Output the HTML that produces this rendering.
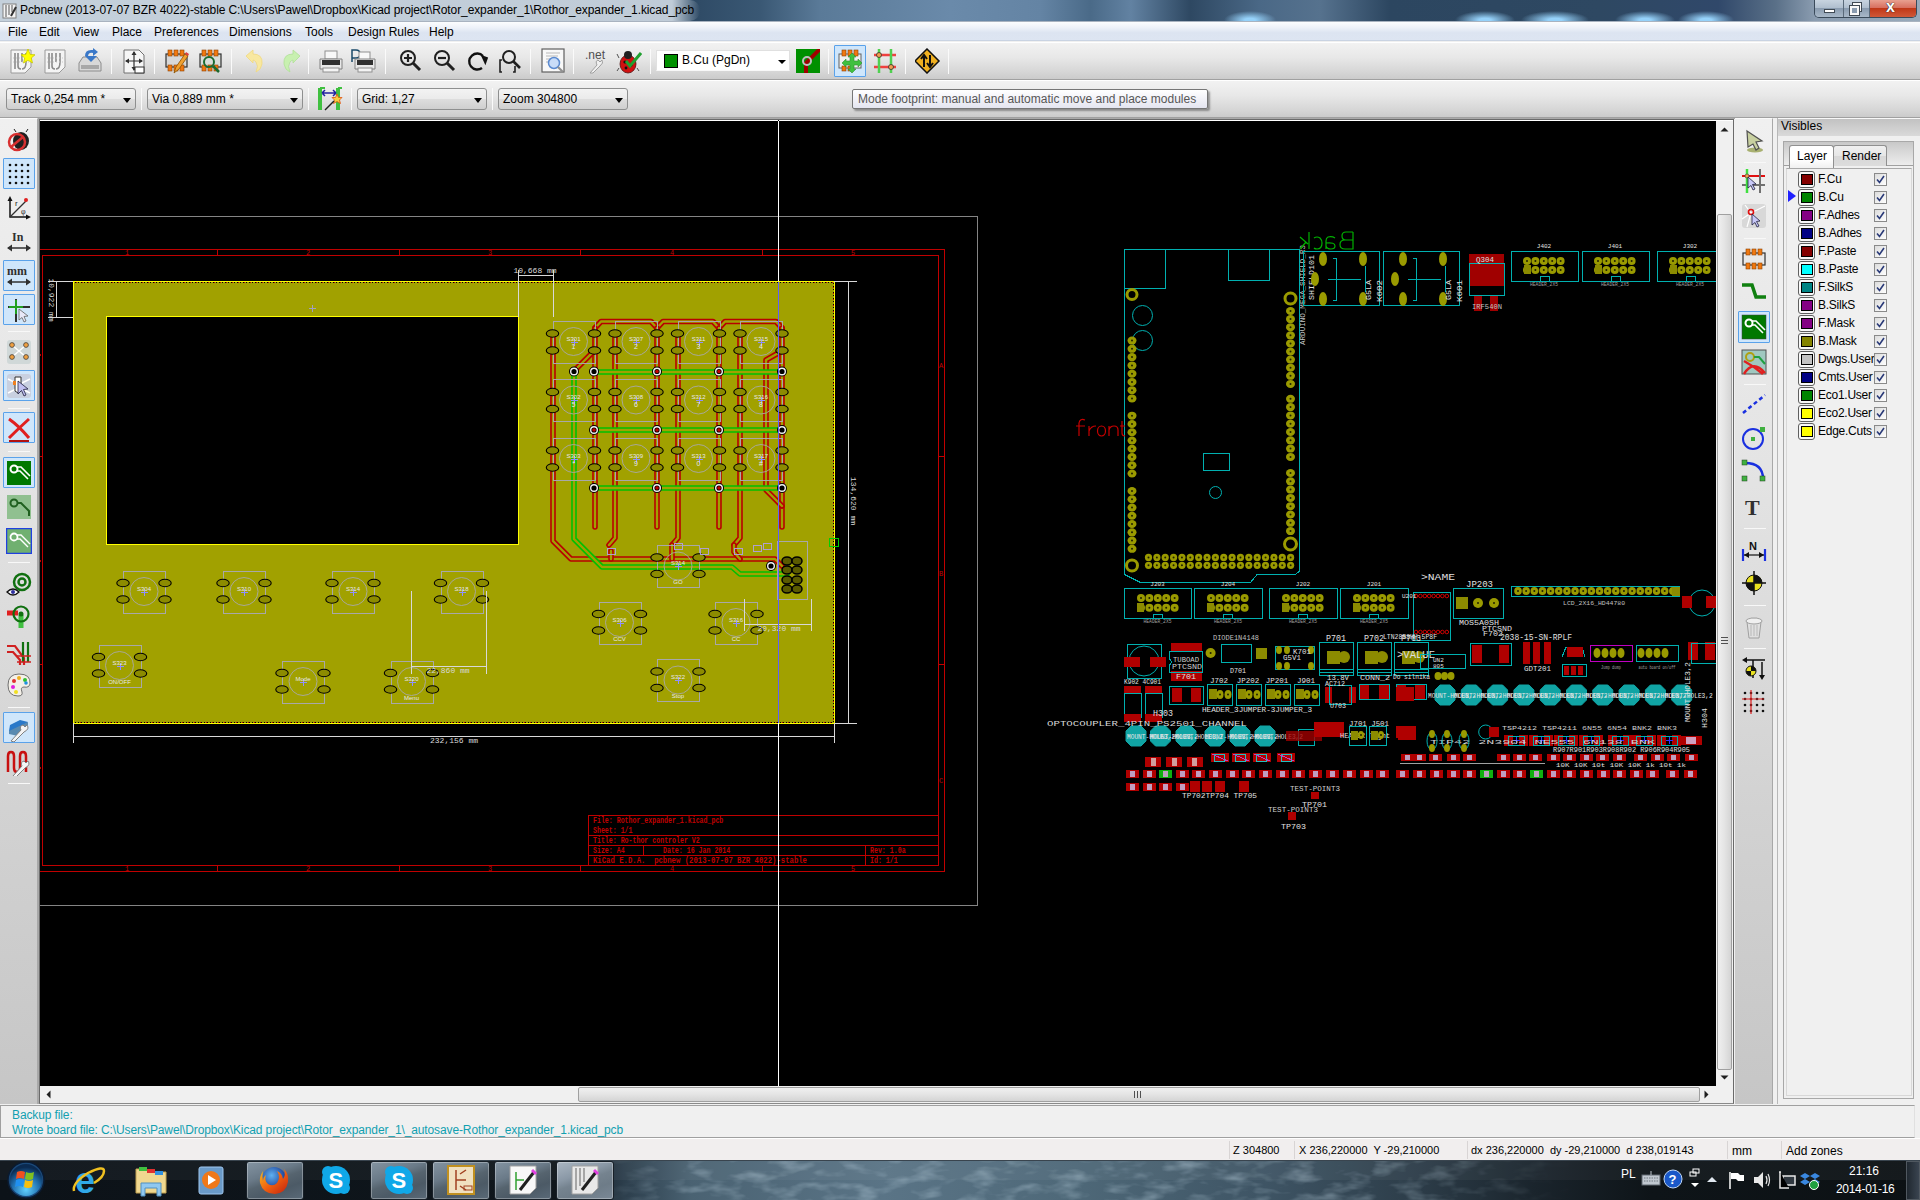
<!DOCTYPE html><html><head><meta charset="utf-8"><style>*{margin:0;padding:0;box-sizing:border-box}
html,body{width:1920px;height:1200px;overflow:hidden;background:#f0f0f0;font-family:"Liberation Sans",sans-serif;font-size:12px;color:#000}
.a{position:absolute}
svg{overflow:hidden}
#title{left:0;top:0;width:1920px;height:22px;overflow:hidden;
background:
 radial-gradient(ellipse 26px 9px at 1250px 20px,rgba(150,210,250,1) 20%,rgba(150,210,250,0)),
 radial-gradient(ellipse 30px 9px at 1485px 20px,rgba(150,210,250,1) 20%,rgba(150,210,250,0)),
 radial-gradient(ellipse 34px 9px at 1555px 20px,rgba(150,210,250,1) 20%,rgba(150,210,250,0)),
 radial-gradient(ellipse 30px 9px at 1645px 20px,rgba(150,210,250,1) 20%,rgba(150,210,250,0)),
 radial-gradient(ellipse 28px 9px at 1706px 20px,rgba(150,210,250,1) 20%,rgba(150,210,250,0)),
 linear-gradient(90deg,#2f4b66 36.3%,#3a5874 39.6%,#5a7a98 42.7%,#6a8aaa 49.5%,#6484a4 54.2%,#4a6a88 56.8%,#6282a2 58.9%,#2e4862 62%,#4a6886 65.6%,#56728e 68.75%,#2c4660 72.4%,#2e4862 83.3%,#30486a 89.5%,#5a7088 92.5%,#8a9cb0 94.5%,#98aabb 100%);
border-bottom:1px solid #3a4654}
#glow{left:0;top:0;width:700px;height:21px;border-radius:0 10px 10px 0;background:linear-gradient(90deg,#c4d0db 0,#c0ccd8 96%,rgba(192,204,216,0) 100%)}
#title .t{left:20px;top:3px;font-size:12px;color:#000;white-space:nowrap;letter-spacing:-0.1px}
#menu{left:0;top:21px;width:1920px;height:20px;background:linear-gradient(#fcfdfe 0,#eef2f9 30%,#dce4f1 60%,#dde5f2 100%);border-top:1px solid #a9b3c0;border-bottom:1px solid #c9d3e2}
#menu span{position:absolute;top:3px;font-size:12px}
#tb1{left:0;top:42px;width:1920px;height:38px;background:linear-gradient(#f2f2f2 0,#e8e8e8 40%,#d6d6d6 80%,#cbcbcb 100%);border-top:1px solid #fff;border-bottom:1px solid #a0a0a0}
#tb2{left:0;top:80px;width:1920px;height:38px;background:linear-gradient(#f2f2f2 0,#e8e8e8 40%,#d6d6d6 80%,#cbcbcb 100%);border-top:1px solid #fff;border-bottom:1px solid #a0a0a0}
.sep{position:absolute;width:1px;background:#c8c8c8;border-right:1px solid #fafafa}
.combo{position:absolute;height:22px;border:1px solid #8e8f8f;border-radius:3px;background:linear-gradient(#f3f3f3,#ebebeb 48%,#dddddd 52%,#cfcfcf);font-size:12px;padding:3px 0 0 4px;white-space:nowrap}
.combo:after{content:"";position:absolute;right:4px;top:9px;border-left:4.5px solid transparent;border-right:4.5px solid transparent;border-top:5px solid #000}
.ic{position:absolute}
#ltb{left:0;top:118px;width:38px;height:986px;background:linear-gradient(#f0f0f0 0,#e4e4e4 35%,#d2d2d2 70%,#c6c6c6 100%);border-right:1px solid #a8a8a8;border-top:1px solid #fafafa}
#vsb{left:1716px;top:121px;width:17px;height:965px;background:#f0f0f0}
#hsb{left:40px;top:1086px;width:1676px;height:17px;background:#f0f0f0}
#rtb{left:1734px;top:118px;width:39px;height:986px;background:linear-gradient(#f0f0f0 0,#e4e4e4 35%,#d2d2d2 70%,#c6c6c6 100%);border-left:1px solid #fafafa;border-right:1px solid #a8a8a8;border-top:1px solid #fafafa}
#vis{left:1777px;top:118px;width:143px;height:986px;background:#f0f0f0;border-left:1px solid #b8b8b8}
#msg{left:0;top:1105px;width:1915px;height:33px;background:#f0f0f0;border:1px solid #a0a0a0;border-right-color:#e0e0e0}
#msg div{position:absolute;left:11px;font-size:12px;color:#12a0b0;white-space:nowrap;letter-spacing:-0.12px}
#status{left:0;top:1138px;width:1920px;height:22px;background:#f1eeee;border-top:1px solid #fff}
#status span{position:absolute;top:5px;font-size:12px;white-space:nowrap}
#task{left:0;top:1160px;width:1920px;height:40px}
</style></head><body>
<div id="title" class="a"><div id="glow" class="a"></div><div class="a t">Pcbnew (2013-07-07 BZR 4022)-stable C:\Users\Pawel\Dropbox\Kicad project\Rotor_expander_1\Rothor_expander_1.kicad_pcb</div>
<svg class="ic" style="left:2px;top:3px" width="16" height="16" viewBox="0 0 16 16" ><rect x="1" y="1" width="13" height="14" fill="#f4f4f4" stroke="#808080"/><path d="M4 2V14M7 2V12M10 2V9" stroke="#707070" stroke-width="1.2"/><path d="M9 13L14 4" stroke="#303030" stroke-width="2"/></svg>
<div class="a" style="left:1814px;top:0;width:103px;height:18px;border:1px solid #3a4a5a;border-top:none;border-radius:0 0 5px 5px;overflow:hidden;display:flex"><div style="width:29px;height:17px;background:linear-gradient(#c8d4e0,#b0bfcf 45%,#8a9cb0 50%,#a8b8c8);border-right:1px solid #5a6a7a;position:relative"><div style="position:absolute;left:9px;top:9px;width:11px;height:4px;background:#fff;border:1px solid #404a54"></div></div><div style="width:26px;height:17px;background:linear-gradient(#c8d4e0,#b0bfcf 45%,#8a9cb0 50%,#a8b8c8);border-right:1px solid #5a6a7a;position:relative"><div style="position:absolute;left:9px;top:3px;width:8px;height:8px;border:2px solid #f8f8f8;outline:1px solid #404a54"></div><div style="position:absolute;left:6px;top:6px;width:9px;height:9px;border:2px solid #f8f8f8;background:#8a9cb0;outline:1px solid #404a54"></div></div><div style="width:46px;height:17px;background:linear-gradient(#e8a090,#d87060 45%,#c03818 50%,#d05838);position:relative"><div style="position:absolute;left:16px;top:-2px;font:bold 16px Liberation Sans;color:#fff;text-shadow:0 0 1px #202020,0 0 1px #202020">x</div></div></div>
</div>
<div id="menu" class="a">
<span style="left:8px">File</span>
<span style="left:39px">Edit</span>
<span style="left:73px">View</span>
<span style="left:112px">Place</span>
<span style="left:154px">Preferences</span>
<span style="left:229px">Dimensions</span>
<span style="left:305px">Tools</span>
<span style="left:348px">Design Rules</span>
<span style="left:429px">Help</span>
</div>
<div id="tb1" class="a"></div>
<div class="sep" style="left:111px;top:49px;height:25px"></div>
<div class="sep" style="left:154px;top:49px;height:25px"></div>
<div class="sep" style="left:231px;top:49px;height:25px"></div>
<div class="sep" style="left:308px;top:49px;height:25px"></div>
<div class="sep" style="left:385px;top:49px;height:25px"></div>
<div class="sep" style="left:530px;top:49px;height:25px"></div>
<div class="sep" style="left:573px;top:49px;height:25px"></div>
<div class="sep" style="left:650px;top:49px;height:25px"></div>
<div class="sep" style="left:828px;top:49px;height:25px"></div>
<div class="sep" style="left:905px;top:49px;height:25px"></div>
<div class="sep" style="left:948px;top:49px;height:25px"></div>
<svg class="ic" style="left:9px;top:48px" width="26" height="26" viewBox="0 0 26 26" ><path d="M2 2H22V19L16 25H2Z" fill="#f4f4f4" stroke="#9a9a9a"/><path d="M6 5V21M9 5V18Q9 21 12 21M13 5V14M17 5V14Q17 21 13 21" fill="none" stroke="#8a8a8a" stroke-width="1.6"/><path d="M4 10H20M4 14H20" stroke="#c8c8c8" stroke-dasharray="1 2"/><path d="M19 1L21.2 6.5L26 6.8L22.3 10L23.5 15L19 12.3L14.5 15L15.7 10L12 6.8L16.8 6.5Z" fill="#ffff00" stroke="#c8c800" stroke-width="0.8"/></svg>
<svg class="ic" style="left:43px;top:48px" width="26" height="26" viewBox="0 0 26 26" ><path d="M2 2H22V19L16 25H2Z" fill="#f4f4f4" stroke="#9a9a9a"/><path d="M6 5V21M9 5V18Q9 21 12 21M13 5V14M17 5V14Q17 21 13 21" fill="none" stroke="#8a8a8a" stroke-width="1.6"/><path d="M4 10H20M4 14H20" stroke="#c8c8c8" stroke-dasharray="1 2"/></svg>
<svg class="ic" style="left:77px;top:48px" width="26" height="26" viewBox="0 0 26 26" ><path d="M2 15L6 9H20L24 15V23H2Z" fill="#d8d8d8" stroke="#8c8c8c"/><rect x="4" y="17" width="18" height="4" fill="#a8a8a8"/><path d="M8 8Q8 1 16 2L16 0L21 4L16 8L16 5Q11 4 11 9Z" fill="#3a78c8"/><path d="M10 9L16 15L22 9Z" transform="translate(-2 -1)" fill="#3a78c8"/></svg>
<svg class="ic" style="left:121px;top:48px" width="26" height="26" viewBox="0 0 26 26" ><path d="M3 2H18L23 7V25H3Z" fill="#f6f6f6" stroke="#707070"/><path d="M13 4V22M5 13H21" stroke="#303030" stroke-width="1.2"/><path d="M13 3L10.5 7H15.5ZM13 23L10.5 19H15.5ZM4 13L8 10.5V15.5ZM22 13L18 10.5V15.5Z" fill="#303030"/><rect x="14" y="19" width="9" height="6" fill="#fff" stroke="#303030"/></svg>
<svg class="ic" style="left:163px;top:48px" width="26" height="26" viewBox="0 0 26 26" ><rect x="3" y="6" width="21" height="13" fill="#d8d8d8" stroke="#303030" stroke-width="1.2"/><g fill="#f07810" stroke="#8a4000" stroke-width="0.6"><rect x="5" y="2" width="4" height="6"/><rect x="11" y="2" width="4" height="6"/><rect x="17" y="2" width="4" height="6"/><rect x="5" y="17" width="4" height="6"/><rect x="11" y="17" width="4" height="6"/><rect x="17" y="17" width="4" height="6"/></g><path d="M11 25L13 19L22 6L25 8L16 21Z" fill="#f0a030" stroke="#8a5000" stroke-width="0.8"/><path d="M22 6L25 8L26 6L23 4Z" fill="#e04040"/></svg>
<svg class="ic" style="left:197px;top:48px" width="26" height="26" viewBox="0 0 26 26" ><rect x="3" y="6" width="21" height="13" fill="#d8dcd8" stroke="#303030" stroke-width="1.2"/><g fill="#f07810" stroke="#8a4000" stroke-width="0.6"><rect x="5" y="2" width="4" height="6"/><rect x="11" y="2" width="4" height="6"/><rect x="17" y="2" width="4" height="6"/><rect x="5" y="17" width="4" height="6"/><rect x="11" y="17" width="4" height="6"/><rect x="17" y="17" width="4" height="6"/></g><circle cx="12" cy="14" r="5" fill="none" stroke="#1a6a30" stroke-width="2"/><path d="M16 18L22 24" stroke="#1a6a30" stroke-width="2.5"/></svg>
<svg class="ic" style="left:242px;top:48px" width="26" height="26" viewBox="0 0 26 26" ><path d="M4 8L11 2V6Q21 6 20 16Q19 22 14 24Q17 18 14 14Q12 12 11 12V15Z" fill="#f8e8a0" stroke="#f0d880" stroke-width="0.8"/></svg>
<svg class="ic" style="left:278px;top:48px" width="26" height="26" viewBox="0 0 26 26" ><path d="M22 8L15 2V6Q5 6 6 16Q7 22 12 24Q9 18 12 14Q14 12 15 12V15Z" fill="#c8f0b0" stroke="#b0e098" stroke-width="0.8"/></svg>
<svg class="ic" style="left:318px;top:48px" width="26" height="26" viewBox="0 0 26 26" ><rect x="7" y="3" width="12" height="8" fill="#f8f8f8" stroke="#909090"/><path d="M2 11H24V21H2Z" fill="#e8e8e8" stroke="#808080"/><rect x="4" y="12" width="18" height="5" fill="#303030"/><rect x="5" y="20" width="16" height="4" fill="#f4f4f4" stroke="#909090"/></svg>
<svg class="ic" style="left:350px;top:48px" width="26" height="26" viewBox="0 0 26 26" ><path d="M2 14V2H6Q10 2 10 6Q10 10 6 10H2" fill="none" stroke="#1a4a6a" stroke-width="1.5"/><rect x="9" y="4" width="11" height="8" fill="#f8f8f8" stroke="#909090"/><path d="M5 11H25V21H5Z" fill="#e8e8e8" stroke="#808080"/><rect x="7" y="12" width="16" height="5" fill="#303030"/><rect x="8" y="20" width="14" height="4" fill="#f4f4f4" stroke="#909090"/></svg>
<svg class="ic" style="left:398px;top:48px" width="26" height="26" viewBox="0 0 26 26" ><circle cx="10" cy="10" r="7" fill="none" stroke="#202020" stroke-width="2"/><path d="M15 15L22 22" stroke="#202020" stroke-width="3"/><path d="M6 10H14M10 6V14" stroke="#202020" stroke-width="2.2"/></svg>
<svg class="ic" style="left:432px;top:48px" width="26" height="26" viewBox="0 0 26 26" ><circle cx="10" cy="10" r="7" fill="none" stroke="#202020" stroke-width="2"/><path d="M15 15L22 22" stroke="#202020" stroke-width="3"/><path d="M6 10H14" stroke="#202020" stroke-width="2.2"/></svg>
<svg class="ic" style="left:465px;top:48px" width="26" height="26" viewBox="0 0 26 26" ><path d="M18 8A8 8 0 1 0 17 20" fill="none" stroke="#101010" stroke-width="2.4"/><path d="M14 8H22V16Z" fill="#101010" transform="rotate(20 18 12)"/></svg>
<svg class="ic" style="left:497px;top:48px" width="26" height="26" viewBox="0 0 26 26" ><circle cx="12" cy="9" r="6" fill="none" stroke="#202020" stroke-width="2"/><path d="M16 13L23 20" stroke="#202020" stroke-width="2.6"/><path d="M5 12H3V24H5M16 24H18V18" fill="none" stroke="#202020" stroke-width="1.6"/></svg>
<svg class="ic" style="left:540px;top:48px" width="26" height="26" viewBox="0 0 26 26" ><rect x="2" y="1" width="22" height="23" fill="#f8f8f8" stroke="#606060" stroke-width="1.2"/><path d="M6 5H20M6 8H18M6 11H16M6 14H12" stroke="#b8b8b8"/><circle cx="14" cy="15" r="5.5" fill="#c8dcf8" stroke="#5a8ad0" stroke-width="1.5"/><path d="M18 19L23 24" stroke="#909090" stroke-width="2.2"/></svg>
<svg class="ic" style="left:583px;top:48px" width="26" height="26" viewBox="0 0 26 26" ><text x="2" y="11" font-family="Liberation Sans" font-size="12" fill="#505050">.net</text><path d="M7 25L14 17Q12 13 15 12L17 14L19 12Q21 15 17 18L10 25Z" fill="#f0f0f0" stroke="#a0a0a0"/></svg>
<svg class="ic" style="left:616px;top:48px" width="26" height="26" viewBox="0 0 26 26" ><ellipse cx="12" cy="16" rx="8" ry="9" fill="#d01010" stroke="#501010" stroke-width="0.8"/><circle cx="12" cy="7" r="4" fill="#202020"/><circle cx="9" cy="14" r="1.6" fill="#101010"/><circle cx="15" cy="17" r="1.6" fill="#101010"/><circle cx="10" cy="20" r="1.4" fill="#101010"/><path d="M3 10L1 6M21 10L23 6M3 20L1 23M21 20L23 23" stroke="#505050"/><path d="M10 13L14 18L25 5" fill="none" stroke="#20a030" stroke-width="3"/></svg>
<div class="a" style="left:656px;top:50px;width:134px;height:21px;background:#fff;border:1px solid #e0e0e0;border-bottom-color:#f8f8f8"><div class="a" style="left:7px;top:3px;width:14px;height:14px;background:#009000;border:1px solid #000"></div><div class="a" style="left:25px;top:2px;font-size:12px;white-space:nowrap">B.Cu (PgDn)</div><div class="a" style="left:121px;top:9px;border-left:4px solid transparent;border-right:4px solid transparent;border-top:4px solid #000"></div></div>
<svg class="ic" style="left:796px;top:49px" width="24" height="24" viewBox="0 0 24 24" ><rect x="0" y="0" width="24" height="24" fill="#009000"/><path d="M10 24V14L24 0" fill="none" stroke="#a00000" stroke-width="4"/><circle cx="11" cy="12" r="4" fill="none" stroke="#c0c0c0" stroke-width="2"/></svg>
<div class="a" style="left:834px;top:45px;width:32px;height:32px;background:#cfe6fb;border:1px solid #5aa2ea;border-radius:1px"></div>
<svg class="ic" style="left:837px;top:48px" width="26" height="26" viewBox="0 0 26 26" ><rect x="2" y="6" width="22" height="14" fill="#f0f0f0" stroke="#606060"/><g fill="#f07810" stroke="#8a4000" stroke-width="0.6"><rect x="5" y="2" width="4" height="6"/><rect x="11" y="2" width="4" height="6"/><rect x="17" y="2" width="4" height="6"/><rect x="5" y="18" width="4" height="5"/><rect x="11" y="18" width="4" height="5"/></g><path d="M15 9L11 13H13V17H9V15L5 19L9 23V21H13V25H11L15 29L19 25H17V21H21V23L25 19L21 15V17H17V13H19Z" transform="translate(0 -4)" fill="#40c040" stroke="#309030" stroke-width="0.6"/></svg>
<svg class="ic" style="left:873px;top:48px" width="26" height="26" viewBox="0 0 26 26" ><path d="M1 7H23M1 19H23" stroke="#f04040" stroke-width="2.5"/><path d="M6 1V25M18 1V25" stroke="#50d050" stroke-width="2.5"/><circle cx="6" cy="7" r="2.5" fill="#f0a050" stroke="#303030" stroke-width="0.8"/><circle cx="18" cy="19" r="2.5" fill="#f0a050" stroke="#303030" stroke-width="0.8"/></svg>
<svg class="ic" style="left:915px;top:48px" width="26" height="26" viewBox="0 0 26 26" ><path d="M12 1L24 13L12 25L0 13Z" fill="#f0b020" stroke="#101010" stroke-width="1.5"/><path d="M9 19V8M6 11L9 7L12 11M15 7V18M12 15L15 19L18 15" fill="none" stroke="#101010" stroke-width="2"/></svg>
<div id="tb2" class="a">
<div class="combo" style="left:6px;top:7px;width:130px">Track 0,254 mm *</div>
<div class="combo" style="left:147px;top:7px;width:156px">Via 0,889 mm *</div>
<div class="combo" style="left:357px;top:7px;width:130px">Grid: 1,27</div>
<div class="combo" style="left:498px;top:7px;width:130px">Zoom 304800</div>
</div>
<div class="sep" style="left:141px;top:88px;height:22px"></div>
<div class="sep" style="left:308px;top:88px;height:22px"></div>
<div class="sep" style="left:351px;top:88px;height:22px"></div>
<div class="sep" style="left:492px;top:88px;height:22px"></div>
<svg class="ic" style="left:317px;top:86px" width="26" height="26" viewBox="0 0 26 26" ><path d="M3 2V24M21 2V24" stroke="#40c040" stroke-width="4"/><path d="M3 2H8M21 2H25" stroke="#40c040" stroke-width="2"/><path d="M5 7H19M5 7L8 4M5 7L8 10M19 7L16 4M19 7L16 10" fill="none" stroke="#2020a0" stroke-width="1.5"/><path d="M20 8L21.5 11.5L25 11.5L22.5 14L23.5 17.5L20 15.5L16.5 17.5L17.5 14L15 11.5L18.5 11.5Z" fill="#f8d040" stroke="#e05010" stroke-width="0.8"/><path d="M8 24L17 15" stroke="#202020" stroke-width="1.5"/></svg>
<div class="a" style="left:852px;top:89px;width:356px;height:20px;border:1px solid #767676;border-radius:2px;background:linear-gradient(#ffffff,#e4e5f0);box-shadow:2px 2px 2px rgba(0,0,0,.35);font-size:12px;color:#575757;padding:2px 0 0 5px;white-space:nowrap">Mode footprint: manual and automatic move and place modules</div>
<div id="ltb" class="a"></div>
<div class="a" style="left:3px;top:158px;width:32px;height:31px;background:#cfe6fb;border:1px solid #5aa2ea;border-radius:1px"></div>
<div class="a" style="left:3px;top:260px;width:32px;height:31px;background:#cfe6fb;border:1px solid #5aa2ea;border-radius:1px"></div>
<div class="a" style="left:3px;top:294px;width:32px;height:31px;background:#cfe6fb;border:1px solid #5aa2ea;border-radius:1px"></div>
<div class="a" style="left:3px;top:370px;width:32px;height:31px;background:#cfe6fb;border:1px solid #5aa2ea;border-radius:1px"></div>
<div class="a" style="left:3px;top:412px;width:32px;height:31px;background:#cfe6fb;border:1px solid #5aa2ea;border-radius:1px"></div>
<div class="a" style="left:3px;top:457px;width:32px;height:31px;background:#cfe6fb;border:1px solid #5aa2ea;border-radius:1px"></div>
<div class="a" style="left:3px;top:712px;width:32px;height:31px;background:#cfe6fb;border:1px solid #5aa2ea;border-radius:1px"></div>
<svg class="ic" style="left:6px;top:127px" width="26" height="26" viewBox="0 0 26 26" ><ellipse cx="15" cy="14" rx="8" ry="9" fill="#202020"/><path d="M10 5L8 2M20 5L22 2" stroke="#202020"/><circle cx="11" cy="15" r="8" fill="none" stroke="#d83030" stroke-width="2.5"/><path d="M5 20L17 10" stroke="#d83030" stroke-width="2.5"/></svg>
<svg class="ic" style="left:6px;top:161px" width="26" height="26" viewBox="0 0 26 26" ><circle cx="4" cy="4" r="1.3" fill="#101010"/><circle cx="4" cy="10" r="1.3" fill="#101010"/><circle cx="4" cy="16" r="1.3" fill="#101010"/><circle cx="4" cy="22" r="1.3" fill="#101010"/><circle cx="10" cy="4" r="1.3" fill="#101010"/><circle cx="10" cy="10" r="1.3" fill="#101010"/><circle cx="10" cy="16" r="1.3" fill="#101010"/><circle cx="10" cy="22" r="1.3" fill="#101010"/><circle cx="16" cy="4" r="1.3" fill="#101010"/><circle cx="16" cy="10" r="1.3" fill="#101010"/><circle cx="16" cy="16" r="1.3" fill="#101010"/><circle cx="16" cy="22" r="1.3" fill="#101010"/><circle cx="22" cy="4" r="1.3" fill="#101010"/><circle cx="22" cy="10" r="1.3" fill="#101010"/><circle cx="22" cy="16" r="1.3" fill="#101010"/><circle cx="22" cy="22" r="1.3" fill="#101010"/></svg>
<svg class="ic" style="left:6px;top:195px" width="26" height="26" viewBox="0 0 26 26" ><path d="M4 3V22H23" fill="none" stroke="#101010" stroke-width="1.5"/><path d="M4 1L1.5 6H6.5ZM25 22L20 19.5V24.5Z" fill="#101010"/><path d="M4 22L20 6" stroke="#303030" stroke-width="1.2"/><circle cx="20" cy="5" r="2" fill="#e02020"/><text x="9" y="11" font-family="Liberation Sans" font-size="8" fill="#202020">r</text><text x="15" y="19" font-family="Liberation Serif" font-size="8" fill="#202020">φ</text></svg>
<svg class="ic" style="left:6px;top:229px" width="26" height="26" viewBox="0 0 26 26" ><text x="6" y="12" font-family="Liberation Serif" font-size="12" font-weight="bold" fill="#303030">In</text><path d="M2 19H24" stroke="#303030" stroke-width="1.5"/><path d="M1 19L6 15.5V22.5ZM25 19L20 15.5V22.5Z" fill="#303030"/></svg>
<svg class="ic" style="left:6px;top:263px" width="26" height="26" viewBox="0 0 26 26" ><text x="1" y="12" font-family="Liberation Serif" font-size="12" font-weight="bold" fill="#303030">mm</text><path d="M2 19H24" stroke="#303030" stroke-width="1.5"/><path d="M1 19L6 15.5V22.5ZM25 19L20 15.5V22.5Z" fill="#303030"/></svg>
<svg class="ic" style="left:6px;top:297px" width="26" height="26" viewBox="0 0 26 26" ><path d="M2 10H24" stroke="#303030" stroke-width="2"/><path d="M10 2V25" stroke="#303030" stroke-width="2"/><path d="M10 3V17M3 10H17" stroke="#20a020" stroke-width="2"/><path d="M13 12L22 19L18 19.5L20 24L18 25L16 20.5L13 23Z" fill="#e8e8f8" stroke="#606060" stroke-width="0.8"/></svg>
<svg class="ic" style="left:6px;top:339px" width="26" height="26" viewBox="0 0 26 26" ><rect x="1" y="1" width="24" height="24" rx="3" fill="#d0d8d8"/><path d="M6 6L20 18M20 6L6 18M6 18L20 6" stroke="#fff" stroke-width="1.5"/><circle cx="6" cy="6" r="2.4" fill="#f0a040" stroke="#404040" stroke-width="0.8"/><circle cx="20" cy="6" r="2.4" fill="#f0a040" stroke="#404040" stroke-width="0.8"/><circle cx="6" cy="18" r="2.4" fill="#f0a040" stroke="#404040" stroke-width="0.8"/><circle cx="20" cy="18" r="2.4" fill="#f0a040" stroke="#404040" stroke-width="0.8"/></svg>
<svg class="ic" style="left:6px;top:373px" width="26" height="26" viewBox="0 0 26 26" ><rect x="1" y="1" width="24" height="24" rx="3" fill="#c8d0e0"/><path d="M2 6L10 10M2 20L10 16M24 6L16 10M24 20L16 16" stroke="#fff" stroke-width="1.5"/><path d="M9 4V18L12 20L15 18V4Z" fill="#ffffff" stroke="#303030"/><path d="M12 8L22 16L17.5 16.5L20 22L18 23L15.5 17.5L12 21Z" fill="#c0c0f0" stroke="#202040" stroke-width="0.8"/><rect x="7" y="8" width="3" height="4" fill="#f08020"/></svg>
<svg class="ic" style="left:6px;top:416px" width="26" height="26" viewBox="0 0 26 26" ><path d="M3 3Q13 10 23 22M23 3Q13 12 3 22" fill="none" stroke="#e02020" stroke-width="3"/><path d="M3 25H23" stroke="#b01010" stroke-width="2"/></svg>
<svg class="ic" style="left:6px;top:460px" width="26" height="26" viewBox="0 0 26 26" ><rect x="1" y="1" width="24" height="24" fill="#007800"/><circle cx="8" cy="9" r="3.5" fill="none" stroke="#fff" stroke-width="2"/><path d="M11 7H15L24 16M11 11H14L22 19" fill="none" stroke="#fff" stroke-width="1.6"/></svg>
<svg class="ic" style="left:6px;top:494px" width="26" height="26" viewBox="0 0 26 26" ><rect x="1" y="1" width="24" height="24" fill="#90c090"/><circle cx="8" cy="9" r="3.5" fill="none" stroke="#206020" stroke-width="2"/><path d="M11 9H15L23 17V22" fill="none" stroke="#206020" stroke-width="2"/></svg>
<svg class="ic" style="left:6px;top:528px" width="26" height="26" viewBox="0 0 26 26" ><rect x="0.5" y="0.5" width="25" height="25" fill="#70b070" stroke="#2040e0" stroke-width="1.5"/><circle cx="8" cy="9" r="3.5" fill="none" stroke="#fff" stroke-width="1.8"/><path d="M11 7H15L24 16M11 11H14L22 19" fill="none" stroke="#fff" stroke-width="1.4"/></svg>
<svg class="ic" style="left:6px;top:572px" width="26" height="26" viewBox="0 0 26 26" ><circle cx="16" cy="10" r="8" fill="none" stroke="#107010" stroke-width="2.5"/><circle cx="16" cy="10" r="3.5" fill="none" stroke="#107010" stroke-width="2.5"/><path d="M1 20Q7 14 13 20Q7 26 1 20Z" fill="#fff" stroke="#101010" stroke-width="1.3"/><circle cx="7" cy="20" r="2" fill="#3030a0"/></svg>
<svg class="ic" style="left:6px;top:603px" width="26" height="26" viewBox="0 0 26 26" ><path d="M1 10H12" stroke="#e02020" stroke-width="5"/><path d="M15 12V25" stroke="#40c040" stroke-width="5"/><circle cx="15" cy="11" r="7.5" fill="none" stroke="#107010" stroke-width="2.2"/><circle cx="15" cy="11" r="2.5" fill="#107010"/></svg>
<svg class="ic" style="left:6px;top:640px" width="26" height="26" viewBox="0 0 26 26" ><path d="M1 6H9L18 18V25M1 12H7L14 20V25" fill="none" stroke="#d02020" stroke-width="2.2"/><path d="M17 2V22M22 2V22" stroke="#107010" stroke-width="2.2"/><path d="M11 16H25M11 22H25" stroke="#d02020" stroke-width="1.5"/></svg>
<svg class="ic" style="left:6px;top:672px" width="26" height="26" viewBox="0 0 26 26" ><path d="M13 2Q25 2 24 12Q23 16 18 15Q14 15 16 20Q17 24 12 24Q2 24 2 13Q2 2 13 2Z" fill="#f4f0e8" stroke="#707070"/><circle cx="8" cy="9" r="2" fill="#e03030"/><circle cx="13" cy="6" r="2" fill="#f0b020"/><circle cx="19" cy="8" r="2" fill="#30c030"/><circle cx="7" cy="15" r="2" fill="#e020e0"/><circle cx="10" cy="20" r="2" fill="#f0e020"/><circle cx="20" cy="11" r="1.8" fill="#2090e0"/></svg>
<svg class="ic" style="left:6px;top:716px" width="26" height="26" viewBox="0 0 26 26" ><path d="M4 9L3 15L12 15L22 6L14 4Z" fill="#2a78c8"/><path d="M3 15V18L12 20L22 9V6" fill="#5a8ab0"/><path d="M5 25L15 14Q13 10 17 9L19 11L21 9Q24 13 18 16L8 26Z" fill="#f4f4f4" stroke="#808080"/></svg>
<svg class="ic" style="left:6px;top:750px" width="26" height="26" viewBox="0 0 26 26" ><path d="M2 22V6Q2 2 5 2Q8 2 8 6V18Q8 22 11 22Q14 22 14 18V6Q14 2 17 2Q20 2 20 6V22" fill="none" stroke="#c81010" stroke-width="2.5"/><path d="M7 26L16 16Q14 12 18 11L20 13L22 11Q25 15 19 18L10 27Z" fill="#f4f4f4" stroke="#808080"/></svg>
<div class="a" style="left:8px;top:331px;width:22px;height:1px;background:#b8b8b8;border-bottom:1px solid #f8f8f8"></div>
<div class="a" style="left:8px;top:408px;width:22px;height:1px;background:#b8b8b8;border-bottom:1px solid #f8f8f8"></div>
<div class="a" style="left:8px;top:451px;width:22px;height:1px;background:#b8b8b8;border-bottom:1px solid #f8f8f8"></div>
<div class="a" style="left:8px;top:562px;width:22px;height:1px;background:#b8b8b8;border-bottom:1px solid #f8f8f8"></div>
<div class="a" style="left:8px;top:707px;width:22px;height:1px;background:#b8b8b8;border-bottom:1px solid #f8f8f8"></div>
<div class="a" style="left:8px;top:783px;width:22px;height:1px;background:#b8b8b8;border-bottom:1px solid #f8f8f8"></div>
<div id="rtb" class="a"></div>
<div class="a" style="left:1738px;top:311px;width:32px;height:32px;background:#cfe6fb;border:1px solid #5aa2ea;border-radius:1px"></div>
<svg class="ic" style="left:1741px;top:128px" width="26" height="26" viewBox="0 0 26 26" ><ellipse cx="14" cy="22" rx="8" ry="2.5" fill="#a8b070"/><path d="M6 3L21 13L15 14L18 20L15 22L12 16L7 19Z" fill="#c8d0a0" stroke="#505050" stroke-width="1.2"/></svg>
<svg class="ic" style="left:1741px;top:168px" width="26" height="26" viewBox="0 0 26 26" ><path d="M1 8H24" stroke="#e01010" stroke-width="2"/><path d="M1 17H24" stroke="#707070" stroke-width="2"/><path d="M6 1V25" stroke="#40e040" stroke-width="2.5"/><path d="M19 1V25" stroke="#707070" stroke-width="2"/><circle cx="6" cy="8" r="2" fill="#f0a050" stroke="#404040" stroke-width="0.6"/><path d="M7 9L15 16L11.5 16.5L14 21L12 22L10 17.5L7 20Z" fill="#c8c8f8" stroke="#202040" stroke-width="0.8"/></svg>
<svg class="ic" style="left:1741px;top:203px" width="26" height="26" viewBox="0 0 26 26" ><rect x="1" y="1" width="24" height="24" rx="3" fill="#d8d8d8"/><path d="M10 10L4 2M10 10L1 16M10 10L24 3M10 10L6 24" stroke="#fff" stroke-width="1.2"/><circle cx="10" cy="9" r="2.5" fill="none" stroke="#e01010" stroke-width="1.6"/><path d="M11 11L19 18L15.5 18.5L18 23L16 24L14 19.5L11 22Z" fill="#c8c8f8" stroke="#202040" stroke-width="0.8"/></svg>
<svg class="ic" style="left:1741px;top:246px" width="26" height="26" viewBox="0 0 26 26" ><rect x="2" y="7" width="22" height="12" fill="#e8e8e8" stroke="#303030" stroke-width="1.2"/><g fill="#f07810" stroke="#8a4000" stroke-width="0.6"><rect x="5" y="3" width="4" height="6"/><rect x="11" y="3" width="4" height="6"/><rect x="17" y="3" width="4" height="6"/><rect x="5" y="17" width="4" height="6"/><rect x="11" y="17" width="4" height="6"/><rect x="17" y="17" width="4" height="6"/></g></svg>
<svg class="ic" style="left:1741px;top:279px" width="26" height="26" viewBox="0 0 26 26" ><path d="M1 6H11L15 18H25" fill="none" stroke="#108010" stroke-width="3.5"/></svg>
<svg class="ic" style="left:1741px;top:314px" width="26" height="26" viewBox="0 0 26 26" ><rect x="1" y="1" width="24" height="24" fill="#007800" stroke="#404040" stroke-width="0.5"/><circle cx="8" cy="9" r="3.5" fill="none" stroke="#fff" stroke-width="2"/><path d="M11 7H15L24 16M11 11H14L22 19" fill="none" stroke="#fff" stroke-width="1.6"/></svg>
<svg class="ic" style="left:1741px;top:349px" width="26" height="26" viewBox="0 0 26 26" ><rect x="1" y="1" width="24" height="24" fill="#a0c8c0" stroke="#505050"/><circle cx="9" cy="8" r="4" fill="none" stroke="#b0a010" stroke-width="2"/><path d="M13 8H18L24 15" fill="none" stroke="#20a040" stroke-width="2"/><path d="M3 25Q12 10 24 24M3 12Q14 18 22 25" fill="none" stroke="#e02020" stroke-width="2.5"/></svg>
<svg class="ic" style="left:1741px;top:391px" width="26" height="26" viewBox="0 0 26 26" ><path d="M2 22L24 4" stroke="#1a30e0" stroke-width="2.5" stroke-dasharray="4 3"/></svg>
<svg class="ic" style="left:1741px;top:425px" width="26" height="26" viewBox="0 0 26 26" ><circle cx="12" cy="14" r="10" fill="none" stroke="#1a30e0" stroke-width="2"/><rect x="10" y="12" width="4" height="4" fill="#40b040"/><rect x="19" y="2" width="5" height="5" fill="#40b040"/></svg>
<svg class="ic" style="left:1741px;top:459px" width="26" height="26" viewBox="0 0 26 26" ><path d="M4 4Q22 4 22 20" fill="none" stroke="#1a30e0" stroke-width="2.5"/><rect x="1" y="1" width="5" height="5" fill="#40b040" stroke="#204020" stroke-width="0.5"/><rect x="1" y="17" width="5" height="5" fill="#40b040" stroke="#204020" stroke-width="0.5"/><rect x="19" y="17" width="5" height="5" fill="#40b040" stroke="#204020" stroke-width="0.5"/></svg>
<svg class="ic" style="left:1741px;top:494px" width="26" height="26" viewBox="0 0 26 26" ><text x="4" y="21" font-family="Liberation Serif" font-size="22" font-weight="bold" fill="#303030">T</text></svg>
<svg class="ic" style="left:1741px;top:538px" width="26" height="26" viewBox="0 0 26 26" ><text x="8" y="12" font-family="Liberation Sans" font-size="11" font-weight="bold" fill="#101010">N</text><path d="M2 11V23M24 11V23" stroke="#1a30e0" stroke-width="2.2"/><path d="M3 17H23" stroke="#101010" stroke-width="1.2"/><path d="M3 17L8 14V20ZM23 17L18 14V20Z" fill="#101010"/></svg>
<svg class="ic" style="left:1741px;top:570px" width="26" height="26" viewBox="0 0 26 26" ><circle cx="13" cy="13" r="8" fill="#e8e020" stroke="#101010" stroke-width="1"/><path d="M13 5A8 8 0 0 1 21 13H13ZM13 21A8 8 0 0 1 5 13H13Z" fill="#101010"/><path d="M13 1V25M1 13H25" stroke="#101010" stroke-width="1.5"/></svg>
<svg class="ic" style="left:1741px;top:614px" width="26" height="26" viewBox="0 0 26 26" ><path d="M6 8L8 24H18L20 8Z" fill="#e0e0e0" stroke="#a0a0a0"/><ellipse cx="13" cy="7" rx="8" ry="3" fill="#f0f0f0" stroke="#a0a0a0"/><path d="M10 11V22M13 11V22M16 11V22" stroke="#b8b8b8"/><rect x="10" y="3" width="6" height="2" fill="#c0c0c0"/></svg>
<svg class="ic" style="left:1741px;top:656px" width="26" height="26" viewBox="0 0 26 26" ><path d="M3 4H24M12 4V22" stroke="#101010" stroke-width="1.5"/><path d="M1 4L6 1V7ZM21 24L18 19H24Z" fill="#101010"/><path d="M21 6V21" stroke="#101010" stroke-width="1.5"/><circle cx="10" cy="15" r="5" fill="#e8e020" stroke="#101010"/><path d="M10 10A5 5 0 0 1 15 15H10ZM10 20A5 5 0 0 1 5 15H10Z" fill="#101010"/></svg>
<svg class="ic" style="left:1741px;top:689px" width="26" height="26" viewBox="0 0 26 26" ><circle cx="4" cy="4" r="1.3" fill="#101010"/><circle cx="4" cy="10" r="1.3" fill="#101010"/><circle cx="4" cy="16" r="1.3" fill="#101010"/><circle cx="4" cy="22" r="1.3" fill="#101010"/><circle cx="10" cy="4" r="1.3" fill="#101010"/><circle cx="10" cy="10" r="1.3" fill="#101010"/><circle cx="10" cy="16" r="1.3" fill="#101010"/><circle cx="10" cy="22" r="1.3" fill="#101010"/><circle cx="16" cy="4" r="1.3" fill="#101010"/><circle cx="16" cy="10" r="1.3" fill="#101010"/><circle cx="16" cy="16" r="1.3" fill="#101010"/><circle cx="16" cy="22" r="1.3" fill="#101010"/><circle cx="22" cy="4" r="1.3" fill="#101010"/><circle cx="22" cy="10" r="1.3" fill="#101010"/><circle cx="22" cy="16" r="1.3" fill="#101010"/><circle cx="22" cy="22" r="1.3" fill="#101010"/><path d="M1 10H23M10 1V25" stroke="#e02020" stroke-width="1.2"/></svg>
<div class="a" style="left:1744px;top:162px;width:22px;height:1px;background:#b8b8b8;border-bottom:1px solid #f8f8f8"></div>
<div class="a" style="left:1744px;top:238px;width:22px;height:1px;background:#b8b8b8;border-bottom:1px solid #f8f8f8"></div>
<div class="a" style="left:1744px;top:384px;width:22px;height:1px;background:#b8b8b8;border-bottom:1px solid #f8f8f8"></div>
<div class="a" style="left:1744px;top:528px;width:22px;height:1px;background:#b8b8b8;border-bottom:1px solid #f8f8f8"></div>
<div class="a" style="left:1744px;top:605px;width:22px;height:1px;background:#b8b8b8;border-bottom:1px solid #f8f8f8"></div>
<div class="a" style="left:1744px;top:648px;width:22px;height:1px;background:#b8b8b8;border-bottom:1px solid #f8f8f8"></div>
<div id="vis" class="a"></div>
<div class="a" style="left:1778px;top:118px;width:142px;height:18px;background:linear-gradient(#c2c2c2,#d0d0d0 60%,#dadada);border-top:1px solid #f8f8f8"></div>
<div class="a" style="left:1781px;top:119px;font-size:12px">Visibles</div>
<div class="a" style="left:1783px;top:141px;width:131px;height:958px;border:1px solid #a8a8a8;background:#f0f0f0"></div>
<div class="a" style="left:1784px;top:142px;width:129px;height:24px;background:linear-gradient(#c8c8c8,#d8d8d8 40%,#eeeeee)"></div>
<div class="a" style="left:1784px;top:165px;width:129px;height:1px;background:#a0a0a0"></div>
<div class="a" style="left:1786px;top:168px;width:126px;height:928px;border:1px solid #d8d8d8;border-top-color:#a8a8a8;background:#f0f0f0"></div>
<div class="a" style="left:1833px;top:145px;width:54px;height:21px;border:1px solid #909090;border-bottom:none;border-radius:3px 3px 0 0;background:linear-gradient(#f0f0f0,#e6e6e6 50%,#d8d8d8 51%,#dcdcdc);font-size:12px;padding:3px 0 0 8px">Render</div>
<div class="a" style="left:1789px;top:145px;width:45px;height:23px;border:1px solid #909090;border-bottom:none;border-radius:3px 3px 0 0;background:linear-gradient(#ffffff,#ffffff 60%,#f0f0f0);font-size:12px;padding:3px 0 0 7px">Layer</div>
<div class="a" style="left:1798px;top:171px;width:17px;height:17px;border:1px solid #606060;border-radius:3px;background:#f8f8f8"></div>
<div class="a" style="left:1801px;top:174px;width:12px;height:11px;background:#840000;border:1px solid #000"></div>
<div class="a" style="left:1818px;top:172px;font-size:12px;letter-spacing:-0.25px;white-space:nowrap">F.Cu</div>
<div class="a" style="left:1874px;top:173px;width:13px;height:13px;border:1px solid #8a8a8a;background:linear-gradient(135deg,#dcdcdc,#ffffff)"></div>
<svg class="ic" style="left:1876px;top:175px" width="9" height="9" viewBox="0 0 9 9" ><path d="M1 4.5L3.5 7.5L8 1" fill="none" stroke="#2a3a78" stroke-width="1.6"/></svg>
<div class="a" style="left:1798px;top:189px;width:17px;height:17px;border:1px solid #606060;border-radius:3px;background:#f8f8f8"></div>
<div class="a" style="left:1801px;top:192px;width:12px;height:11px;background:#008400;border:1px solid #000"></div>
<div class="a" style="left:1818px;top:190px;font-size:12px;letter-spacing:-0.25px;white-space:nowrap">B.Cu</div>
<div class="a" style="left:1874px;top:191px;width:13px;height:13px;border:1px solid #8a8a8a;background:linear-gradient(135deg,#dcdcdc,#ffffff)"></div>
<svg class="ic" style="left:1876px;top:193px" width="9" height="9" viewBox="0 0 9 9" ><path d="M1 4.5L3.5 7.5L8 1" fill="none" stroke="#2a3a78" stroke-width="1.6"/></svg>
<div class="a" style="left:1798px;top:207px;width:17px;height:17px;border:1px solid #606060;border-radius:3px;background:#f8f8f8"></div>
<div class="a" style="left:1801px;top:210px;width:12px;height:11px;background:#840084;border:1px solid #000"></div>
<div class="a" style="left:1818px;top:208px;font-size:12px;letter-spacing:-0.25px;white-space:nowrap">F.Adhes</div>
<div class="a" style="left:1874px;top:209px;width:13px;height:13px;border:1px solid #8a8a8a;background:linear-gradient(135deg,#dcdcdc,#ffffff)"></div>
<svg class="ic" style="left:1876px;top:211px" width="9" height="9" viewBox="0 0 9 9" ><path d="M1 4.5L3.5 7.5L8 1" fill="none" stroke="#2a3a78" stroke-width="1.6"/></svg>
<div class="a" style="left:1798px;top:225px;width:17px;height:17px;border:1px solid #606060;border-radius:3px;background:#f8f8f8"></div>
<div class="a" style="left:1801px;top:228px;width:12px;height:11px;background:#000084;border:1px solid #000"></div>
<div class="a" style="left:1818px;top:226px;font-size:12px;letter-spacing:-0.25px;white-space:nowrap">B.Adhes</div>
<div class="a" style="left:1874px;top:227px;width:13px;height:13px;border:1px solid #8a8a8a;background:linear-gradient(135deg,#dcdcdc,#ffffff)"></div>
<svg class="ic" style="left:1876px;top:229px" width="9" height="9" viewBox="0 0 9 9" ><path d="M1 4.5L3.5 7.5L8 1" fill="none" stroke="#2a3a78" stroke-width="1.6"/></svg>
<div class="a" style="left:1798px;top:243px;width:17px;height:17px;border:1px solid #606060;border-radius:3px;background:#f8f8f8"></div>
<div class="a" style="left:1801px;top:246px;width:12px;height:11px;background:#840000;border:1px solid #000"></div>
<div class="a" style="left:1818px;top:244px;font-size:12px;letter-spacing:-0.25px;white-space:nowrap">F.Paste</div>
<div class="a" style="left:1874px;top:245px;width:13px;height:13px;border:1px solid #8a8a8a;background:linear-gradient(135deg,#dcdcdc,#ffffff)"></div>
<svg class="ic" style="left:1876px;top:247px" width="9" height="9" viewBox="0 0 9 9" ><path d="M1 4.5L3.5 7.5L8 1" fill="none" stroke="#2a3a78" stroke-width="1.6"/></svg>
<div class="a" style="left:1798px;top:261px;width:17px;height:17px;border:1px solid #606060;border-radius:3px;background:#f8f8f8"></div>
<div class="a" style="left:1801px;top:264px;width:12px;height:11px;background:#00ffff;border:1px solid #000"></div>
<div class="a" style="left:1818px;top:262px;font-size:12px;letter-spacing:-0.25px;white-space:nowrap">B.Paste</div>
<div class="a" style="left:1874px;top:263px;width:13px;height:13px;border:1px solid #8a8a8a;background:linear-gradient(135deg,#dcdcdc,#ffffff)"></div>
<svg class="ic" style="left:1876px;top:265px" width="9" height="9" viewBox="0 0 9 9" ><path d="M1 4.5L3.5 7.5L8 1" fill="none" stroke="#2a3a78" stroke-width="1.6"/></svg>
<div class="a" style="left:1798px;top:279px;width:17px;height:17px;border:1px solid #606060;border-radius:3px;background:#f8f8f8"></div>
<div class="a" style="left:1801px;top:282px;width:12px;height:11px;background:#008484;border:1px solid #000"></div>
<div class="a" style="left:1818px;top:280px;font-size:12px;letter-spacing:-0.25px;white-space:nowrap">F.SilkS</div>
<div class="a" style="left:1874px;top:281px;width:13px;height:13px;border:1px solid #8a8a8a;background:linear-gradient(135deg,#dcdcdc,#ffffff)"></div>
<svg class="ic" style="left:1876px;top:283px" width="9" height="9" viewBox="0 0 9 9" ><path d="M1 4.5L3.5 7.5L8 1" fill="none" stroke="#2a3a78" stroke-width="1.6"/></svg>
<div class="a" style="left:1798px;top:297px;width:17px;height:17px;border:1px solid #606060;border-radius:3px;background:#f8f8f8"></div>
<div class="a" style="left:1801px;top:300px;width:12px;height:11px;background:#840084;border:1px solid #000"></div>
<div class="a" style="left:1818px;top:298px;font-size:12px;letter-spacing:-0.25px;white-space:nowrap">B.SilkS</div>
<div class="a" style="left:1874px;top:299px;width:13px;height:13px;border:1px solid #8a8a8a;background:linear-gradient(135deg,#dcdcdc,#ffffff)"></div>
<svg class="ic" style="left:1876px;top:301px" width="9" height="9" viewBox="0 0 9 9" ><path d="M1 4.5L3.5 7.5L8 1" fill="none" stroke="#2a3a78" stroke-width="1.6"/></svg>
<div class="a" style="left:1798px;top:315px;width:17px;height:17px;border:1px solid #606060;border-radius:3px;background:#f8f8f8"></div>
<div class="a" style="left:1801px;top:318px;width:12px;height:11px;background:#840084;border:1px solid #000"></div>
<div class="a" style="left:1818px;top:316px;font-size:12px;letter-spacing:-0.25px;white-space:nowrap">F.Mask</div>
<div class="a" style="left:1874px;top:317px;width:13px;height:13px;border:1px solid #8a8a8a;background:linear-gradient(135deg,#dcdcdc,#ffffff)"></div>
<svg class="ic" style="left:1876px;top:319px" width="9" height="9" viewBox="0 0 9 9" ><path d="M1 4.5L3.5 7.5L8 1" fill="none" stroke="#2a3a78" stroke-width="1.6"/></svg>
<div class="a" style="left:1798px;top:333px;width:17px;height:17px;border:1px solid #606060;border-radius:3px;background:#f8f8f8"></div>
<div class="a" style="left:1801px;top:336px;width:12px;height:11px;background:#848400;border:1px solid #000"></div>
<div class="a" style="left:1818px;top:334px;font-size:12px;letter-spacing:-0.25px;white-space:nowrap">B.Mask</div>
<div class="a" style="left:1874px;top:335px;width:13px;height:13px;border:1px solid #8a8a8a;background:linear-gradient(135deg,#dcdcdc,#ffffff)"></div>
<svg class="ic" style="left:1876px;top:337px" width="9" height="9" viewBox="0 0 9 9" ><path d="M1 4.5L3.5 7.5L8 1" fill="none" stroke="#2a3a78" stroke-width="1.6"/></svg>
<div class="a" style="left:1798px;top:351px;width:17px;height:17px;border:1px solid #606060;border-radius:3px;background:#f8f8f8"></div>
<div class="a" style="left:1801px;top:354px;width:12px;height:11px;background:#c2c2c2;border:1px solid #000"></div>
<div class="a" style="left:1818px;top:352px;font-size:12px;letter-spacing:-0.25px;white-space:nowrap">Dwgs.User</div>
<div class="a" style="left:1874px;top:353px;width:13px;height:13px;border:1px solid #8a8a8a;background:linear-gradient(135deg,#dcdcdc,#ffffff)"></div>
<svg class="ic" style="left:1876px;top:355px" width="9" height="9" viewBox="0 0 9 9" ><path d="M1 4.5L3.5 7.5L8 1" fill="none" stroke="#2a3a78" stroke-width="1.6"/></svg>
<div class="a" style="left:1798px;top:369px;width:17px;height:17px;border:1px solid #606060;border-radius:3px;background:#f8f8f8"></div>
<div class="a" style="left:1801px;top:372px;width:12px;height:11px;background:#000084;border:1px solid #000"></div>
<div class="a" style="left:1818px;top:370px;font-size:12px;letter-spacing:-0.25px;white-space:nowrap">Cmts.User</div>
<div class="a" style="left:1874px;top:371px;width:13px;height:13px;border:1px solid #8a8a8a;background:linear-gradient(135deg,#dcdcdc,#ffffff)"></div>
<svg class="ic" style="left:1876px;top:373px" width="9" height="9" viewBox="0 0 9 9" ><path d="M1 4.5L3.5 7.5L8 1" fill="none" stroke="#2a3a78" stroke-width="1.6"/></svg>
<div class="a" style="left:1798px;top:387px;width:17px;height:17px;border:1px solid #606060;border-radius:3px;background:#f8f8f8"></div>
<div class="a" style="left:1801px;top:390px;width:12px;height:11px;background:#008400;border:1px solid #000"></div>
<div class="a" style="left:1818px;top:388px;font-size:12px;letter-spacing:-0.25px;white-space:nowrap">Eco1.User</div>
<div class="a" style="left:1874px;top:389px;width:13px;height:13px;border:1px solid #8a8a8a;background:linear-gradient(135deg,#dcdcdc,#ffffff)"></div>
<svg class="ic" style="left:1876px;top:391px" width="9" height="9" viewBox="0 0 9 9" ><path d="M1 4.5L3.5 7.5L8 1" fill="none" stroke="#2a3a78" stroke-width="1.6"/></svg>
<div class="a" style="left:1798px;top:405px;width:17px;height:17px;border:1px solid #606060;border-radius:3px;background:#f8f8f8"></div>
<div class="a" style="left:1801px;top:408px;width:12px;height:11px;background:#ffff00;border:1px solid #000"></div>
<div class="a" style="left:1818px;top:406px;font-size:12px;letter-spacing:-0.25px;white-space:nowrap">Eco2.User</div>
<div class="a" style="left:1874px;top:407px;width:13px;height:13px;border:1px solid #8a8a8a;background:linear-gradient(135deg,#dcdcdc,#ffffff)"></div>
<svg class="ic" style="left:1876px;top:409px" width="9" height="9" viewBox="0 0 9 9" ><path d="M1 4.5L3.5 7.5L8 1" fill="none" stroke="#2a3a78" stroke-width="1.6"/></svg>
<div class="a" style="left:1798px;top:423px;width:17px;height:17px;border:1px solid #606060;border-radius:3px;background:#f8f8f8"></div>
<div class="a" style="left:1801px;top:426px;width:12px;height:11px;background:#ffff00;border:1px solid #000"></div>
<div class="a" style="left:1818px;top:424px;font-size:12px;letter-spacing:-0.25px;white-space:nowrap">Edge.Cuts</div>
<div class="a" style="left:1874px;top:425px;width:13px;height:13px;border:1px solid #8a8a8a;background:linear-gradient(135deg,#dcdcdc,#ffffff)"></div>
<svg class="ic" style="left:1876px;top:427px" width="9" height="9" viewBox="0 0 9 9" ><path d="M1 4.5L3.5 7.5L8 1" fill="none" stroke="#2a3a78" stroke-width="1.6"/></svg>
<svg class="ic" style="left:1787px;top:189px" width="10" height="14" viewBox="0 0 10 14" ><path d="M1 1L9 7L1 13Z" fill="#2020ff"/></svg>
<div class="a" style="left:38px;top:118px;width:1697px;height:986px;background:#f0f0f0;border-top:1px solid #a8a8a8;border-left:1px solid #a8a8a8"></div>
<div class="a" style="left:39px;top:119px;width:1695px;height:985px;border:1px solid #6a6a6a;border-bottom-color:#8a8a8a"></div>
<div class="a" style="left:1716px;top:120px;width:17px;height:1px;background:#fff"></div>
<div id="vsb" class="a"></div>
<div class="a" style="left:1717px;top:214px;width:15px;height:856px;border:1px solid #a0a0a0;border-radius:2px;background:linear-gradient(90deg,#f0f0f0,#e4e4e4 50%,#d4d4d4)"></div>
<svg class="ic" style="left:1719px;top:125px" width="11" height="8" viewBox="0 0 11 8" ><path d="M1.5 6.5L5.5 2.5L9.5 6.5Z" fill="#202020"/></svg>
<svg class="ic" style="left:1719px;top:1074px" width="11" height="8" viewBox="0 0 11 8" ><path d="M1.5 1.5L5.5 5.5L9.5 1.5Z" fill="#202020"/></svg>
<svg class="ic" style="left:1720px;top:636px" width="9" height="9" viewBox="0 0 9 9" ><path d="M1 1.5H8M1 4.5H8M1 7.5H8" stroke="#505050"/></svg>
<div id="hsb" class="a"></div>
<div class="a" style="left:578px;top:1087px;width:1122px;height:15px;border:1px solid #a0a0a0;border-radius:2px;background:linear-gradient(#f0f0f0,#e4e4e4 50%,#d4d4d4)"></div>
<svg class="ic" style="left:44px;top:1089px" width="8" height="11" viewBox="0 0 8 11" ><path d="M6.5 1.5L2.5 5.5L6.5 9.5Z" fill="#202020"/></svg>
<svg class="ic" style="left:1703px;top:1089px" width="8" height="11" viewBox="0 0 8 11" ><path d="M1.5 1.5L5.5 5.5L1.5 9.5Z" fill="#202020"/></svg>
<svg class="ic" style="left:1133px;top:1090px" width="9" height="9" viewBox="0 0 9 9" ><path d="M1.5 1V8M4.5 1V8M7.5 1V8" stroke="#505050"/></svg>
<div class="a" style="left:1716px;top:1086px;width:17px;height:17px;background:#f0f0f0"></div>
<div id="msg" class="a"><div style="top:2px">Backup file:</div><div style="top:17px">Wrote board file: C:\Users\Pawel\Dropbox\Kicad project\Rotor_expander_1\_autosave-Rothor_expander_1.kicad_pcb</div></div>
<div id="status" class="a">
<span style="left:1233px;font-size:11px">Z 304800</span>
<span style="left:1299px;font-size:11px">X 236,220000&nbsp; Y -29,210000</span>
<span style="left:1471px;font-size:11px">dx 236,220000&nbsp; dy -29,210000&nbsp; d 238,019143</span>
<span style="left:1732px;font-size:12px">mm</span>
<span style="left:1786px;font-size:12px">Add zones</span>
<div class="a" style="left:1229px;top:2px;width:1px;height:18px;background:#d8d4d4"></div>
<div class="a" style="left:1294px;top:2px;width:1px;height:18px;background:#d8d4d4"></div>
<div class="a" style="left:1467px;top:2px;width:1px;height:18px;background:#d8d4d4"></div>
<div class="a" style="left:1727px;top:2px;width:1px;height:18px;background:#d8d4d4"></div>
<div class="a" style="left:1781px;top:2px;width:1px;height:18px;background:#d8d4d4"></div>
</div>
<svg class="a" style="left:40px;top:120px" width="1676" height="966" viewBox="40 120 1676 966" shape-rendering="crispEdges">
<rect x="40" y="121" width="1676" height="965" fill="#000"/>
<path d="M30 216.5H977.5V905.5H30" fill="none" stroke="#848484" stroke-width="1"/>
<path d="M30 249.5H944.5V871.5H30" fill="none" stroke="#c00000" stroke-width="1"/>
<path d="M42.5 865.5V255.5H938.5V865.5Z" fill="none" stroke="#c00000" stroke-width="1"/>
<path d="M217.5 249V255M217.5 865V871" stroke="#c00000"/>
<path d="M399.5 249V255M399.5 865V871" stroke="#c00000"/>
<path d="M580.5 249V255M580.5 865V871" stroke="#c00000"/>
<path d="M762.5 249V255M762.5 865V871" stroke="#c00000"/>
<path d="M938 456.5H944M40 456.5H42" stroke="#c00000"/>
<path d="M938 664.5H944M40 664.5H42" stroke="#c00000"/>
<rect x="40" y="354" width="1" height="2" fill="#c00000"/>
<rect x="40" y="560" width="1" height="2" fill="#c00000"/>
<rect x="40" y="767" width="1" height="2" fill="#c00000"/>
<text x="125" y="254.5" fill="#c00000" font-family="Liberation Mono" font-size="7">1</text>
<text x="125" y="870.5" fill="#c00000" font-family="Liberation Mono" font-size="7">1</text>
<text x="306" y="254.5" fill="#c00000" font-family="Liberation Mono" font-size="7">2</text>
<text x="306" y="870.5" fill="#c00000" font-family="Liberation Mono" font-size="7">2</text>
<text x="488" y="254.5" fill="#c00000" font-family="Liberation Mono" font-size="7">3</text>
<text x="488" y="870.5" fill="#c00000" font-family="Liberation Mono" font-size="7">3</text>
<text x="670" y="254.5" fill="#c00000" font-family="Liberation Mono" font-size="7">4</text>
<text x="670" y="870.5" fill="#c00000" font-family="Liberation Mono" font-size="7">4</text>
<text x="851" y="254.5" fill="#c00000" font-family="Liberation Mono" font-size="7">5</text>
<text x="851" y="870.5" fill="#c00000" font-family="Liberation Mono" font-size="7">5</text>
<text x="939" y="368" fill="#c00000" font-family="Liberation Mono" font-size="7">A</text>
<text x="939" y="576" fill="#c00000" font-family="Liberation Mono" font-size="7">B</text>
<text x="939" y="783" fill="#c00000" font-family="Liberation Mono" font-size="7">C</text>
<g fill="none" stroke="#c00000"><path d="M588.5 865V815.5H938M588.5 835.5H938M588.5 845.5H938M588.5 855.5H938M643.5 845.5V855M865.5 845.5V865"/></g>
<text x="593" y="823" fill="#c00000" font-family="Liberation Mono" font-size="8.5" font-weight="bold" textLength="130.3" lengthAdjust="spacingAndGlyphs">File: Rothor_expander_1.kicad_pcb</text>
<text x="593" y="833" fill="#c00000" font-family="Liberation Mono" font-size="8.5" font-weight="bold" textLength="39.5" lengthAdjust="spacingAndGlyphs">Sheet: 1/1</text>
<text x="593" y="843" fill="#c00000" font-family="Liberation Mono" font-size="8.5" font-weight="bold" textLength="106.7" lengthAdjust="spacingAndGlyphs">Title: Ro-thor controler V2</text>
<text x="593" y="853" fill="#c00000" font-family="Liberation Mono" font-size="8.5" font-weight="bold" textLength="31.6" lengthAdjust="spacingAndGlyphs">Size: A4</text>
<text x="663" y="853" fill="#c00000" font-family="Liberation Mono" font-size="8.5" font-weight="bold" textLength="67.2" lengthAdjust="spacingAndGlyphs">Date: 16 Jan 2014</text>
<text x="870" y="853" fill="#c00000" font-family="Liberation Mono" font-size="8.5" font-weight="bold" textLength="35.6" lengthAdjust="spacingAndGlyphs">Rev: 1.0a</text>
<text x="593" y="863" fill="#c00000" font-family="Liberation Mono" font-size="8.5" font-weight="bold" textLength="214.0" lengthAdjust="spacingAndGlyphs">KiCad E.D.A.&#160; pcbnew (2013-07-07 BZR 4022)-stable</text>
<text x="870" y="863" fill="#c00000" font-family="Liberation Mono" font-size="8.5" font-weight="bold" textLength="27.7" lengthAdjust="spacingAndGlyphs">Id: 1/1</text>
<rect x="73.5" y="281.5" width="761" height="441.5" fill="#a1a100" stroke="#ffff00" stroke-width="1"/>
<rect x="106.5" y="316.5" width="412" height="228" fill="#000" stroke="#ffff00" stroke-width="1"/>
<path d="M75 282.5H833.5V722.5H75" fill="none" stroke="#000" stroke-width="1" stroke-dasharray="1 2"/>
<path d="M76 282.5H833.5V722.5H76" fill="none" stroke="#c00000" stroke-width="1" stroke-dasharray="1 5"/>
<path d="M309 308.5H316M312.5 305V312" stroke="#a0a0c0"/>
<path d="M553 334V541L571 559H775L782 566" fill="none" stroke="#b80000" stroke-width="5.6" stroke-linejoin="round" stroke-linecap="round" shape-rendering="auto"/>
<path d="M553 334V541L571 559H775L782 566" fill="none" stroke="#a1a100" stroke-width="2.3999999999999995" stroke-linejoin="round" stroke-linecap="round" shape-rendering="auto"/>
<path d="M615 334V538L609 545" fill="none" stroke="#b80000" stroke-width="5.6" stroke-linejoin="round" stroke-linecap="round" shape-rendering="auto"/>
<path d="M615 334V538L609 545" fill="none" stroke="#a1a100" stroke-width="2.3999999999999995" stroke-linejoin="round" stroke-linecap="round" shape-rendering="auto"/>
<path d="M678 334V538L672 545" fill="none" stroke="#b80000" stroke-width="5.6" stroke-linejoin="round" stroke-linecap="round" shape-rendering="auto"/>
<path d="M678 334V538L672 545" fill="none" stroke="#a1a100" stroke-width="2.3999999999999995" stroke-linejoin="round" stroke-linecap="round" shape-rendering="auto"/>
<path d="M740 334V538L734 545" fill="none" stroke="#b80000" stroke-width="5.6" stroke-linejoin="round" stroke-linecap="round" shape-rendering="auto"/>
<path d="M740 334V538L734 545" fill="none" stroke="#a1a100" stroke-width="2.3999999999999995" stroke-linejoin="round" stroke-linecap="round" shape-rendering="auto"/>
<path d="M595 334V328L601 321.5H651L657 328L663 321.5H713L719 328L725 321.5H776L782 328V334" fill="none" stroke="#b80000" stroke-width="5.6" stroke-linejoin="round" stroke-linecap="round" shape-rendering="auto"/>
<path d="M595 334V328L601 321.5H651L657 328L663 321.5H713L719 328L725 321.5H776L782 328V334" fill="none" stroke="#a1a100" stroke-width="2.3999999999999995" stroke-linejoin="round" stroke-linecap="round" shape-rendering="auto"/>
<path d="M595 328V527" fill="none" stroke="#b80000" stroke-width="5.6" stroke-linejoin="round" stroke-linecap="round" shape-rendering="auto"/>
<path d="M595 328V527" fill="none" stroke="#a1a100" stroke-width="2.3999999999999995" stroke-linejoin="round" stroke-linecap="round" shape-rendering="auto"/>
<path d="M657 328V527" fill="none" stroke="#b80000" stroke-width="5.6" stroke-linejoin="round" stroke-linecap="round" shape-rendering="auto"/>
<path d="M657 328V527" fill="none" stroke="#a1a100" stroke-width="2.3999999999999995" stroke-linejoin="round" stroke-linecap="round" shape-rendering="auto"/>
<path d="M719 328V527" fill="none" stroke="#b80000" stroke-width="5.6" stroke-linejoin="round" stroke-linecap="round" shape-rendering="auto"/>
<path d="M719 328V527" fill="none" stroke="#a1a100" stroke-width="2.3999999999999995" stroke-linejoin="round" stroke-linecap="round" shape-rendering="auto"/>
<path d="M782 328V527" fill="none" stroke="#b80000" stroke-width="5.6" stroke-linejoin="round" stroke-linecap="round" shape-rendering="auto"/>
<path d="M782 328V527" fill="none" stroke="#a1a100" stroke-width="2.3999999999999995" stroke-linejoin="round" stroke-linecap="round" shape-rendering="auto"/>
<path d="M594 351L574 371" fill="none" stroke="#b80000" stroke-width="5.6" stroke-linejoin="round" stroke-linecap="round" shape-rendering="auto"/>
<path d="M594 351L574 371" fill="none" stroke="#a1a100" stroke-width="2.3999999999999995" stroke-linejoin="round" stroke-linecap="round" shape-rendering="auto"/>
<path d="M782 351L766 360V490L782 506" fill="none" stroke="#b80000" stroke-width="5.6" stroke-linejoin="round" stroke-linecap="round" shape-rendering="auto"/>
<path d="M782 351L766 360V490L782 506" fill="none" stroke="#a1a100" stroke-width="2.3999999999999995" stroke-linejoin="round" stroke-linecap="round" shape-rendering="auto"/>
<path d="M611 551V559" fill="none" stroke="#b80000" stroke-width="5.6" stroke-linejoin="round" stroke-linecap="round" shape-rendering="auto"/>
<path d="M611 551V559" fill="none" stroke="#a1a100" stroke-width="2.3999999999999995" stroke-linejoin="round" stroke-linecap="round" shape-rendering="auto"/>
<path d="M672 545V559" fill="none" stroke="#b80000" stroke-width="5.6" stroke-linejoin="round" stroke-linecap="round" shape-rendering="auto"/>
<path d="M672 545V559" fill="none" stroke="#a1a100" stroke-width="2.3999999999999995" stroke-linejoin="round" stroke-linecap="round" shape-rendering="auto"/>
<path d="M734 545V552L740 559" fill="none" stroke="#b80000" stroke-width="5.6" stroke-linejoin="round" stroke-linecap="round" shape-rendering="auto"/>
<path d="M734 545V552L740 559" fill="none" stroke="#a1a100" stroke-width="2.3999999999999995" stroke-linejoin="round" stroke-linecap="round" shape-rendering="auto"/>
<path d="M594 372H782" fill="none" stroke="#00c000" stroke-width="5.6" stroke-linejoin="round" stroke-linecap="round" shape-rendering="auto"/>
<path d="M594 372H782" fill="none" stroke="#a1a100" stroke-width="2.3999999999999995" stroke-linejoin="round" stroke-linecap="round" shape-rendering="auto"/>
<path d="M594 430H782" fill="none" stroke="#00c000" stroke-width="5.6" stroke-linejoin="round" stroke-linecap="round" shape-rendering="auto"/>
<path d="M594 430H782" fill="none" stroke="#a1a100" stroke-width="2.3999999999999995" stroke-linejoin="round" stroke-linecap="round" shape-rendering="auto"/>
<path d="M594 488H782" fill="none" stroke="#00c000" stroke-width="5.6" stroke-linejoin="round" stroke-linecap="round" shape-rendering="auto"/>
<path d="M594 488H782" fill="none" stroke="#a1a100" stroke-width="2.3999999999999995" stroke-linejoin="round" stroke-linecap="round" shape-rendering="auto"/>
<path d="M574 372V539L602 567H732L740 574H787" fill="none" stroke="#00c000" stroke-width="5.6" stroke-linejoin="round" stroke-linecap="round" shape-rendering="auto"/>
<path d="M574 372V539L602 567H732L740 574H787" fill="none" stroke="#a1a100" stroke-width="2.3999999999999995" stroke-linejoin="round" stroke-linecap="round" shape-rendering="auto"/>
<rect x="553.0" y="321.0" width="42" height="42" fill="none" stroke="#a8a8a8" stroke-width="1"/>
<circle cx="573.5" cy="341.5" r="14" fill="none" stroke="#a8a8a8" stroke-width="0.9" shape-rendering="auto"/>
<ellipse cx="552.5" cy="333.5" rx="6.2" ry="3.7" fill="#8c8b00" stroke="#000" stroke-width="1.1" shape-rendering="auto"/>
<ellipse cx="552.5" cy="350.5" rx="6.2" ry="3.7" fill="#8c8b00" stroke="#000" stroke-width="1.1" shape-rendering="auto"/>
<ellipse cx="594.5" cy="333.5" rx="6.2" ry="3.7" fill="#8c8b00" stroke="#000" stroke-width="1.1" shape-rendering="auto"/>
<ellipse cx="594.5" cy="350.5" rx="6.2" ry="3.7" fill="#8c8b00" stroke="#000" stroke-width="1.1" shape-rendering="auto"/>
<path d="M570.5 342.0H577.5M574.0 338.5V345.5" stroke="#9090ff" stroke-width="1"/>
<text x="573.5" y="340.5" fill="#e8e8e8" font-family="Liberation Sans" font-size="6" text-anchor="middle">S301</text>
<text x="573.5" y="348.5" fill="#e8e8e8" font-family="Liberation Sans" font-size="7" text-anchor="middle">1</text>
<rect x="553.0" y="379.5" width="42" height="42" fill="none" stroke="#a8a8a8" stroke-width="1"/>
<circle cx="573.5" cy="400" r="14" fill="none" stroke="#a8a8a8" stroke-width="0.9" shape-rendering="auto"/>
<ellipse cx="552.5" cy="392" rx="6.2" ry="3.7" fill="#8c8b00" stroke="#000" stroke-width="1.1" shape-rendering="auto"/>
<ellipse cx="552.5" cy="409" rx="6.2" ry="3.7" fill="#8c8b00" stroke="#000" stroke-width="1.1" shape-rendering="auto"/>
<ellipse cx="594.5" cy="392" rx="6.2" ry="3.7" fill="#8c8b00" stroke="#000" stroke-width="1.1" shape-rendering="auto"/>
<ellipse cx="594.5" cy="409" rx="6.2" ry="3.7" fill="#8c8b00" stroke="#000" stroke-width="1.1" shape-rendering="auto"/>
<path d="M570.5 400.5H577.5M574.0 397V404" stroke="#9090ff" stroke-width="1"/>
<text x="573.5" y="399" fill="#e8e8e8" font-family="Liberation Sans" font-size="6" text-anchor="middle">S302</text>
<text x="573.5" y="407" fill="#e8e8e8" font-family="Liberation Sans" font-size="7" text-anchor="middle">5</text>
<rect x="553.0" y="438.0" width="42" height="42" fill="none" stroke="#a8a8a8" stroke-width="1"/>
<circle cx="573.5" cy="458.5" r="14" fill="none" stroke="#a8a8a8" stroke-width="0.9" shape-rendering="auto"/>
<ellipse cx="552.5" cy="450.5" rx="6.2" ry="3.7" fill="#8c8b00" stroke="#000" stroke-width="1.1" shape-rendering="auto"/>
<ellipse cx="552.5" cy="467.5" rx="6.2" ry="3.7" fill="#8c8b00" stroke="#000" stroke-width="1.1" shape-rendering="auto"/>
<ellipse cx="594.5" cy="450.5" rx="6.2" ry="3.7" fill="#8c8b00" stroke="#000" stroke-width="1.1" shape-rendering="auto"/>
<ellipse cx="594.5" cy="467.5" rx="6.2" ry="3.7" fill="#8c8b00" stroke="#000" stroke-width="1.1" shape-rendering="auto"/>
<path d="M570.5 459.0H577.5M574.0 455.5V462.5" stroke="#9090ff" stroke-width="1"/>
<text x="573.5" y="457.5" fill="#e8e8e8" font-family="Liberation Sans" font-size="6" text-anchor="middle">S303</text>
<text x="573.5" y="465.5" fill="#e8e8e8" font-family="Liberation Sans" font-size="7" text-anchor="middle">*</text>
<rect x="615.5" y="321.0" width="42" height="42" fill="none" stroke="#a8a8a8" stroke-width="1"/>
<circle cx="636" cy="341.5" r="14" fill="none" stroke="#a8a8a8" stroke-width="0.9" shape-rendering="auto"/>
<ellipse cx="615" cy="333.5" rx="6.2" ry="3.7" fill="#8c8b00" stroke="#000" stroke-width="1.1" shape-rendering="auto"/>
<ellipse cx="615" cy="350.5" rx="6.2" ry="3.7" fill="#8c8b00" stroke="#000" stroke-width="1.1" shape-rendering="auto"/>
<ellipse cx="657" cy="333.5" rx="6.2" ry="3.7" fill="#8c8b00" stroke="#000" stroke-width="1.1" shape-rendering="auto"/>
<ellipse cx="657" cy="350.5" rx="6.2" ry="3.7" fill="#8c8b00" stroke="#000" stroke-width="1.1" shape-rendering="auto"/>
<path d="M633 342.0H640M636.5 338.5V345.5" stroke="#9090ff" stroke-width="1"/>
<text x="636" y="340.5" fill="#e8e8e8" font-family="Liberation Sans" font-size="6" text-anchor="middle">S307</text>
<text x="636" y="348.5" fill="#e8e8e8" font-family="Liberation Sans" font-size="7" text-anchor="middle">2</text>
<rect x="615.5" y="379.5" width="42" height="42" fill="none" stroke="#a8a8a8" stroke-width="1"/>
<circle cx="636" cy="400" r="14" fill="none" stroke="#a8a8a8" stroke-width="0.9" shape-rendering="auto"/>
<ellipse cx="615" cy="392" rx="6.2" ry="3.7" fill="#8c8b00" stroke="#000" stroke-width="1.1" shape-rendering="auto"/>
<ellipse cx="615" cy="409" rx="6.2" ry="3.7" fill="#8c8b00" stroke="#000" stroke-width="1.1" shape-rendering="auto"/>
<ellipse cx="657" cy="392" rx="6.2" ry="3.7" fill="#8c8b00" stroke="#000" stroke-width="1.1" shape-rendering="auto"/>
<ellipse cx="657" cy="409" rx="6.2" ry="3.7" fill="#8c8b00" stroke="#000" stroke-width="1.1" shape-rendering="auto"/>
<path d="M633 400.5H640M636.5 397V404" stroke="#9090ff" stroke-width="1"/>
<text x="636" y="399" fill="#e8e8e8" font-family="Liberation Sans" font-size="6" text-anchor="middle">S308</text>
<text x="636" y="407" fill="#e8e8e8" font-family="Liberation Sans" font-size="7" text-anchor="middle">6</text>
<rect x="615.5" y="438.0" width="42" height="42" fill="none" stroke="#a8a8a8" stroke-width="1"/>
<circle cx="636" cy="458.5" r="14" fill="none" stroke="#a8a8a8" stroke-width="0.9" shape-rendering="auto"/>
<ellipse cx="615" cy="450.5" rx="6.2" ry="3.7" fill="#8c8b00" stroke="#000" stroke-width="1.1" shape-rendering="auto"/>
<ellipse cx="615" cy="467.5" rx="6.2" ry="3.7" fill="#8c8b00" stroke="#000" stroke-width="1.1" shape-rendering="auto"/>
<ellipse cx="657" cy="450.5" rx="6.2" ry="3.7" fill="#8c8b00" stroke="#000" stroke-width="1.1" shape-rendering="auto"/>
<ellipse cx="657" cy="467.5" rx="6.2" ry="3.7" fill="#8c8b00" stroke="#000" stroke-width="1.1" shape-rendering="auto"/>
<path d="M633 459.0H640M636.5 455.5V462.5" stroke="#9090ff" stroke-width="1"/>
<text x="636" y="457.5" fill="#e8e8e8" font-family="Liberation Sans" font-size="6" text-anchor="middle">S309</text>
<text x="636" y="465.5" fill="#e8e8e8" font-family="Liberation Sans" font-size="7" text-anchor="middle">9</text>
<rect x="678.0" y="321.0" width="42" height="42" fill="none" stroke="#a8a8a8" stroke-width="1"/>
<circle cx="698.5" cy="341.5" r="14" fill="none" stroke="#a8a8a8" stroke-width="0.9" shape-rendering="auto"/>
<ellipse cx="677.5" cy="333.5" rx="6.2" ry="3.7" fill="#8c8b00" stroke="#000" stroke-width="1.1" shape-rendering="auto"/>
<ellipse cx="677.5" cy="350.5" rx="6.2" ry="3.7" fill="#8c8b00" stroke="#000" stroke-width="1.1" shape-rendering="auto"/>
<ellipse cx="719.5" cy="333.5" rx="6.2" ry="3.7" fill="#8c8b00" stroke="#000" stroke-width="1.1" shape-rendering="auto"/>
<ellipse cx="719.5" cy="350.5" rx="6.2" ry="3.7" fill="#8c8b00" stroke="#000" stroke-width="1.1" shape-rendering="auto"/>
<path d="M695.5 342.0H702.5M699.0 338.5V345.5" stroke="#9090ff" stroke-width="1"/>
<text x="698.5" y="340.5" fill="#e8e8e8" font-family="Liberation Sans" font-size="6" text-anchor="middle">S311</text>
<text x="698.5" y="348.5" fill="#e8e8e8" font-family="Liberation Sans" font-size="7" text-anchor="middle">3</text>
<rect x="678.0" y="379.5" width="42" height="42" fill="none" stroke="#a8a8a8" stroke-width="1"/>
<circle cx="698.5" cy="400" r="14" fill="none" stroke="#a8a8a8" stroke-width="0.9" shape-rendering="auto"/>
<ellipse cx="677.5" cy="392" rx="6.2" ry="3.7" fill="#8c8b00" stroke="#000" stroke-width="1.1" shape-rendering="auto"/>
<ellipse cx="677.5" cy="409" rx="6.2" ry="3.7" fill="#8c8b00" stroke="#000" stroke-width="1.1" shape-rendering="auto"/>
<ellipse cx="719.5" cy="392" rx="6.2" ry="3.7" fill="#8c8b00" stroke="#000" stroke-width="1.1" shape-rendering="auto"/>
<ellipse cx="719.5" cy="409" rx="6.2" ry="3.7" fill="#8c8b00" stroke="#000" stroke-width="1.1" shape-rendering="auto"/>
<path d="M695.5 400.5H702.5M699.0 397V404" stroke="#9090ff" stroke-width="1"/>
<text x="698.5" y="399" fill="#e8e8e8" font-family="Liberation Sans" font-size="6" text-anchor="middle">S312</text>
<text x="698.5" y="407" fill="#e8e8e8" font-family="Liberation Sans" font-size="7" text-anchor="middle">7</text>
<rect x="678.0" y="438.0" width="42" height="42" fill="none" stroke="#a8a8a8" stroke-width="1"/>
<circle cx="698.5" cy="458.5" r="14" fill="none" stroke="#a8a8a8" stroke-width="0.9" shape-rendering="auto"/>
<ellipse cx="677.5" cy="450.5" rx="6.2" ry="3.7" fill="#8c8b00" stroke="#000" stroke-width="1.1" shape-rendering="auto"/>
<ellipse cx="677.5" cy="467.5" rx="6.2" ry="3.7" fill="#8c8b00" stroke="#000" stroke-width="1.1" shape-rendering="auto"/>
<ellipse cx="719.5" cy="450.5" rx="6.2" ry="3.7" fill="#8c8b00" stroke="#000" stroke-width="1.1" shape-rendering="auto"/>
<ellipse cx="719.5" cy="467.5" rx="6.2" ry="3.7" fill="#8c8b00" stroke="#000" stroke-width="1.1" shape-rendering="auto"/>
<path d="M695.5 459.0H702.5M699.0 455.5V462.5" stroke="#9090ff" stroke-width="1"/>
<text x="698.5" y="457.5" fill="#e8e8e8" font-family="Liberation Sans" font-size="6" text-anchor="middle">S313</text>
<text x="698.5" y="465.5" fill="#e8e8e8" font-family="Liberation Sans" font-size="7" text-anchor="middle">0</text>
<rect x="740.5" y="321.0" width="42" height="42" fill="none" stroke="#a8a8a8" stroke-width="1"/>
<circle cx="761" cy="341.5" r="14" fill="none" stroke="#a8a8a8" stroke-width="0.9" shape-rendering="auto"/>
<ellipse cx="740" cy="333.5" rx="6.2" ry="3.7" fill="#8c8b00" stroke="#000" stroke-width="1.1" shape-rendering="auto"/>
<ellipse cx="740" cy="350.5" rx="6.2" ry="3.7" fill="#8c8b00" stroke="#000" stroke-width="1.1" shape-rendering="auto"/>
<ellipse cx="782" cy="333.5" rx="6.2" ry="3.7" fill="#8c8b00" stroke="#000" stroke-width="1.1" shape-rendering="auto"/>
<ellipse cx="782" cy="350.5" rx="6.2" ry="3.7" fill="#8c8b00" stroke="#000" stroke-width="1.1" shape-rendering="auto"/>
<path d="M758 342.0H765M761.5 338.5V345.5" stroke="#9090ff" stroke-width="1"/>
<text x="761" y="340.5" fill="#e8e8e8" font-family="Liberation Sans" font-size="6" text-anchor="middle">S315</text>
<text x="761" y="348.5" fill="#e8e8e8" font-family="Liberation Sans" font-size="7" text-anchor="middle">4</text>
<rect x="740.5" y="379.5" width="42" height="42" fill="none" stroke="#a8a8a8" stroke-width="1"/>
<circle cx="761" cy="400" r="14" fill="none" stroke="#a8a8a8" stroke-width="0.9" shape-rendering="auto"/>
<ellipse cx="740" cy="392" rx="6.2" ry="3.7" fill="#8c8b00" stroke="#000" stroke-width="1.1" shape-rendering="auto"/>
<ellipse cx="740" cy="409" rx="6.2" ry="3.7" fill="#8c8b00" stroke="#000" stroke-width="1.1" shape-rendering="auto"/>
<ellipse cx="782" cy="392" rx="6.2" ry="3.7" fill="#8c8b00" stroke="#000" stroke-width="1.1" shape-rendering="auto"/>
<ellipse cx="782" cy="409" rx="6.2" ry="3.7" fill="#8c8b00" stroke="#000" stroke-width="1.1" shape-rendering="auto"/>
<path d="M758 400.5H765M761.5 397V404" stroke="#9090ff" stroke-width="1"/>
<text x="761" y="399" fill="#e8e8e8" font-family="Liberation Sans" font-size="6" text-anchor="middle">S316</text>
<text x="761" y="407" fill="#e8e8e8" font-family="Liberation Sans" font-size="7" text-anchor="middle">8</text>
<rect x="740.5" y="438.0" width="42" height="42" fill="none" stroke="#a8a8a8" stroke-width="1"/>
<circle cx="761" cy="458.5" r="14" fill="none" stroke="#a8a8a8" stroke-width="0.9" shape-rendering="auto"/>
<ellipse cx="740" cy="450.5" rx="6.2" ry="3.7" fill="#8c8b00" stroke="#000" stroke-width="1.1" shape-rendering="auto"/>
<ellipse cx="740" cy="467.5" rx="6.2" ry="3.7" fill="#8c8b00" stroke="#000" stroke-width="1.1" shape-rendering="auto"/>
<ellipse cx="782" cy="450.5" rx="6.2" ry="3.7" fill="#8c8b00" stroke="#000" stroke-width="1.1" shape-rendering="auto"/>
<ellipse cx="782" cy="467.5" rx="6.2" ry="3.7" fill="#8c8b00" stroke="#000" stroke-width="1.1" shape-rendering="auto"/>
<path d="M758 459.0H765M761.5 455.5V462.5" stroke="#9090ff" stroke-width="1"/>
<text x="761" y="457.5" fill="#e8e8e8" font-family="Liberation Sans" font-size="6" text-anchor="middle">S317</text>
<text x="761" y="465.5" fill="#e8e8e8" font-family="Liberation Sans" font-size="7" text-anchor="middle">#</text>
<circle cx="574" cy="371.5" r="5" fill="#000" shape-rendering="auto"/><circle cx="574" cy="371.5" r="3.3" fill="none" stroke="#f0f0f0" stroke-width="1.4" shape-rendering="auto"/><circle cx="574" cy="371.5" r="1.8" fill="#000" shape-rendering="auto"/>
<circle cx="594" cy="371.5" r="5" fill="#000" shape-rendering="auto"/><circle cx="594" cy="371.5" r="3.3" fill="none" stroke="#f0f0f0" stroke-width="1.4" shape-rendering="auto"/><circle cx="594" cy="371.5" r="1.8" fill="#000" shape-rendering="auto"/>
<circle cx="657" cy="371.5" r="5" fill="#000" shape-rendering="auto"/><circle cx="657" cy="371.5" r="3.3" fill="none" stroke="#f0f0f0" stroke-width="1.4" shape-rendering="auto"/><circle cx="657" cy="371.5" r="1.8" fill="#c00000" shape-rendering="auto"/>
<circle cx="719" cy="371.5" r="5" fill="#000" shape-rendering="auto"/><circle cx="719" cy="371.5" r="3.3" fill="none" stroke="#f0f0f0" stroke-width="1.4" shape-rendering="auto"/><circle cx="719" cy="371.5" r="1.8" fill="#c00000" shape-rendering="auto"/>
<circle cx="782" cy="371.5" r="5" fill="#000" shape-rendering="auto"/><circle cx="782" cy="371.5" r="3.3" fill="none" stroke="#f0f0f0" stroke-width="1.4" shape-rendering="auto"/><circle cx="782" cy="371.5" r="1.8" fill="#000" shape-rendering="auto"/>
<circle cx="594" cy="430" r="5" fill="#000" shape-rendering="auto"/><circle cx="594" cy="430" r="3.3" fill="none" stroke="#f0f0f0" stroke-width="1.4" shape-rendering="auto"/><circle cx="594" cy="430" r="1.8" fill="#c00000" shape-rendering="auto"/>
<circle cx="657" cy="430" r="5" fill="#000" shape-rendering="auto"/><circle cx="657" cy="430" r="3.3" fill="none" stroke="#f0f0f0" stroke-width="1.4" shape-rendering="auto"/><circle cx="657" cy="430" r="1.8" fill="#c00000" shape-rendering="auto"/>
<circle cx="719" cy="430" r="5" fill="#000" shape-rendering="auto"/><circle cx="719" cy="430" r="3.3" fill="none" stroke="#f0f0f0" stroke-width="1.4" shape-rendering="auto"/><circle cx="719" cy="430" r="1.8" fill="#c00000" shape-rendering="auto"/>
<circle cx="782" cy="430" r="5" fill="#000" shape-rendering="auto"/><circle cx="782" cy="430" r="3.3" fill="none" stroke="#f0f0f0" stroke-width="1.4" shape-rendering="auto"/><circle cx="782" cy="430" r="1.8" fill="#000" shape-rendering="auto"/>
<circle cx="594" cy="488" r="5" fill="#000" shape-rendering="auto"/><circle cx="594" cy="488" r="3.3" fill="none" stroke="#f0f0f0" stroke-width="1.4" shape-rendering="auto"/><circle cx="594" cy="488" r="1.8" fill="#000" shape-rendering="auto"/>
<circle cx="657" cy="488" r="5" fill="#000" shape-rendering="auto"/><circle cx="657" cy="488" r="3.3" fill="none" stroke="#f0f0f0" stroke-width="1.4" shape-rendering="auto"/><circle cx="657" cy="488" r="1.8" fill="#c00000" shape-rendering="auto"/>
<circle cx="719" cy="488" r="5" fill="#000" shape-rendering="auto"/><circle cx="719" cy="488" r="3.3" fill="none" stroke="#f0f0f0" stroke-width="1.4" shape-rendering="auto"/><circle cx="719" cy="488" r="1.8" fill="#c00000" shape-rendering="auto"/>
<circle cx="782" cy="488" r="5" fill="#000" shape-rendering="auto"/><circle cx="782" cy="488" r="3.3" fill="none" stroke="#f0f0f0" stroke-width="1.4" shape-rendering="auto"/><circle cx="782" cy="488" r="1.8" fill="#000" shape-rendering="auto"/>
<circle cx="771" cy="566" r="5" fill="#000" shape-rendering="auto"/><circle cx="771" cy="566" r="3.3" fill="none" stroke="#f0f0f0" stroke-width="1.4" shape-rendering="auto"/><circle cx="771" cy="566" r="1.8" fill="#000" shape-rendering="auto"/>
<rect x="123.5" y="571.0" width="42" height="42" fill="none" stroke="#a8a8a8" stroke-width="1"/>
<circle cx="144" cy="591.5" r="14" fill="none" stroke="#a8a8a8" stroke-width="0.9" shape-rendering="auto"/>
<ellipse cx="123" cy="583.0" rx="6.2" ry="3.7" fill="#8c8b00" stroke="#000" stroke-width="1.1" shape-rendering="auto"/>
<ellipse cx="123" cy="599.5" rx="6.2" ry="3.7" fill="#8c8b00" stroke="#000" stroke-width="1.1" shape-rendering="auto"/>
<ellipse cx="165" cy="583.0" rx="6.2" ry="3.7" fill="#8c8b00" stroke="#000" stroke-width="1.1" shape-rendering="auto"/>
<ellipse cx="165" cy="599.5" rx="6.2" ry="3.7" fill="#8c8b00" stroke="#000" stroke-width="1.1" shape-rendering="auto"/>
<path d="M141 592.0H148M144.5 588.5V595.5" stroke="#9090ff" stroke-width="1"/>
<text x="144" y="590.5" fill="#e8e8e8" font-family="Liberation Sans" font-size="6" text-anchor="middle">S304</text>
<rect x="223.5" y="571.0" width="42" height="42" fill="none" stroke="#a8a8a8" stroke-width="1"/>
<circle cx="244" cy="591.5" r="14" fill="none" stroke="#a8a8a8" stroke-width="0.9" shape-rendering="auto"/>
<ellipse cx="223" cy="583.0" rx="6.2" ry="3.7" fill="#8c8b00" stroke="#000" stroke-width="1.1" shape-rendering="auto"/>
<ellipse cx="223" cy="599.5" rx="6.2" ry="3.7" fill="#8c8b00" stroke="#000" stroke-width="1.1" shape-rendering="auto"/>
<ellipse cx="265" cy="583.0" rx="6.2" ry="3.7" fill="#8c8b00" stroke="#000" stroke-width="1.1" shape-rendering="auto"/>
<ellipse cx="265" cy="599.5" rx="6.2" ry="3.7" fill="#8c8b00" stroke="#000" stroke-width="1.1" shape-rendering="auto"/>
<path d="M241 592.0H248M244.5 588.5V595.5" stroke="#9090ff" stroke-width="1"/>
<text x="244" y="590.5" fill="#e8e8e8" font-family="Liberation Sans" font-size="6" text-anchor="middle">S310</text>
<rect x="332.5" y="571.0" width="42" height="42" fill="none" stroke="#a8a8a8" stroke-width="1"/>
<circle cx="353" cy="591.5" r="14" fill="none" stroke="#a8a8a8" stroke-width="0.9" shape-rendering="auto"/>
<ellipse cx="332" cy="583.0" rx="6.2" ry="3.7" fill="#8c8b00" stroke="#000" stroke-width="1.1" shape-rendering="auto"/>
<ellipse cx="332" cy="599.5" rx="6.2" ry="3.7" fill="#8c8b00" stroke="#000" stroke-width="1.1" shape-rendering="auto"/>
<ellipse cx="374" cy="583.0" rx="6.2" ry="3.7" fill="#8c8b00" stroke="#000" stroke-width="1.1" shape-rendering="auto"/>
<ellipse cx="374" cy="599.5" rx="6.2" ry="3.7" fill="#8c8b00" stroke="#000" stroke-width="1.1" shape-rendering="auto"/>
<path d="M350 592.0H357M353.5 588.5V595.5" stroke="#9090ff" stroke-width="1"/>
<text x="353" y="590.5" fill="#e8e8e8" font-family="Liberation Sans" font-size="6" text-anchor="middle">S314</text>
<rect x="441.0" y="571.0" width="42" height="42" fill="none" stroke="#a8a8a8" stroke-width="1"/>
<circle cx="461.5" cy="591.5" r="14" fill="none" stroke="#a8a8a8" stroke-width="0.9" shape-rendering="auto"/>
<ellipse cx="440.5" cy="583.0" rx="6.2" ry="3.7" fill="#8c8b00" stroke="#000" stroke-width="1.1" shape-rendering="auto"/>
<ellipse cx="440.5" cy="599.5" rx="6.2" ry="3.7" fill="#8c8b00" stroke="#000" stroke-width="1.1" shape-rendering="auto"/>
<ellipse cx="482.5" cy="583.0" rx="6.2" ry="3.7" fill="#8c8b00" stroke="#000" stroke-width="1.1" shape-rendering="auto"/>
<ellipse cx="482.5" cy="599.5" rx="6.2" ry="3.7" fill="#8c8b00" stroke="#000" stroke-width="1.1" shape-rendering="auto"/>
<path d="M458.5 592.0H465.5M462.0 588.5V595.5" stroke="#9090ff" stroke-width="1"/>
<text x="461.5" y="590.5" fill="#e8e8e8" font-family="Liberation Sans" font-size="6" text-anchor="middle">S318</text>
<rect x="99.0" y="645.0" width="42" height="42" fill="none" stroke="#a8a8a8" stroke-width="1"/>
<circle cx="119.5" cy="665.5" r="14" fill="none" stroke="#a8a8a8" stroke-width="0.9" shape-rendering="auto"/>
<ellipse cx="98.5" cy="657.0" rx="6.2" ry="3.7" fill="#8c8b00" stroke="#000" stroke-width="1.1" shape-rendering="auto"/>
<ellipse cx="98.5" cy="673.5" rx="6.2" ry="3.7" fill="#8c8b00" stroke="#000" stroke-width="1.1" shape-rendering="auto"/>
<ellipse cx="140.5" cy="657.0" rx="6.2" ry="3.7" fill="#8c8b00" stroke="#000" stroke-width="1.1" shape-rendering="auto"/>
<ellipse cx="140.5" cy="673.5" rx="6.2" ry="3.7" fill="#8c8b00" stroke="#000" stroke-width="1.1" shape-rendering="auto"/>
<path d="M116.5 666.0H123.5M120.0 662.5V669.5" stroke="#9090ff" stroke-width="1"/>
<text x="119.5" y="664.5" fill="#e8e8e8" font-family="Liberation Sans" font-size="6" text-anchor="middle">S323</text>
<text x="119.5" y="683.5" fill="#e8e8e8" font-family="Liberation Sans" font-size="6" text-anchor="middle">ON/OFF</text>
<rect x="282.5" y="661.0" width="42" height="42" fill="none" stroke="#a8a8a8" stroke-width="1"/>
<circle cx="303" cy="681.5" r="14" fill="none" stroke="#a8a8a8" stroke-width="0.9" shape-rendering="auto"/>
<ellipse cx="282" cy="673.0" rx="6.2" ry="3.7" fill="#8c8b00" stroke="#000" stroke-width="1.1" shape-rendering="auto"/>
<ellipse cx="282" cy="689.5" rx="6.2" ry="3.7" fill="#8c8b00" stroke="#000" stroke-width="1.1" shape-rendering="auto"/>
<ellipse cx="324" cy="673.0" rx="6.2" ry="3.7" fill="#8c8b00" stroke="#000" stroke-width="1.1" shape-rendering="auto"/>
<ellipse cx="324" cy="689.5" rx="6.2" ry="3.7" fill="#8c8b00" stroke="#000" stroke-width="1.1" shape-rendering="auto"/>
<path d="M300 682.0H307M303.5 678.5V685.5" stroke="#9090ff" stroke-width="1"/>
<text x="303" y="680.5" fill="#e8e8e8" font-family="Liberation Sans" font-size="6" text-anchor="middle">Mode</text>
<rect x="391.0" y="661.0" width="42" height="42" fill="none" stroke="#a8a8a8" stroke-width="1"/>
<circle cx="411.5" cy="681.5" r="14" fill="none" stroke="#a8a8a8" stroke-width="0.9" shape-rendering="auto"/>
<ellipse cx="390.5" cy="673.0" rx="6.2" ry="3.7" fill="#8c8b00" stroke="#000" stroke-width="1.1" shape-rendering="auto"/>
<ellipse cx="390.5" cy="689.5" rx="6.2" ry="3.7" fill="#8c8b00" stroke="#000" stroke-width="1.1" shape-rendering="auto"/>
<ellipse cx="432.5" cy="673.0" rx="6.2" ry="3.7" fill="#8c8b00" stroke="#000" stroke-width="1.1" shape-rendering="auto"/>
<ellipse cx="432.5" cy="689.5" rx="6.2" ry="3.7" fill="#8c8b00" stroke="#000" stroke-width="1.1" shape-rendering="auto"/>
<path d="M408.5 682.0H415.5M412.0 678.5V685.5" stroke="#9090ff" stroke-width="1"/>
<text x="411.5" y="680.5" fill="#e8e8e8" font-family="Liberation Sans" font-size="6" text-anchor="middle">S320</text>
<text x="411.5" y="699.5" fill="#e8e8e8" font-family="Liberation Sans" font-size="6" text-anchor="middle">Menu</text>
<rect x="657.5" y="545.5" width="42" height="42" fill="none" stroke="#a8a8a8" stroke-width="1"/>
<circle cx="678" cy="566" r="14" fill="none" stroke="#a8a8a8" stroke-width="0.9" shape-rendering="auto"/>
<ellipse cx="657" cy="557.5" rx="6.2" ry="3.7" fill="#8c8b00" stroke="#000" stroke-width="1.1" shape-rendering="auto"/>
<ellipse cx="657" cy="574" rx="6.2" ry="3.7" fill="#8c8b00" stroke="#000" stroke-width="1.1" shape-rendering="auto"/>
<ellipse cx="699" cy="557.5" rx="6.2" ry="3.7" fill="#8c8b00" stroke="#000" stroke-width="1.1" shape-rendering="auto"/>
<ellipse cx="699" cy="574" rx="6.2" ry="3.7" fill="#8c8b00" stroke="#000" stroke-width="1.1" shape-rendering="auto"/>
<path d="M675 566.5H682M678.5 563V570" stroke="#9090ff" stroke-width="1"/>
<text x="678" y="565" fill="#e8e8e8" font-family="Liberation Sans" font-size="6" text-anchor="middle">S314</text>
<text x="678" y="584" fill="#e8e8e8" font-family="Liberation Sans" font-size="6" text-anchor="middle">GO</text>
<rect x="599.0" y="602.0" width="42" height="42" fill="none" stroke="#a8a8a8" stroke-width="1"/>
<circle cx="619.5" cy="622.5" r="14" fill="none" stroke="#a8a8a8" stroke-width="0.9" shape-rendering="auto"/>
<ellipse cx="598.5" cy="614.0" rx="6.2" ry="3.7" fill="#8c8b00" stroke="#000" stroke-width="1.1" shape-rendering="auto"/>
<ellipse cx="598.5" cy="630.5" rx="6.2" ry="3.7" fill="#8c8b00" stroke="#000" stroke-width="1.1" shape-rendering="auto"/>
<ellipse cx="640.5" cy="614.0" rx="6.2" ry="3.7" fill="#8c8b00" stroke="#000" stroke-width="1.1" shape-rendering="auto"/>
<ellipse cx="640.5" cy="630.5" rx="6.2" ry="3.7" fill="#8c8b00" stroke="#000" stroke-width="1.1" shape-rendering="auto"/>
<path d="M616.5 623.0H623.5M620.0 619.5V626.5" stroke="#9090ff" stroke-width="1"/>
<text x="619.5" y="621.5" fill="#e8e8e8" font-family="Liberation Sans" font-size="6" text-anchor="middle">S306</text>
<text x="619.5" y="640.5" fill="#e8e8e8" font-family="Liberation Sans" font-size="6" text-anchor="middle">CCV</text>
<rect x="715.5" y="602.0" width="42" height="42" fill="none" stroke="#a8a8a8" stroke-width="1"/>
<circle cx="736" cy="622.5" r="14" fill="none" stroke="#a8a8a8" stroke-width="0.9" shape-rendering="auto"/>
<ellipse cx="715" cy="614.0" rx="6.2" ry="3.7" fill="#8c8b00" stroke="#000" stroke-width="1.1" shape-rendering="auto"/>
<ellipse cx="715" cy="630.5" rx="6.2" ry="3.7" fill="#8c8b00" stroke="#000" stroke-width="1.1" shape-rendering="auto"/>
<ellipse cx="757" cy="614.0" rx="6.2" ry="3.7" fill="#8c8b00" stroke="#000" stroke-width="1.1" shape-rendering="auto"/>
<ellipse cx="757" cy="630.5" rx="6.2" ry="3.7" fill="#8c8b00" stroke="#000" stroke-width="1.1" shape-rendering="auto"/>
<path d="M733 623.0H740M736.5 619.5V626.5" stroke="#9090ff" stroke-width="1"/>
<text x="736" y="621.5" fill="#e8e8e8" font-family="Liberation Sans" font-size="6" text-anchor="middle">S316</text>
<text x="736" y="640.5" fill="#e8e8e8" font-family="Liberation Sans" font-size="6" text-anchor="middle">CC</text>
<rect x="657.5" y="659.5" width="42" height="42" fill="none" stroke="#a8a8a8" stroke-width="1"/>
<circle cx="678" cy="680" r="14" fill="none" stroke="#a8a8a8" stroke-width="0.9" shape-rendering="auto"/>
<ellipse cx="657" cy="671.5" rx="6.2" ry="3.7" fill="#8c8b00" stroke="#000" stroke-width="1.1" shape-rendering="auto"/>
<ellipse cx="657" cy="688" rx="6.2" ry="3.7" fill="#8c8b00" stroke="#000" stroke-width="1.1" shape-rendering="auto"/>
<ellipse cx="699" cy="671.5" rx="6.2" ry="3.7" fill="#8c8b00" stroke="#000" stroke-width="1.1" shape-rendering="auto"/>
<ellipse cx="699" cy="688" rx="6.2" ry="3.7" fill="#8c8b00" stroke="#000" stroke-width="1.1" shape-rendering="auto"/>
<path d="M675 680.5H682M678.5 677V684" stroke="#9090ff" stroke-width="1"/>
<text x="678" y="679" fill="#e8e8e8" font-family="Liberation Sans" font-size="6" text-anchor="middle">S322</text>
<text x="678" y="698" fill="#e8e8e8" font-family="Liberation Sans" font-size="6" text-anchor="middle">Stop</text>
<rect x="777.5" y="541.5" width="30" height="58" fill="none" stroke="#a8a8a8"/>
<ellipse cx="787" cy="561" rx="5" ry="4" fill="#5a5a00" stroke="#000" stroke-width="1.5" shape-rendering="auto"/>
<ellipse cx="787" cy="570" rx="5" ry="4" fill="#5a5a00" stroke="#000" stroke-width="1.5" shape-rendering="auto"/>
<ellipse cx="787" cy="580" rx="5" ry="4" fill="#5a5a00" stroke="#000" stroke-width="1.5" shape-rendering="auto"/>
<ellipse cx="787" cy="589" rx="5" ry="4" fill="#5a5a00" stroke="#000" stroke-width="1.5" shape-rendering="auto"/>
<ellipse cx="797" cy="561" rx="5" ry="4" fill="#5a5a00" stroke="#000" stroke-width="1.5" shape-rendering="auto"/>
<ellipse cx="797" cy="570" rx="5" ry="4" fill="#5a5a00" stroke="#000" stroke-width="1.5" shape-rendering="auto"/>
<ellipse cx="797" cy="580" rx="5" ry="4" fill="#5a5a00" stroke="#000" stroke-width="1.5" shape-rendering="auto"/>
<ellipse cx="797" cy="589" rx="5" ry="4" fill="#5a5a00" stroke="#000" stroke-width="1.5" shape-rendering="auto"/>
<rect x="607" y="548" width="8" height="6" fill="none" stroke="#b0a0d0" stroke-width="1"/>
<rect x="674" y="543" width="8" height="6" fill="none" stroke="#b0a0d0" stroke-width="1"/>
<rect x="700" y="548" width="8" height="6" fill="none" stroke="#b0a0d0" stroke-width="1"/>
<rect x="734" y="548" width="8" height="6" fill="none" stroke="#b0a0d0" stroke-width="1"/>
<rect x="753" y="545" width="8" height="6" fill="none" stroke="#b0a0d0" stroke-width="1"/>
<rect x="763" y="543" width="8" height="6" fill="none" stroke="#b0a0d0" stroke-width="1"/>
<rect x="829.5" y="538.5" width="9" height="8" fill="none" stroke="#00d000"/>
<g stroke="#d8d8d8" fill="none" stroke-width="1"><path d="M48 281.5H73M48 317.5H73M56.5 281V317"/><path d="M518.5 270V317M553.5 270V317M518 275.5H553"/><path d="M834 281.5H857M834 723.5H857M848.5 281V723"/><path d="M73.5 723V743M834.5 723V743M73 736.5H834"/><path d="M411.5 591V674M486.5 591V674M411 666.5H486"/><path d="M744.5 599V631M811.5 599V631M744 624.5H811"/></g>
<text x="535" y="273" fill="#d8d8d8" font-family="Liberation Mono" font-size="8" text-anchor="middle">10,668 mm</text>
<text x="454" y="743" fill="#d8d8d8" font-family="Liberation Mono" font-size="8" text-anchor="middle">232,156 mm</text>
<text x="448" y="672.5" fill="#d8d8d8" font-family="Liberation Mono" font-size="8" text-anchor="middle">22,860 mm</text>
<text x="779" y="631" fill="#d8d8d8" font-family="Liberation Mono" font-size="8" text-anchor="middle">20,320 mm</text>
<text x="0" y="0" transform="translate(851 501) rotate(90)" fill="#d8d8d8" font-family="Liberation Mono" font-size="8" text-anchor="middle">134,620 mm</text>
<text x="0" y="0" transform="translate(49 300) rotate(90)" fill="#d8d8d8" font-family="Liberation Mono" font-size="8" text-anchor="middle">10,922 mm</text>
<path d="M1124.5 249.5H1299.5V571L1295.5 574.5H1257L1250.5 582.5H1140.5L1124.5 574.5Z" fill="none" stroke="#00b0b0"/>
<rect x="1124.5" y="249.5" width="41" height="39" fill="none" stroke="#00b0b0" stroke-width="1"/>
<rect x="1228.5" y="249.5" width="41" height="31" fill="none" stroke="#00b0b0" stroke-width="1"/>
<rect x="1203.5" y="453.5" width="26" height="17" fill="none" stroke="#00b0b0" stroke-width="1"/>
<circle cx="1142.5" cy="315.5" r="10" fill="none" stroke="#00b0b0" shape-rendering="auto"/>
<circle cx="1142.5" cy="340.5" r="10" fill="none" stroke="#00b0b0" shape-rendering="auto"/>
<circle cx="1215.5" cy="492.5" r="6" fill="none" stroke="#00b0b0" shape-rendering="auto"/>
<circle cx="1132" cy="294.5" r="5.0" fill="none" stroke="#9a9a00" stroke-width="3" shape-rendering="auto"/>
<circle cx="1290.5" cy="298.5" r="5.5" fill="none" stroke="#9a9a00" stroke-width="3" shape-rendering="auto"/>
<circle cx="1290.5" cy="544" r="6.0" fill="none" stroke="#9a9a00" stroke-width="3" shape-rendering="auto"/>
<circle cx="1132" cy="565.5" r="5.5" fill="none" stroke="#9a9a00" stroke-width="3" shape-rendering="auto"/>
<ellipse cx="1132" cy="340.6" rx="4.5" ry="4" fill="#9a9a00" shape-rendering="auto"/>
<circle cx="1132" cy="340.6" r="1" fill="#202000" shape-rendering="auto"/>
<ellipse cx="1132" cy="348.86" rx="4.5" ry="4" fill="#9a9a00" shape-rendering="auto"/>
<circle cx="1132" cy="348.86" r="1" fill="#202000" shape-rendering="auto"/>
<ellipse cx="1132" cy="357.12" rx="4.5" ry="4" fill="#9a9a00" shape-rendering="auto"/>
<circle cx="1132" cy="357.12" r="1" fill="#202000" shape-rendering="auto"/>
<ellipse cx="1132" cy="365.38" rx="4.5" ry="4" fill="#9a9a00" shape-rendering="auto"/>
<circle cx="1132" cy="365.38" r="1" fill="#202000" shape-rendering="auto"/>
<ellipse cx="1132" cy="373.64000000000004" rx="4.5" ry="4" fill="#9a9a00" shape-rendering="auto"/>
<circle cx="1132" cy="373.64000000000004" r="1" fill="#202000" shape-rendering="auto"/>
<ellipse cx="1132" cy="381.90000000000003" rx="4.5" ry="4" fill="#9a9a00" shape-rendering="auto"/>
<circle cx="1132" cy="381.90000000000003" r="1" fill="#202000" shape-rendering="auto"/>
<ellipse cx="1132" cy="390.16" rx="4.5" ry="4" fill="#9a9a00" shape-rendering="auto"/>
<circle cx="1132" cy="390.16" r="1" fill="#202000" shape-rendering="auto"/>
<ellipse cx="1132" cy="398.42" rx="4.5" ry="4" fill="#9a9a00" shape-rendering="auto"/>
<circle cx="1132" cy="398.42" r="1" fill="#202000" shape-rendering="auto"/>
<ellipse cx="1132" cy="415.7" rx="4.5" ry="4" fill="#9a9a00" shape-rendering="auto"/>
<circle cx="1132" cy="415.7" r="1" fill="#202000" shape-rendering="auto"/>
<ellipse cx="1132" cy="423.96" rx="4.5" ry="4" fill="#9a9a00" shape-rendering="auto"/>
<circle cx="1132" cy="423.96" r="1" fill="#202000" shape-rendering="auto"/>
<ellipse cx="1132" cy="432.21999999999997" rx="4.5" ry="4" fill="#9a9a00" shape-rendering="auto"/>
<circle cx="1132" cy="432.21999999999997" r="1" fill="#202000" shape-rendering="auto"/>
<ellipse cx="1132" cy="440.48" rx="4.5" ry="4" fill="#9a9a00" shape-rendering="auto"/>
<circle cx="1132" cy="440.48" r="1" fill="#202000" shape-rendering="auto"/>
<ellipse cx="1132" cy="448.74" rx="4.5" ry="4" fill="#9a9a00" shape-rendering="auto"/>
<circle cx="1132" cy="448.74" r="1" fill="#202000" shape-rendering="auto"/>
<ellipse cx="1132" cy="457.0" rx="4.5" ry="4" fill="#9a9a00" shape-rendering="auto"/>
<circle cx="1132" cy="457.0" r="1" fill="#202000" shape-rendering="auto"/>
<ellipse cx="1132" cy="465.26" rx="4.5" ry="4" fill="#9a9a00" shape-rendering="auto"/>
<circle cx="1132" cy="465.26" r="1" fill="#202000" shape-rendering="auto"/>
<ellipse cx="1132" cy="473.52" rx="4.5" ry="4" fill="#9a9a00" shape-rendering="auto"/>
<circle cx="1132" cy="473.52" r="1" fill="#202000" shape-rendering="auto"/>
<ellipse cx="1132" cy="491.0" rx="4.5" ry="4" fill="#9a9a00" shape-rendering="auto"/>
<circle cx="1132" cy="491.0" r="1" fill="#202000" shape-rendering="auto"/>
<ellipse cx="1132" cy="499.26" rx="4.5" ry="4" fill="#9a9a00" shape-rendering="auto"/>
<circle cx="1132" cy="499.26" r="1" fill="#202000" shape-rendering="auto"/>
<ellipse cx="1132" cy="507.52" rx="4.5" ry="4" fill="#9a9a00" shape-rendering="auto"/>
<circle cx="1132" cy="507.52" r="1" fill="#202000" shape-rendering="auto"/>
<ellipse cx="1132" cy="515.78" rx="4.5" ry="4" fill="#9a9a00" shape-rendering="auto"/>
<circle cx="1132" cy="515.78" r="1" fill="#202000" shape-rendering="auto"/>
<ellipse cx="1132" cy="524.04" rx="4.5" ry="4" fill="#9a9a00" shape-rendering="auto"/>
<circle cx="1132" cy="524.04" r="1" fill="#202000" shape-rendering="auto"/>
<ellipse cx="1132" cy="532.3" rx="4.5" ry="4" fill="#9a9a00" shape-rendering="auto"/>
<circle cx="1132" cy="532.3" r="1" fill="#202000" shape-rendering="auto"/>
<ellipse cx="1132" cy="540.56" rx="4.5" ry="4" fill="#9a9a00" shape-rendering="auto"/>
<circle cx="1132" cy="540.56" r="1" fill="#202000" shape-rendering="auto"/>
<ellipse cx="1132" cy="548.82" rx="4.5" ry="4" fill="#9a9a00" shape-rendering="auto"/>
<circle cx="1132" cy="548.82" r="1" fill="#202000" shape-rendering="auto"/>
<ellipse cx="1290.5" cy="311.0" rx="4.5" ry="4" fill="#9a9a00" shape-rendering="auto"/>
<circle cx="1290.5" cy="311.0" r="1" fill="#202000" shape-rendering="auto"/>
<ellipse cx="1290.5" cy="319.1" rx="4.5" ry="4" fill="#9a9a00" shape-rendering="auto"/>
<circle cx="1290.5" cy="319.1" r="1" fill="#202000" shape-rendering="auto"/>
<ellipse cx="1290.5" cy="327.2" rx="4.5" ry="4" fill="#9a9a00" shape-rendering="auto"/>
<circle cx="1290.5" cy="327.2" r="1" fill="#202000" shape-rendering="auto"/>
<ellipse cx="1290.5" cy="335.3" rx="4.5" ry="4" fill="#9a9a00" shape-rendering="auto"/>
<circle cx="1290.5" cy="335.3" r="1" fill="#202000" shape-rendering="auto"/>
<ellipse cx="1290.5" cy="343.4" rx="4.5" ry="4" fill="#9a9a00" shape-rendering="auto"/>
<circle cx="1290.5" cy="343.4" r="1" fill="#202000" shape-rendering="auto"/>
<ellipse cx="1290.5" cy="351.5" rx="4.5" ry="4" fill="#9a9a00" shape-rendering="auto"/>
<circle cx="1290.5" cy="351.5" r="1" fill="#202000" shape-rendering="auto"/>
<ellipse cx="1290.5" cy="359.6" rx="4.5" ry="4" fill="#9a9a00" shape-rendering="auto"/>
<circle cx="1290.5" cy="359.6" r="1" fill="#202000" shape-rendering="auto"/>
<ellipse cx="1290.5" cy="367.7" rx="4.5" ry="4" fill="#9a9a00" shape-rendering="auto"/>
<circle cx="1290.5" cy="367.7" r="1" fill="#202000" shape-rendering="auto"/>
<ellipse cx="1290.5" cy="375.8" rx="4.5" ry="4" fill="#9a9a00" shape-rendering="auto"/>
<circle cx="1290.5" cy="375.8" r="1" fill="#202000" shape-rendering="auto"/>
<ellipse cx="1290.5" cy="383.9" rx="4.5" ry="4" fill="#9a9a00" shape-rendering="auto"/>
<circle cx="1290.5" cy="383.9" r="1" fill="#202000" shape-rendering="auto"/>
<ellipse cx="1290.5" cy="398.8" rx="4.5" ry="4" fill="#9a9a00" shape-rendering="auto"/>
<circle cx="1290.5" cy="398.8" r="1" fill="#202000" shape-rendering="auto"/>
<ellipse cx="1290.5" cy="407.1" rx="4.5" ry="4" fill="#9a9a00" shape-rendering="auto"/>
<circle cx="1290.5" cy="407.1" r="1" fill="#202000" shape-rendering="auto"/>
<ellipse cx="1290.5" cy="415.40000000000003" rx="4.5" ry="4" fill="#9a9a00" shape-rendering="auto"/>
<circle cx="1290.5" cy="415.40000000000003" r="1" fill="#202000" shape-rendering="auto"/>
<ellipse cx="1290.5" cy="423.7" rx="4.5" ry="4" fill="#9a9a00" shape-rendering="auto"/>
<circle cx="1290.5" cy="423.7" r="1" fill="#202000" shape-rendering="auto"/>
<ellipse cx="1290.5" cy="432.0" rx="4.5" ry="4" fill="#9a9a00" shape-rendering="auto"/>
<circle cx="1290.5" cy="432.0" r="1" fill="#202000" shape-rendering="auto"/>
<ellipse cx="1290.5" cy="440.3" rx="4.5" ry="4" fill="#9a9a00" shape-rendering="auto"/>
<circle cx="1290.5" cy="440.3" r="1" fill="#202000" shape-rendering="auto"/>
<ellipse cx="1290.5" cy="448.6" rx="4.5" ry="4" fill="#9a9a00" shape-rendering="auto"/>
<circle cx="1290.5" cy="448.6" r="1" fill="#202000" shape-rendering="auto"/>
<ellipse cx="1290.5" cy="456.90000000000003" rx="4.5" ry="4" fill="#9a9a00" shape-rendering="auto"/>
<circle cx="1290.5" cy="456.90000000000003" r="1" fill="#202000" shape-rendering="auto"/>
<ellipse cx="1290.5" cy="473.0" rx="4.5" ry="4" fill="#9a9a00" shape-rendering="auto"/>
<circle cx="1290.5" cy="473.0" r="1" fill="#202000" shape-rendering="auto"/>
<ellipse cx="1290.5" cy="481.3" rx="4.5" ry="4" fill="#9a9a00" shape-rendering="auto"/>
<circle cx="1290.5" cy="481.3" r="1" fill="#202000" shape-rendering="auto"/>
<ellipse cx="1290.5" cy="489.6" rx="4.5" ry="4" fill="#9a9a00" shape-rendering="auto"/>
<circle cx="1290.5" cy="489.6" r="1" fill="#202000" shape-rendering="auto"/>
<ellipse cx="1290.5" cy="497.9" rx="4.5" ry="4" fill="#9a9a00" shape-rendering="auto"/>
<circle cx="1290.5" cy="497.9" r="1" fill="#202000" shape-rendering="auto"/>
<ellipse cx="1290.5" cy="506.2" rx="4.5" ry="4" fill="#9a9a00" shape-rendering="auto"/>
<circle cx="1290.5" cy="506.2" r="1" fill="#202000" shape-rendering="auto"/>
<ellipse cx="1290.5" cy="514.5" rx="4.5" ry="4" fill="#9a9a00" shape-rendering="auto"/>
<circle cx="1290.5" cy="514.5" r="1" fill="#202000" shape-rendering="auto"/>
<ellipse cx="1290.5" cy="522.8" rx="4.5" ry="4" fill="#9a9a00" shape-rendering="auto"/>
<circle cx="1290.5" cy="522.8" r="1" fill="#202000" shape-rendering="auto"/>
<ellipse cx="1290.5" cy="531.1" rx="4.5" ry="4" fill="#9a9a00" shape-rendering="auto"/>
<circle cx="1290.5" cy="531.1" r="1" fill="#202000" shape-rendering="auto"/>
<ellipse cx="1148.5" cy="557.4" rx="3.6" ry="3.6" fill="#9a9a00" shape-rendering="auto"/>
<circle cx="1148.5" cy="557.4" r="1" fill="#202000" shape-rendering="auto"/>
<ellipse cx="1156.86" cy="557.4" rx="3.6" ry="3.6" fill="#9a9a00" shape-rendering="auto"/>
<circle cx="1156.86" cy="557.4" r="1" fill="#202000" shape-rendering="auto"/>
<ellipse cx="1165.22" cy="557.4" rx="3.6" ry="3.6" fill="#9a9a00" shape-rendering="auto"/>
<circle cx="1165.22" cy="557.4" r="1" fill="#202000" shape-rendering="auto"/>
<ellipse cx="1173.58" cy="557.4" rx="3.6" ry="3.6" fill="#9a9a00" shape-rendering="auto"/>
<circle cx="1173.58" cy="557.4" r="1" fill="#202000" shape-rendering="auto"/>
<ellipse cx="1181.94" cy="557.4" rx="3.6" ry="3.6" fill="#9a9a00" shape-rendering="auto"/>
<circle cx="1181.94" cy="557.4" r="1" fill="#202000" shape-rendering="auto"/>
<ellipse cx="1190.3" cy="557.4" rx="3.6" ry="3.6" fill="#9a9a00" shape-rendering="auto"/>
<circle cx="1190.3" cy="557.4" r="1" fill="#202000" shape-rendering="auto"/>
<ellipse cx="1198.66" cy="557.4" rx="3.6" ry="3.6" fill="#9a9a00" shape-rendering="auto"/>
<circle cx="1198.66" cy="557.4" r="1" fill="#202000" shape-rendering="auto"/>
<ellipse cx="1207.02" cy="557.4" rx="3.6" ry="3.6" fill="#9a9a00" shape-rendering="auto"/>
<circle cx="1207.02" cy="557.4" r="1" fill="#202000" shape-rendering="auto"/>
<ellipse cx="1215.38" cy="557.4" rx="3.6" ry="3.6" fill="#9a9a00" shape-rendering="auto"/>
<circle cx="1215.38" cy="557.4" r="1" fill="#202000" shape-rendering="auto"/>
<ellipse cx="1223.74" cy="557.4" rx="3.6" ry="3.6" fill="#9a9a00" shape-rendering="auto"/>
<circle cx="1223.74" cy="557.4" r="1" fill="#202000" shape-rendering="auto"/>
<ellipse cx="1232.1" cy="557.4" rx="3.6" ry="3.6" fill="#9a9a00" shape-rendering="auto"/>
<circle cx="1232.1" cy="557.4" r="1" fill="#202000" shape-rendering="auto"/>
<ellipse cx="1240.46" cy="557.4" rx="3.6" ry="3.6" fill="#9a9a00" shape-rendering="auto"/>
<circle cx="1240.46" cy="557.4" r="1" fill="#202000" shape-rendering="auto"/>
<ellipse cx="1248.82" cy="557.4" rx="3.6" ry="3.6" fill="#9a9a00" shape-rendering="auto"/>
<circle cx="1248.82" cy="557.4" r="1" fill="#202000" shape-rendering="auto"/>
<ellipse cx="1257.18" cy="557.4" rx="3.6" ry="3.6" fill="#9a9a00" shape-rendering="auto"/>
<circle cx="1257.18" cy="557.4" r="1" fill="#202000" shape-rendering="auto"/>
<ellipse cx="1265.54" cy="557.4" rx="3.6" ry="3.6" fill="#9a9a00" shape-rendering="auto"/>
<circle cx="1265.54" cy="557.4" r="1" fill="#202000" shape-rendering="auto"/>
<ellipse cx="1273.9" cy="557.4" rx="3.6" ry="3.6" fill="#9a9a00" shape-rendering="auto"/>
<circle cx="1273.9" cy="557.4" r="1" fill="#202000" shape-rendering="auto"/>
<ellipse cx="1282.26" cy="557.4" rx="3.6" ry="3.6" fill="#9a9a00" shape-rendering="auto"/>
<circle cx="1282.26" cy="557.4" r="1" fill="#202000" shape-rendering="auto"/>
<ellipse cx="1290.62" cy="557.4" rx="3.6" ry="3.6" fill="#9a9a00" shape-rendering="auto"/>
<circle cx="1290.62" cy="557.4" r="1" fill="#202000" shape-rendering="auto"/>
<ellipse cx="1148.5" cy="565.3" rx="3.6" ry="3.6" fill="#9a9a00" shape-rendering="auto"/>
<circle cx="1148.5" cy="565.3" r="1" fill="#202000" shape-rendering="auto"/>
<ellipse cx="1156.86" cy="565.3" rx="3.6" ry="3.6" fill="#9a9a00" shape-rendering="auto"/>
<circle cx="1156.86" cy="565.3" r="1" fill="#202000" shape-rendering="auto"/>
<ellipse cx="1165.22" cy="565.3" rx="3.6" ry="3.6" fill="#9a9a00" shape-rendering="auto"/>
<circle cx="1165.22" cy="565.3" r="1" fill="#202000" shape-rendering="auto"/>
<ellipse cx="1173.58" cy="565.3" rx="3.6" ry="3.6" fill="#9a9a00" shape-rendering="auto"/>
<circle cx="1173.58" cy="565.3" r="1" fill="#202000" shape-rendering="auto"/>
<ellipse cx="1181.94" cy="565.3" rx="3.6" ry="3.6" fill="#9a9a00" shape-rendering="auto"/>
<circle cx="1181.94" cy="565.3" r="1" fill="#202000" shape-rendering="auto"/>
<ellipse cx="1190.3" cy="565.3" rx="3.6" ry="3.6" fill="#9a9a00" shape-rendering="auto"/>
<circle cx="1190.3" cy="565.3" r="1" fill="#202000" shape-rendering="auto"/>
<ellipse cx="1198.66" cy="565.3" rx="3.6" ry="3.6" fill="#9a9a00" shape-rendering="auto"/>
<circle cx="1198.66" cy="565.3" r="1" fill="#202000" shape-rendering="auto"/>
<ellipse cx="1207.02" cy="565.3" rx="3.6" ry="3.6" fill="#9a9a00" shape-rendering="auto"/>
<circle cx="1207.02" cy="565.3" r="1" fill="#202000" shape-rendering="auto"/>
<ellipse cx="1215.38" cy="565.3" rx="3.6" ry="3.6" fill="#9a9a00" shape-rendering="auto"/>
<circle cx="1215.38" cy="565.3" r="1" fill="#202000" shape-rendering="auto"/>
<ellipse cx="1223.74" cy="565.3" rx="3.6" ry="3.6" fill="#9a9a00" shape-rendering="auto"/>
<circle cx="1223.74" cy="565.3" r="1" fill="#202000" shape-rendering="auto"/>
<ellipse cx="1232.1" cy="565.3" rx="3.6" ry="3.6" fill="#9a9a00" shape-rendering="auto"/>
<circle cx="1232.1" cy="565.3" r="1" fill="#202000" shape-rendering="auto"/>
<ellipse cx="1240.46" cy="565.3" rx="3.6" ry="3.6" fill="#9a9a00" shape-rendering="auto"/>
<circle cx="1240.46" cy="565.3" r="1" fill="#202000" shape-rendering="auto"/>
<ellipse cx="1248.82" cy="565.3" rx="3.6" ry="3.6" fill="#9a9a00" shape-rendering="auto"/>
<circle cx="1248.82" cy="565.3" r="1" fill="#202000" shape-rendering="auto"/>
<ellipse cx="1257.18" cy="565.3" rx="3.6" ry="3.6" fill="#9a9a00" shape-rendering="auto"/>
<circle cx="1257.18" cy="565.3" r="1" fill="#202000" shape-rendering="auto"/>
<ellipse cx="1265.54" cy="565.3" rx="3.6" ry="3.6" fill="#9a9a00" shape-rendering="auto"/>
<circle cx="1265.54" cy="565.3" r="1" fill="#202000" shape-rendering="auto"/>
<ellipse cx="1273.9" cy="565.3" rx="3.6" ry="3.6" fill="#9a9a00" shape-rendering="auto"/>
<circle cx="1273.9" cy="565.3" r="1" fill="#202000" shape-rendering="auto"/>
<ellipse cx="1282.26" cy="565.3" rx="3.6" ry="3.6" fill="#9a9a00" shape-rendering="auto"/>
<circle cx="1282.26" cy="565.3" r="1" fill="#202000" shape-rendering="auto"/>
<ellipse cx="1290.62" cy="565.3" rx="3.6" ry="3.6" fill="#9a9a00" shape-rendering="auto"/>
<circle cx="1290.62" cy="565.3" r="1" fill="#202000" shape-rendering="auto"/>
<text x="1305" y="345" fill="#c8c8c8" font-family="Liberation Mono" font-size="8" text-anchor="start" transform="rotate(-90 1305 345)" textLength="100" lengthAdjust="spacingAndGlyphs">ARDUINO_MEGA_SHIELD_R3</text>
<text x="1314" y="300" fill="#e0e0e0" font-family="Liberation Mono" font-size="8" text-anchor="start" transform="rotate(-90 1314 300)" textLength="45" lengthAdjust="spacingAndGlyphs">SHIELD101</text>
<path d="M1085 420Q1080 418 1079 423V436M1076 426H1085M1089 426V436M1089 431Q1091 426 1096 426M1109 426V436M1109 430Q1110 426 1114 426Q1118 426 1118 430V436M1122 421V433Q1122 436 1125 436M1120 426H1125" fill="none" stroke="#c80000" stroke-width="1.2" shape-rendering="auto"/><ellipse cx="1101.5" cy="431" rx="4" ry="5" fill="none" stroke="#c80000" stroke-width="1.2" shape-rendering="auto"/>
<g transform="translate(1353 0) scale(-1 1)"><path d="M0 232V249H8Q13 249 13 244.5Q13 240 8 240H0M0 232H7Q11 232 11 236Q11 240 7 240M18 238Q21 236 25 237Q27 238 27 241V249M27 243Q18 242 18 246Q18 249 22 249Q26 249 27 246M39 238Q36 236 33 238Q31 240 31 243Q31 249 36 249Q38 249 39 248M44 232V249M53 237L45 244M47 242L53 249" fill="none" stroke="#00b000" stroke-width="1.2" shape-rendering="auto"/></g>
<rect x="1303.5" y="251.5" width="76" height="54" fill="none" stroke="#00b0b0" stroke-width="1"/>
<rect x="1383.5" y="251.5" width="76" height="54" fill="none" stroke="#00b0b0" stroke-width="1"/>
<ellipse cx="1323" cy="259" rx="4" ry="7" fill="#9a9a00" shape-rendering="auto"/>
<ellipse cx="1363" cy="259" rx="4" ry="7" fill="#9a9a00" shape-rendering="auto"/>
<ellipse cx="1315" cy="279" rx="4" ry="7" fill="#9a9a00" shape-rendering="auto"/>
<ellipse cx="1323" cy="299" rx="4" ry="7" fill="#9a9a00" shape-rendering="auto"/>
<ellipse cx="1363" cy="299" rx="4" ry="7" fill="#9a9a00" shape-rendering="auto"/>
<path d="M1333 258H1336V300H1333M1328 279H1361M1365 266V292" fill="none" stroke="#00b0b0"/>
<text x="1371" y="300" fill="#e0e0e0" font-family="Liberation Mono" font-size="8" text-anchor="start" transform="rotate(-90 1371 300)" textLength="20" lengthAdjust="spacingAndGlyphs">G5LA</text>
<text x="1382" y="302" fill="#e0e0e0" font-family="Liberation Mono" font-size="8" text-anchor="start" transform="rotate(-90 1382 302)" textLength="22" lengthAdjust="spacingAndGlyphs">K602</text>
<ellipse cx="1403" cy="259" rx="4" ry="7" fill="#9a9a00" shape-rendering="auto"/>
<ellipse cx="1443" cy="259" rx="4" ry="7" fill="#9a9a00" shape-rendering="auto"/>
<ellipse cx="1395" cy="279" rx="4" ry="7" fill="#9a9a00" shape-rendering="auto"/>
<ellipse cx="1403" cy="299" rx="4" ry="7" fill="#9a9a00" shape-rendering="auto"/>
<ellipse cx="1443" cy="299" rx="4" ry="7" fill="#9a9a00" shape-rendering="auto"/>
<path d="M1413 258H1416V300H1413M1408 279H1441M1445 266V292" fill="none" stroke="#00b0b0"/>
<text x="1451" y="300" fill="#e0e0e0" font-family="Liberation Mono" font-size="8" text-anchor="start" transform="rotate(-90 1451 300)" textLength="20" lengthAdjust="spacingAndGlyphs">G5LA</text>
<text x="1462" y="302" fill="#e0e0e0" font-family="Liberation Mono" font-size="8" text-anchor="start" transform="rotate(-90 1462 302)" textLength="22" lengthAdjust="spacingAndGlyphs">K601</text>
<rect x="1469" y="254" width="35" height="32" fill="#a00000"/>
<rect x="1469.5" y="263.5" width="35" height="32" fill="none" stroke="#00b0b0" stroke-width="1"/>
<rect x="1474" y="296" width="8" height="15" fill="#a00000"/><rect x="1490" y="296" width="8" height="15" fill="#a00000"/>
<text x="1472" y="309" fill="#c0c0c0" font-family="Liberation Mono" font-size="7" text-anchor="start" textLength="30" lengthAdjust="spacingAndGlyphs">IRF540N</text>
<text x="1476" y="262" fill="#e0e0e0" font-family="Liberation Mono" font-size="7" text-anchor="start" textLength="18" lengthAdjust="spacingAndGlyphs">Q304</text>
<rect x="1511.5" y="251.5" width="67" height="30" fill="none" stroke="#00b0b0" stroke-width="1"/>
<ellipse cx="1527.0" cy="261" rx="4" ry="4" fill="#9a9a00" shape-rendering="auto"/>
<circle cx="1527.0" cy="261" r="1" fill="#202000" shape-rendering="auto"/>
<ellipse cx="1527.0" cy="270" rx="4" ry="4" fill="#9a9a00" shape-rendering="auto"/>
<circle cx="1527.0" cy="270" r="1" fill="#202000" shape-rendering="auto"/>
<ellipse cx="1535.4" cy="261" rx="4" ry="4" fill="#9a9a00" shape-rendering="auto"/>
<circle cx="1535.4" cy="261" r="1" fill="#202000" shape-rendering="auto"/>
<ellipse cx="1535.4" cy="270" rx="4" ry="4" fill="#9a9a00" shape-rendering="auto"/>
<circle cx="1535.4" cy="270" r="1" fill="#202000" shape-rendering="auto"/>
<ellipse cx="1543.8" cy="261" rx="4" ry="4" fill="#9a9a00" shape-rendering="auto"/>
<circle cx="1543.8" cy="261" r="1" fill="#202000" shape-rendering="auto"/>
<ellipse cx="1543.8" cy="270" rx="4" ry="4" fill="#9a9a00" shape-rendering="auto"/>
<circle cx="1543.8" cy="270" r="1" fill="#202000" shape-rendering="auto"/>
<ellipse cx="1552.2" cy="261" rx="4" ry="4" fill="#9a9a00" shape-rendering="auto"/>
<circle cx="1552.2" cy="261" r="1" fill="#202000" shape-rendering="auto"/>
<ellipse cx="1552.2" cy="270" rx="4" ry="4" fill="#9a9a00" shape-rendering="auto"/>
<circle cx="1552.2" cy="270" r="1" fill="#202000" shape-rendering="auto"/>
<ellipse cx="1560.6" cy="261" rx="4" ry="4" fill="#9a9a00" shape-rendering="auto"/>
<circle cx="1560.6" cy="261" r="1" fill="#202000" shape-rendering="auto"/>
<ellipse cx="1560.6" cy="270" rx="4" ry="4" fill="#9a9a00" shape-rendering="auto"/>
<circle cx="1560.6" cy="270" r="1" fill="#202000" shape-rendering="auto"/>
<rect x="1524" y="265" width="7" height="9" fill="#8c8b00"/>
<rect x="1540.5" y="276.5" width="9" height="5" fill="none" stroke="#00b0b0" stroke-width="1"/>
<text x="1544" y="248" fill="#e0e0e0" font-family="Liberation Mono" font-size="6" text-anchor="middle">J402</text>
<text x="1544" y="286" fill="#a0a0a0" font-family="Liberation Mono" font-size="6" text-anchor="middle" textLength="28" lengthAdjust="spacingAndGlyphs">HEADER_2X5</text>
<rect x="1582.5" y="251.5" width="67" height="30" fill="none" stroke="#00b0b0" stroke-width="1"/>
<ellipse cx="1598.0" cy="261" rx="4" ry="4" fill="#9a9a00" shape-rendering="auto"/>
<circle cx="1598.0" cy="261" r="1" fill="#202000" shape-rendering="auto"/>
<ellipse cx="1598.0" cy="270" rx="4" ry="4" fill="#9a9a00" shape-rendering="auto"/>
<circle cx="1598.0" cy="270" r="1" fill="#202000" shape-rendering="auto"/>
<ellipse cx="1606.4" cy="261" rx="4" ry="4" fill="#9a9a00" shape-rendering="auto"/>
<circle cx="1606.4" cy="261" r="1" fill="#202000" shape-rendering="auto"/>
<ellipse cx="1606.4" cy="270" rx="4" ry="4" fill="#9a9a00" shape-rendering="auto"/>
<circle cx="1606.4" cy="270" r="1" fill="#202000" shape-rendering="auto"/>
<ellipse cx="1614.8" cy="261" rx="4" ry="4" fill="#9a9a00" shape-rendering="auto"/>
<circle cx="1614.8" cy="261" r="1" fill="#202000" shape-rendering="auto"/>
<ellipse cx="1614.8" cy="270" rx="4" ry="4" fill="#9a9a00" shape-rendering="auto"/>
<circle cx="1614.8" cy="270" r="1" fill="#202000" shape-rendering="auto"/>
<ellipse cx="1623.2" cy="261" rx="4" ry="4" fill="#9a9a00" shape-rendering="auto"/>
<circle cx="1623.2" cy="261" r="1" fill="#202000" shape-rendering="auto"/>
<ellipse cx="1623.2" cy="270" rx="4" ry="4" fill="#9a9a00" shape-rendering="auto"/>
<circle cx="1623.2" cy="270" r="1" fill="#202000" shape-rendering="auto"/>
<ellipse cx="1631.6" cy="261" rx="4" ry="4" fill="#9a9a00" shape-rendering="auto"/>
<circle cx="1631.6" cy="261" r="1" fill="#202000" shape-rendering="auto"/>
<ellipse cx="1631.6" cy="270" rx="4" ry="4" fill="#9a9a00" shape-rendering="auto"/>
<circle cx="1631.6" cy="270" r="1" fill="#202000" shape-rendering="auto"/>
<rect x="1595" y="265" width="7" height="9" fill="#8c8b00"/>
<rect x="1611.5" y="276.5" width="9" height="5" fill="none" stroke="#00b0b0" stroke-width="1"/>
<text x="1615" y="248" fill="#e0e0e0" font-family="Liberation Mono" font-size="6" text-anchor="middle">J401</text>
<text x="1615" y="286" fill="#a0a0a0" font-family="Liberation Mono" font-size="6" text-anchor="middle" textLength="28" lengthAdjust="spacingAndGlyphs">HEADER_2X5</text>
<rect x="1657.5" y="251.5" width="67" height="30" fill="none" stroke="#00b0b0" stroke-width="1"/>
<ellipse cx="1673.0" cy="261" rx="4" ry="4" fill="#9a9a00" shape-rendering="auto"/>
<circle cx="1673.0" cy="261" r="1" fill="#202000" shape-rendering="auto"/>
<ellipse cx="1673.0" cy="270" rx="4" ry="4" fill="#9a9a00" shape-rendering="auto"/>
<circle cx="1673.0" cy="270" r="1" fill="#202000" shape-rendering="auto"/>
<ellipse cx="1681.4" cy="261" rx="4" ry="4" fill="#9a9a00" shape-rendering="auto"/>
<circle cx="1681.4" cy="261" r="1" fill="#202000" shape-rendering="auto"/>
<ellipse cx="1681.4" cy="270" rx="4" ry="4" fill="#9a9a00" shape-rendering="auto"/>
<circle cx="1681.4" cy="270" r="1" fill="#202000" shape-rendering="auto"/>
<ellipse cx="1689.8" cy="261" rx="4" ry="4" fill="#9a9a00" shape-rendering="auto"/>
<circle cx="1689.8" cy="261" r="1" fill="#202000" shape-rendering="auto"/>
<ellipse cx="1689.8" cy="270" rx="4" ry="4" fill="#9a9a00" shape-rendering="auto"/>
<circle cx="1689.8" cy="270" r="1" fill="#202000" shape-rendering="auto"/>
<ellipse cx="1698.2" cy="261" rx="4" ry="4" fill="#9a9a00" shape-rendering="auto"/>
<circle cx="1698.2" cy="261" r="1" fill="#202000" shape-rendering="auto"/>
<ellipse cx="1698.2" cy="270" rx="4" ry="4" fill="#9a9a00" shape-rendering="auto"/>
<circle cx="1698.2" cy="270" r="1" fill="#202000" shape-rendering="auto"/>
<ellipse cx="1706.6" cy="261" rx="4" ry="4" fill="#9a9a00" shape-rendering="auto"/>
<circle cx="1706.6" cy="261" r="1" fill="#202000" shape-rendering="auto"/>
<ellipse cx="1706.6" cy="270" rx="4" ry="4" fill="#9a9a00" shape-rendering="auto"/>
<circle cx="1706.6" cy="270" r="1" fill="#202000" shape-rendering="auto"/>
<rect x="1670" y="265" width="7" height="9" fill="#8c8b00"/>
<rect x="1686.5" y="276.5" width="9" height="5" fill="none" stroke="#00b0b0" stroke-width="1"/>
<text x="1690" y="248" fill="#e0e0e0" font-family="Liberation Mono" font-size="6" text-anchor="middle">J302</text>
<text x="1690" y="286" fill="#a0a0a0" font-family="Liberation Mono" font-size="6" text-anchor="middle" textLength="28" lengthAdjust="spacingAndGlyphs">HEADER_2X5</text>
<rect x="1124.5" y="588.5" width="67" height="30" fill="none" stroke="#00b0b0" stroke-width="1"/>
<ellipse cx="1141.0" cy="598" rx="4" ry="4" fill="#9a9a00" shape-rendering="auto"/>
<circle cx="1141.0" cy="598" r="1" fill="#202000" shape-rendering="auto"/>
<ellipse cx="1141.0" cy="607.8" rx="4" ry="4" fill="#9a9a00" shape-rendering="auto"/>
<circle cx="1141.0" cy="607.8" r="1" fill="#202000" shape-rendering="auto"/>
<ellipse cx="1149.4" cy="598" rx="4" ry="4" fill="#9a9a00" shape-rendering="auto"/>
<circle cx="1149.4" cy="598" r="1" fill="#202000" shape-rendering="auto"/>
<ellipse cx="1149.4" cy="607.8" rx="4" ry="4" fill="#9a9a00" shape-rendering="auto"/>
<circle cx="1149.4" cy="607.8" r="1" fill="#202000" shape-rendering="auto"/>
<ellipse cx="1157.8" cy="598" rx="4" ry="4" fill="#9a9a00" shape-rendering="auto"/>
<circle cx="1157.8" cy="598" r="1" fill="#202000" shape-rendering="auto"/>
<ellipse cx="1157.8" cy="607.8" rx="4" ry="4" fill="#9a9a00" shape-rendering="auto"/>
<circle cx="1157.8" cy="607.8" r="1" fill="#202000" shape-rendering="auto"/>
<ellipse cx="1166.2" cy="598" rx="4" ry="4" fill="#9a9a00" shape-rendering="auto"/>
<circle cx="1166.2" cy="598" r="1" fill="#202000" shape-rendering="auto"/>
<ellipse cx="1166.2" cy="607.8" rx="4" ry="4" fill="#9a9a00" shape-rendering="auto"/>
<circle cx="1166.2" cy="607.8" r="1" fill="#202000" shape-rendering="auto"/>
<ellipse cx="1174.6" cy="598" rx="4" ry="4" fill="#9a9a00" shape-rendering="auto"/>
<circle cx="1174.6" cy="598" r="1" fill="#202000" shape-rendering="auto"/>
<ellipse cx="1174.6" cy="607.8" rx="4" ry="4" fill="#9a9a00" shape-rendering="auto"/>
<circle cx="1174.6" cy="607.8" r="1" fill="#202000" shape-rendering="auto"/>
<rect x="1137" y="603" width="7" height="9" fill="#8c8b00"/>
<rect x="1153.5" y="614.5" width="9" height="4" fill="none" stroke="#00b0b0" stroke-width="1"/>
<text x="1157.5" y="586" fill="#e0e0e0" font-family="Liberation Mono" font-size="6" text-anchor="middle">J203</text>
<text x="1157.5" y="623" fill="#a0a0a0" font-family="Liberation Mono" font-size="6" text-anchor="middle" textLength="28" lengthAdjust="spacingAndGlyphs">HEADER_2X5</text>
<rect x="1194.5" y="588.5" width="68" height="30" fill="none" stroke="#00b0b0" stroke-width="1"/>
<ellipse cx="1211.0" cy="598" rx="4" ry="4" fill="#9a9a00" shape-rendering="auto"/>
<circle cx="1211.0" cy="598" r="1" fill="#202000" shape-rendering="auto"/>
<ellipse cx="1211.0" cy="607.8" rx="4" ry="4" fill="#9a9a00" shape-rendering="auto"/>
<circle cx="1211.0" cy="607.8" r="1" fill="#202000" shape-rendering="auto"/>
<ellipse cx="1219.4" cy="598" rx="4" ry="4" fill="#9a9a00" shape-rendering="auto"/>
<circle cx="1219.4" cy="598" r="1" fill="#202000" shape-rendering="auto"/>
<ellipse cx="1219.4" cy="607.8" rx="4" ry="4" fill="#9a9a00" shape-rendering="auto"/>
<circle cx="1219.4" cy="607.8" r="1" fill="#202000" shape-rendering="auto"/>
<ellipse cx="1227.8" cy="598" rx="4" ry="4" fill="#9a9a00" shape-rendering="auto"/>
<circle cx="1227.8" cy="598" r="1" fill="#202000" shape-rendering="auto"/>
<ellipse cx="1227.8" cy="607.8" rx="4" ry="4" fill="#9a9a00" shape-rendering="auto"/>
<circle cx="1227.8" cy="607.8" r="1" fill="#202000" shape-rendering="auto"/>
<ellipse cx="1236.2" cy="598" rx="4" ry="4" fill="#9a9a00" shape-rendering="auto"/>
<circle cx="1236.2" cy="598" r="1" fill="#202000" shape-rendering="auto"/>
<ellipse cx="1236.2" cy="607.8" rx="4" ry="4" fill="#9a9a00" shape-rendering="auto"/>
<circle cx="1236.2" cy="607.8" r="1" fill="#202000" shape-rendering="auto"/>
<ellipse cx="1244.6" cy="598" rx="4" ry="4" fill="#9a9a00" shape-rendering="auto"/>
<circle cx="1244.6" cy="598" r="1" fill="#202000" shape-rendering="auto"/>
<ellipse cx="1244.6" cy="607.8" rx="4" ry="4" fill="#9a9a00" shape-rendering="auto"/>
<circle cx="1244.6" cy="607.8" r="1" fill="#202000" shape-rendering="auto"/>
<rect x="1207" y="603" width="7" height="9" fill="#8c8b00"/>
<rect x="1223.5" y="614.5" width="9" height="4" fill="none" stroke="#00b0b0" stroke-width="1"/>
<text x="1228.0" y="586" fill="#e0e0e0" font-family="Liberation Mono" font-size="6" text-anchor="middle">J204</text>
<text x="1228.0" y="623" fill="#a0a0a0" font-family="Liberation Mono" font-size="6" text-anchor="middle" textLength="28" lengthAdjust="spacingAndGlyphs">HEADER_2X5</text>
<rect x="1269.5" y="588.5" width="68" height="30" fill="none" stroke="#00b0b0" stroke-width="1"/>
<ellipse cx="1286.0" cy="598" rx="4" ry="4" fill="#9a9a00" shape-rendering="auto"/>
<circle cx="1286.0" cy="598" r="1" fill="#202000" shape-rendering="auto"/>
<ellipse cx="1286.0" cy="607.8" rx="4" ry="4" fill="#9a9a00" shape-rendering="auto"/>
<circle cx="1286.0" cy="607.8" r="1" fill="#202000" shape-rendering="auto"/>
<ellipse cx="1294.4" cy="598" rx="4" ry="4" fill="#9a9a00" shape-rendering="auto"/>
<circle cx="1294.4" cy="598" r="1" fill="#202000" shape-rendering="auto"/>
<ellipse cx="1294.4" cy="607.8" rx="4" ry="4" fill="#9a9a00" shape-rendering="auto"/>
<circle cx="1294.4" cy="607.8" r="1" fill="#202000" shape-rendering="auto"/>
<ellipse cx="1302.8" cy="598" rx="4" ry="4" fill="#9a9a00" shape-rendering="auto"/>
<circle cx="1302.8" cy="598" r="1" fill="#202000" shape-rendering="auto"/>
<ellipse cx="1302.8" cy="607.8" rx="4" ry="4" fill="#9a9a00" shape-rendering="auto"/>
<circle cx="1302.8" cy="607.8" r="1" fill="#202000" shape-rendering="auto"/>
<ellipse cx="1311.2" cy="598" rx="4" ry="4" fill="#9a9a00" shape-rendering="auto"/>
<circle cx="1311.2" cy="598" r="1" fill="#202000" shape-rendering="auto"/>
<ellipse cx="1311.2" cy="607.8" rx="4" ry="4" fill="#9a9a00" shape-rendering="auto"/>
<circle cx="1311.2" cy="607.8" r="1" fill="#202000" shape-rendering="auto"/>
<ellipse cx="1319.6" cy="598" rx="4" ry="4" fill="#9a9a00" shape-rendering="auto"/>
<circle cx="1319.6" cy="598" r="1" fill="#202000" shape-rendering="auto"/>
<ellipse cx="1319.6" cy="607.8" rx="4" ry="4" fill="#9a9a00" shape-rendering="auto"/>
<circle cx="1319.6" cy="607.8" r="1" fill="#202000" shape-rendering="auto"/>
<rect x="1282" y="603" width="7" height="9" fill="#8c8b00"/>
<rect x="1298.5" y="614.5" width="9" height="4" fill="none" stroke="#00b0b0" stroke-width="1"/>
<text x="1303.0" y="586" fill="#e0e0e0" font-family="Liberation Mono" font-size="6" text-anchor="middle">J202</text>
<text x="1303.0" y="623" fill="#a0a0a0" font-family="Liberation Mono" font-size="6" text-anchor="middle" textLength="28" lengthAdjust="spacingAndGlyphs">HEADER_2X5</text>
<rect x="1340.5" y="588.5" width="68" height="30" fill="none" stroke="#00b0b0" stroke-width="1"/>
<ellipse cx="1357.0" cy="598" rx="4" ry="4" fill="#9a9a00" shape-rendering="auto"/>
<circle cx="1357.0" cy="598" r="1" fill="#202000" shape-rendering="auto"/>
<ellipse cx="1357.0" cy="607.8" rx="4" ry="4" fill="#9a9a00" shape-rendering="auto"/>
<circle cx="1357.0" cy="607.8" r="1" fill="#202000" shape-rendering="auto"/>
<ellipse cx="1365.4" cy="598" rx="4" ry="4" fill="#9a9a00" shape-rendering="auto"/>
<circle cx="1365.4" cy="598" r="1" fill="#202000" shape-rendering="auto"/>
<ellipse cx="1365.4" cy="607.8" rx="4" ry="4" fill="#9a9a00" shape-rendering="auto"/>
<circle cx="1365.4" cy="607.8" r="1" fill="#202000" shape-rendering="auto"/>
<ellipse cx="1373.8" cy="598" rx="4" ry="4" fill="#9a9a00" shape-rendering="auto"/>
<circle cx="1373.8" cy="598" r="1" fill="#202000" shape-rendering="auto"/>
<ellipse cx="1373.8" cy="607.8" rx="4" ry="4" fill="#9a9a00" shape-rendering="auto"/>
<circle cx="1373.8" cy="607.8" r="1" fill="#202000" shape-rendering="auto"/>
<ellipse cx="1382.2" cy="598" rx="4" ry="4" fill="#9a9a00" shape-rendering="auto"/>
<circle cx="1382.2" cy="598" r="1" fill="#202000" shape-rendering="auto"/>
<ellipse cx="1382.2" cy="607.8" rx="4" ry="4" fill="#9a9a00" shape-rendering="auto"/>
<circle cx="1382.2" cy="607.8" r="1" fill="#202000" shape-rendering="auto"/>
<ellipse cx="1390.6" cy="598" rx="4" ry="4" fill="#9a9a00" shape-rendering="auto"/>
<circle cx="1390.6" cy="598" r="1" fill="#202000" shape-rendering="auto"/>
<ellipse cx="1390.6" cy="607.8" rx="4" ry="4" fill="#9a9a00" shape-rendering="auto"/>
<circle cx="1390.6" cy="607.8" r="1" fill="#202000" shape-rendering="auto"/>
<rect x="1353" y="603" width="7" height="9" fill="#8c8b00"/>
<rect x="1369.5" y="614.5" width="9" height="4" fill="none" stroke="#00b0b0" stroke-width="1"/>
<text x="1374.0" y="586" fill="#e0e0e0" font-family="Liberation Mono" font-size="6" text-anchor="middle">J201</text>
<text x="1374.0" y="623" fill="#a0a0a0" font-family="Liberation Mono" font-size="6" text-anchor="middle" textLength="28" lengthAdjust="spacingAndGlyphs">HEADER_2X5</text>
<rect x="1413.5" y="592.5" width="37" height="48" fill="none" stroke="#00b0b0" stroke-width="1"/>
<circle cx="1416.0" cy="596" r="1.8" fill="none" stroke="#d00000" shape-rendering="auto"/><circle cx="1416.0" cy="632" r="1.8" fill="none" stroke="#d00000" shape-rendering="auto"/>
<circle cx="1420.4" cy="596" r="1.8" fill="none" stroke="#d00000" shape-rendering="auto"/><circle cx="1420.4" cy="632" r="1.8" fill="none" stroke="#d00000" shape-rendering="auto"/>
<circle cx="1424.8" cy="596" r="1.8" fill="none" stroke="#d00000" shape-rendering="auto"/><circle cx="1424.8" cy="632" r="1.8" fill="none" stroke="#d00000" shape-rendering="auto"/>
<circle cx="1429.2" cy="596" r="1.8" fill="none" stroke="#d00000" shape-rendering="auto"/><circle cx="1429.2" cy="632" r="1.8" fill="none" stroke="#d00000" shape-rendering="auto"/>
<circle cx="1433.6" cy="596" r="1.8" fill="none" stroke="#d00000" shape-rendering="auto"/><circle cx="1433.6" cy="632" r="1.8" fill="none" stroke="#d00000" shape-rendering="auto"/>
<circle cx="1438.0" cy="596" r="1.8" fill="none" stroke="#d00000" shape-rendering="auto"/><circle cx="1438.0" cy="632" r="1.8" fill="none" stroke="#d00000" shape-rendering="auto"/>
<circle cx="1442.4" cy="596" r="1.8" fill="none" stroke="#d00000" shape-rendering="auto"/><circle cx="1442.4" cy="632" r="1.8" fill="none" stroke="#d00000" shape-rendering="auto"/>
<circle cx="1446.8" cy="596" r="1.8" fill="none" stroke="#d00000" shape-rendering="auto"/><circle cx="1446.8" cy="632" r="1.8" fill="none" stroke="#d00000" shape-rendering="auto"/>
<text x="1421" y="580" fill="#e0e0e0" font-family="Liberation Mono" font-size="9" text-anchor="start" textLength="34" lengthAdjust="spacingAndGlyphs">&gt;NAME</text>
<text x="1402" y="598" fill="#e0e0e0" font-family="Liberation Mono" font-size="6" text-anchor="start">U201</text>
<rect x="1453.5" y="588.5" width="50" height="30" fill="none" stroke="#00b0b0" stroke-width="1"/>
<rect x="1456" y="597" width="12" height="12" fill="#8c8b00"/>
<ellipse cx="1478" cy="603" rx="5" ry="5" fill="#9a9a00" shape-rendering="auto"/>
<circle cx="1478" cy="603" r="1" fill="#202000" shape-rendering="auto"/>
<ellipse cx="1494" cy="603" rx="5" ry="5" fill="#9a9a00" shape-rendering="auto"/>
<circle cx="1494" cy="603" r="1" fill="#202000" shape-rendering="auto"/>
<text x="1466" y="587" fill="#e0e0e0" font-family="Liberation Mono" font-size="9" text-anchor="start" textLength="27" lengthAdjust="spacingAndGlyphs">JP203</text>
<text x="1459" y="625" fill="#e0e0e0" font-family="Liberation Mono" font-size="8" text-anchor="start" textLength="40" lengthAdjust="spacingAndGlyphs">MOS5A0SH</text>
<rect x="1511.5" y="586.5" width="168" height="10" fill="none" stroke="#00b0b0" stroke-width="1"/>
<ellipse cx="1518.0" cy="591" rx="3.8" ry="4" fill="#9a9a00" shape-rendering="auto"/>
<circle cx="1518.0" cy="591" r="1" fill="#202000" shape-rendering="auto"/>
<ellipse cx="1526.15" cy="591" rx="3.8" ry="4" fill="#9a9a00" shape-rendering="auto"/>
<circle cx="1526.15" cy="591" r="1" fill="#202000" shape-rendering="auto"/>
<ellipse cx="1534.3" cy="591" rx="3.8" ry="4" fill="#9a9a00" shape-rendering="auto"/>
<circle cx="1534.3" cy="591" r="1" fill="#202000" shape-rendering="auto"/>
<ellipse cx="1542.45" cy="591" rx="3.8" ry="4" fill="#9a9a00" shape-rendering="auto"/>
<circle cx="1542.45" cy="591" r="1" fill="#202000" shape-rendering="auto"/>
<ellipse cx="1550.6" cy="591" rx="3.8" ry="4" fill="#9a9a00" shape-rendering="auto"/>
<circle cx="1550.6" cy="591" r="1" fill="#202000" shape-rendering="auto"/>
<ellipse cx="1558.75" cy="591" rx="3.8" ry="4" fill="#9a9a00" shape-rendering="auto"/>
<circle cx="1558.75" cy="591" r="1" fill="#202000" shape-rendering="auto"/>
<ellipse cx="1566.9" cy="591" rx="3.8" ry="4" fill="#9a9a00" shape-rendering="auto"/>
<circle cx="1566.9" cy="591" r="1" fill="#202000" shape-rendering="auto"/>
<ellipse cx="1575.05" cy="591" rx="3.8" ry="4" fill="#9a9a00" shape-rendering="auto"/>
<circle cx="1575.05" cy="591" r="1" fill="#202000" shape-rendering="auto"/>
<ellipse cx="1583.2" cy="591" rx="3.8" ry="4" fill="#9a9a00" shape-rendering="auto"/>
<circle cx="1583.2" cy="591" r="1" fill="#202000" shape-rendering="auto"/>
<ellipse cx="1591.35" cy="591" rx="3.8" ry="4" fill="#9a9a00" shape-rendering="auto"/>
<circle cx="1591.35" cy="591" r="1" fill="#202000" shape-rendering="auto"/>
<ellipse cx="1599.5" cy="591" rx="3.8" ry="4" fill="#9a9a00" shape-rendering="auto"/>
<circle cx="1599.5" cy="591" r="1" fill="#202000" shape-rendering="auto"/>
<ellipse cx="1607.65" cy="591" rx="3.8" ry="4" fill="#9a9a00" shape-rendering="auto"/>
<circle cx="1607.65" cy="591" r="1" fill="#202000" shape-rendering="auto"/>
<ellipse cx="1615.8" cy="591" rx="3.8" ry="4" fill="#9a9a00" shape-rendering="auto"/>
<circle cx="1615.8" cy="591" r="1" fill="#202000" shape-rendering="auto"/>
<ellipse cx="1623.95" cy="591" rx="3.8" ry="4" fill="#9a9a00" shape-rendering="auto"/>
<circle cx="1623.95" cy="591" r="1" fill="#202000" shape-rendering="auto"/>
<ellipse cx="1632.1" cy="591" rx="3.8" ry="4" fill="#9a9a00" shape-rendering="auto"/>
<circle cx="1632.1" cy="591" r="1" fill="#202000" shape-rendering="auto"/>
<ellipse cx="1640.25" cy="591" rx="3.8" ry="4" fill="#9a9a00" shape-rendering="auto"/>
<circle cx="1640.25" cy="591" r="1" fill="#202000" shape-rendering="auto"/>
<ellipse cx="1648.4" cy="591" rx="3.8" ry="4" fill="#9a9a00" shape-rendering="auto"/>
<circle cx="1648.4" cy="591" r="1" fill="#202000" shape-rendering="auto"/>
<ellipse cx="1656.55" cy="591" rx="3.8" ry="4" fill="#9a9a00" shape-rendering="auto"/>
<circle cx="1656.55" cy="591" r="1" fill="#202000" shape-rendering="auto"/>
<ellipse cx="1664.7" cy="591" rx="3.8" ry="4" fill="#9a9a00" shape-rendering="auto"/>
<circle cx="1664.7" cy="591" r="1" fill="#202000" shape-rendering="auto"/>
<ellipse cx="1672.85" cy="591" rx="3.8" ry="4" fill="#9a9a00" shape-rendering="auto"/>
<circle cx="1672.85" cy="591" r="1" fill="#202000" shape-rendering="auto"/>
<rect x="1672" y="587" width="8" height="9" fill="#8c8b00"/>
<text x="1563" y="605" fill="#c0c0c0" font-family="Liberation Mono" font-size="6" text-anchor="start" textLength="62" lengthAdjust="spacingAndGlyphs">LCD_2X16_HD44780</text>
<circle cx="1702" cy="603" r="13" fill="none" stroke="#00b0b0" shape-rendering="auto"/>
<rect x="1682" y="596" width="10" height="12" fill="#b00000"/><rect x="1706" y="596" width="10" height="12" fill="#b00000"/>
<circle cx="1144" cy="661" r="15" fill="none" stroke="#00b0b0" shape-rendering="auto"/>
<rect x="1127.5" y="644.5" width="34" height="34" fill="none" stroke="#00b0b0" stroke-width="1"/>
<rect x="1124" y="657" width="16" height="10" fill="#b00000"/><rect x="1150" y="657" width="16" height="10" fill="#b00000"/>
<rect x="1171" y="643" width="31" height="8" fill="#b00000"/><rect x="1171" y="671" width="31" height="10" fill="#b00000"/>
<path d="M1169.5 651.5H1202.5V672.5H1169.5V665L1172 662L1169.5 659Z" fill="none" stroke="#00b0b0"/>
<text x="1173" y="662" fill="#d0d0d0" font-family="Liberation Mono" font-size="8" text-anchor="start" textLength="26" lengthAdjust="spacingAndGlyphs">TUBOAD</text>
<text x="1172" y="669" fill="#d0d0d0" font-family="Liberation Mono" font-size="8" text-anchor="start" textLength="30" lengthAdjust="spacingAndGlyphs">PTCSND</text>
<text x="1176" y="679" fill="#e0e0e0" font-family="Liberation Mono" font-size="8" text-anchor="start" textLength="20" lengthAdjust="spacingAndGlyphs">F701</text>
<ellipse cx="1210.6" cy="653" rx="5" ry="5" fill="#9a9a00" shape-rendering="auto"/>
<circle cx="1210.6" cy="653" r="1" fill="#202000" shape-rendering="auto"/>
<rect x="1221.5" y="644.5" width="30" height="18" fill="none" stroke="#00b0b0" stroke-width="1"/>
<rect x="1256" y="648" width="11" height="11" fill="#8c8b00"/>
<text x="1236" y="640" fill="#c0c0c0" font-family="Liberation Mono" font-size="7" text-anchor="middle" textLength="46" lengthAdjust="spacingAndGlyphs">DIODE1N4148</text>
<text x="1230" y="673" fill="#e0e0e0" font-family="Liberation Mono" font-size="7" text-anchor="start" textLength="16" lengthAdjust="spacingAndGlyphs">D701</text>
<rect x="1275.5" y="646.5" width="39" height="23" fill="none" stroke="#00b0b0" stroke-width="1"/>
<ellipse cx="1279" cy="650" rx="3" ry="4" fill="#9a9a00" shape-rendering="auto"/>
<ellipse cx="1287" cy="650" rx="3" ry="4" fill="#9a9a00" shape-rendering="auto"/>
<ellipse cx="1311" cy="650" rx="3" ry="4" fill="#9a9a00" shape-rendering="auto"/>
<ellipse cx="1279" cy="666" rx="3" ry="4" fill="#9a9a00" shape-rendering="auto"/>
<ellipse cx="1287" cy="666" rx="3" ry="4" fill="#9a9a00" shape-rendering="auto"/>
<ellipse cx="1311" cy="666" rx="3" ry="4" fill="#9a9a00" shape-rendering="auto"/>
<text x="1293" y="654" fill="#e0e0e0" font-family="Liberation Mono" font-size="7" text-anchor="start" textLength="18" lengthAdjust="spacingAndGlyphs">K701</text>
<text x="1283" y="660" fill="#e0e0e0" font-family="Liberation Mono" font-size="7" text-anchor="start" textLength="18" lengthAdjust="spacingAndGlyphs">G5V1</text>
<rect x="1319.5" y="642.5" width="34" height="30" fill="none" stroke="#00b0b0" stroke-width="1"/>
<rect x="1319.5" y="669.5" width="34" height="6" fill="none" stroke="#00b0b0" stroke-width="1"/>
<rect x="1327" y="651" width="13" height="13" fill="#8c8b00"/>
<circle cx="1344" cy="657" r="6" fill="#8c8b00" shape-rendering="auto"/>
<text x="1336" y="641" fill="#e0e0e0" font-family="Liberation Mono" font-size="9" text-anchor="middle" textLength="20" lengthAdjust="spacingAndGlyphs">P701</text>
<rect x="1357.5" y="642.5" width="34" height="30" fill="none" stroke="#00b0b0" stroke-width="1"/>
<rect x="1357.5" y="669.5" width="34" height="6" fill="none" stroke="#00b0b0" stroke-width="1"/>
<rect x="1365" y="651" width="13" height="13" fill="#8c8b00"/>
<circle cx="1382" cy="657" r="6" fill="#8c8b00" shape-rendering="auto"/>
<text x="1374" y="641" fill="#e0e0e0" font-family="Liberation Mono" font-size="9" text-anchor="middle" textLength="20" lengthAdjust="spacingAndGlyphs">P702</text>
<rect x="1394.5" y="642.5" width="34" height="30" fill="none" stroke="#00b0b0" stroke-width="1"/>
<rect x="1394.5" y="669.5" width="34" height="6" fill="none" stroke="#00b0b0" stroke-width="1"/>
<rect x="1402" y="651" width="13" height="13" fill="#8c8b00"/>
<circle cx="1419" cy="657" r="6" fill="#8c8b00" shape-rendering="auto"/>
<text x="1411" y="641" fill="#e0e0e0" font-family="Liberation Mono" font-size="9" text-anchor="middle" textLength="20" lengthAdjust="spacingAndGlyphs">P703</text>
<text x="1383" y="639" fill="#e0e0e0" font-family="Liberation Mono" font-size="7" text-anchor="start" textLength="54" lengthAdjust="spacingAndGlyphs">LTN28B8HH-5P8F</text>
<text x="1397" y="658" fill="#e0e0e0" font-family="Liberation Mono" font-size="10" text-anchor="start" textLength="38" lengthAdjust="spacingAndGlyphs">&gt;VALUE</text>
<rect x="1420.5" y="654.5" width="45" height="14" fill="none" stroke="#00b0b0" stroke-width="1"/>
<text x="1433" y="662" fill="#e0e0e0" font-family="Liberation Mono" font-size="6" text-anchor="start">UN2</text>
<text x="1433" y="668" fill="#e0e0e0" font-family="Liberation Mono" font-size="6" text-anchor="start">805</text>
<ellipse cx="1438.0" cy="676" rx="3.5" ry="4" fill="#9a9a00" shape-rendering="auto"/>
<ellipse cx="1444.5" cy="676" rx="3.5" ry="4" fill="#9a9a00" shape-rendering="auto"/>
<ellipse cx="1451.0" cy="676" rx="3.5" ry="4" fill="#9a9a00" shape-rendering="auto"/>
<text x="1393" y="679" fill="#e0e0e0" font-family="Liberation Mono" font-size="8" text-anchor="start" textLength="37" lengthAdjust="spacingAndGlyphs">Do silnika</text>
<rect x="1470.5" y="643.5" width="41" height="22" fill="none" stroke="#00b0b0" stroke-width="1"/>
<rect x="1472" y="645" width="10" height="18" fill="#b00000"/><rect x="1499" y="645" width="10" height="18" fill="#b00000"/>
<rect x="1523" y="642" width="7" height="22" fill="#b00000"/><rect x="1533" y="642" width="7" height="22" fill="#b00000"/><rect x="1544" y="642" width="7" height="22" fill="#b00000"/>
<text x="1500" y="640" fill="#e0e0e0" font-family="Liberation Mono" font-size="9" text-anchor="start" textLength="72" lengthAdjust="spacingAndGlyphs">2038-15-SN-RPLF</text>
<text x="1524" y="671" fill="#e0e0e0" font-family="Liberation Mono" font-size="8" text-anchor="start" textLength="27" lengthAdjust="spacingAndGlyphs">GDT201</text>
<text x="1482" y="631" fill="#e0e0e0" font-family="Liberation Mono" font-size="8" text-anchor="start" textLength="30" lengthAdjust="spacingAndGlyphs">PTCSND</text>
<text x="1483" y="636" fill="#e0e0e0" font-family="Liberation Mono" font-size="8" text-anchor="start" textLength="20" lengthAdjust="spacingAndGlyphs">F702</text>
<path d="M1562 657L1566 647H1582L1585 657" fill="none" stroke="#00b0b0"/>
<rect x="1567" y="647" width="16" height="10" fill="#b00000"/>
<rect x="1562.5" y="664.5" width="24" height="12" fill="none" stroke="#00b0b0" stroke-width="1"/>
<rect x="1564" y="666" width="5" height="9" fill="#b00000"/><rect x="1571" y="666" width="5" height="9" fill="#b00000"/><rect x="1578" y="666" width="5" height="9" fill="#b00000"/>
<rect x="1590.5" y="645.5" width="42" height="16" fill="none" stroke="#c000c0" stroke-width="1.5"/>
<ellipse cx="1597" cy="653" rx="3.5" ry="5" fill="#9a9a00" shape-rendering="auto"/>
<ellipse cx="1605" cy="653" rx="3.5" ry="5" fill="#9a9a00" shape-rendering="auto"/>
<ellipse cx="1613" cy="653" rx="3.5" ry="5" fill="#9a9a00" shape-rendering="auto"/>
<ellipse cx="1621" cy="653" rx="3.5" ry="5" fill="#9a9a00" shape-rendering="auto"/>
<rect x="1636.5" y="645.5" width="42" height="16" fill="none" stroke="#00b0b0" stroke-width="1"/>
<ellipse cx="1641" cy="653" rx="3.5" ry="5" fill="#9a9a00" shape-rendering="auto"/>
<ellipse cx="1649" cy="653" rx="3.5" ry="5" fill="#9a9a00" shape-rendering="auto"/>
<ellipse cx="1657" cy="653" rx="3.5" ry="5" fill="#9a9a00" shape-rendering="auto"/>
<ellipse cx="1665" cy="653" rx="3.5" ry="5" fill="#9a9a00" shape-rendering="auto"/>
<text x="1611" y="669" fill="#a0a0a0" font-family="Liberation Mono" font-size="5" text-anchor="middle" textLength="20" lengthAdjust="spacingAndGlyphs">Jump dump</text>
<text x="1657" y="669" fill="#a0a0a0" font-family="Liberation Mono" font-size="5" text-anchor="middle" textLength="37" lengthAdjust="spacingAndGlyphs">auto board on/off</text>
<rect x="1688" y="642" width="10" height="18" fill="#b00000"/><rect x="1705" y="642" width="10" height="18" fill="#b00000"/>
<rect x="1691.5" y="643.5" width="25" height="20" fill="none" stroke="#00b0b0" stroke-width="1"/>
<rect x="1124" y="686" width="17" height="7" fill="#b00000"/><rect x="1145" y="686" width="17" height="7" fill="#b00000"/>
<rect x="1124.5" y="693.5" width="17" height="24" fill="none" stroke="#00b0b0" stroke-width="1"/>
<rect x="1145.5" y="693.5" width="17" height="24" fill="none" stroke="#00b0b0" stroke-width="1"/>
<rect x="1124" y="714" width="17" height="8" fill="#b00000"/><rect x="1145" y="714" width="17" height="8" fill="#b00000"/>
<text x="1124" y="684" fill="#e0e0e0" font-family="Liberation Mono" font-size="8" text-anchor="start" textLength="37" lengthAdjust="spacingAndGlyphs">K902 4C901</text>
<text x="1153" y="716" fill="#e0e0e0" font-family="Liberation Mono" font-size="9" text-anchor="start" textLength="20" lengthAdjust="spacingAndGlyphs">H303</text>
<rect x="1169.5" y="686.5" width="34" height="18" fill="none" stroke="#00b0b0" stroke-width="1"/>
<rect x="1172" y="688" width="10" height="14" fill="#b00000"/><rect x="1191" y="688" width="10" height="14" fill="#b00000"/>
<rect x="1207.5" y="684.5" width="25" height="21" fill="none" stroke="#00b0b0" stroke-width="1"/>
<rect x="1209" y="689" width="8" height="10" fill="#8c8b00"/>
<ellipse cx="1220" cy="694.5" rx="3.5" ry="4.5" fill="#9a9a00" shape-rendering="auto"/>
<circle cx="1220" cy="694.5" r="1" fill="#202000" shape-rendering="auto"/>
<ellipse cx="1228" cy="694.5" rx="3.5" ry="4.5" fill="#9a9a00" shape-rendering="auto"/>
<circle cx="1228" cy="694.5" r="1" fill="#202000" shape-rendering="auto"/>
<text x="1219" y="683" fill="#e0e0e0" font-family="Liberation Mono" font-size="8" text-anchor="middle" textLength="18.0" lengthAdjust="spacingAndGlyphs">J702</text>
<rect x="1236.5" y="684.5" width="25" height="21" fill="none" stroke="#00b0b0" stroke-width="1"/>
<rect x="1238" y="689" width="8" height="10" fill="#8c8b00"/>
<ellipse cx="1249" cy="694.5" rx="3.5" ry="4.5" fill="#9a9a00" shape-rendering="auto"/>
<circle cx="1249" cy="694.5" r="1" fill="#202000" shape-rendering="auto"/>
<ellipse cx="1257" cy="694.5" rx="3.5" ry="4.5" fill="#9a9a00" shape-rendering="auto"/>
<circle cx="1257" cy="694.5" r="1" fill="#202000" shape-rendering="auto"/>
<text x="1248" y="683" fill="#e0e0e0" font-family="Liberation Mono" font-size="8" text-anchor="middle" textLength="22.5" lengthAdjust="spacingAndGlyphs">JP202</text>
<rect x="1265.5" y="684.5" width="25" height="21" fill="none" stroke="#00b0b0" stroke-width="1"/>
<rect x="1267" y="689" width="8" height="10" fill="#8c8b00"/>
<ellipse cx="1278" cy="694.5" rx="3.5" ry="4.5" fill="#9a9a00" shape-rendering="auto"/>
<circle cx="1278" cy="694.5" r="1" fill="#202000" shape-rendering="auto"/>
<ellipse cx="1286" cy="694.5" rx="3.5" ry="4.5" fill="#9a9a00" shape-rendering="auto"/>
<circle cx="1286" cy="694.5" r="1" fill="#202000" shape-rendering="auto"/>
<text x="1277" y="683" fill="#e0e0e0" font-family="Liberation Mono" font-size="8" text-anchor="middle" textLength="22.5" lengthAdjust="spacingAndGlyphs">JP201</text>
<rect x="1294.5" y="684.5" width="25" height="21" fill="none" stroke="#00b0b0" stroke-width="1"/>
<rect x="1296" y="689" width="8" height="10" fill="#8c8b00"/>
<ellipse cx="1307" cy="694.5" rx="3.5" ry="4.5" fill="#9a9a00" shape-rendering="auto"/>
<circle cx="1307" cy="694.5" r="1" fill="#202000" shape-rendering="auto"/>
<ellipse cx="1315" cy="694.5" rx="3.5" ry="4.5" fill="#9a9a00" shape-rendering="auto"/>
<circle cx="1315" cy="694.5" r="1" fill="#202000" shape-rendering="auto"/>
<text x="1306" y="683" fill="#e0e0e0" font-family="Liberation Mono" font-size="8" text-anchor="middle" textLength="18.0" lengthAdjust="spacingAndGlyphs">J901</text>
<text x="1202" y="712" fill="#e0e0e0" font-family="Liberation Mono" font-size="8" text-anchor="start" textLength="110" lengthAdjust="spacingAndGlyphs">HEADER_3JUMPER-3JUMPER_3</text>
<rect x="1325" y="687" width="7" height="16" fill="#b00000"/><rect x="1349" y="687" width="7" height="16" fill="#b00000"/>
<rect x="1329.5" y="685.5" width="22" height="19" fill="none" stroke="#00b0b0" stroke-width="1"/>
<text x="1327" y="680" fill="#e0e0e0" font-family="Liberation Mono" font-size="8" text-anchor="start" textLength="22" lengthAdjust="spacingAndGlyphs">13.8V</text>
<text x="1325" y="686" fill="#e0e0e0" font-family="Liberation Mono" font-size="7" text-anchor="start" textLength="20" lengthAdjust="spacingAndGlyphs">AC712</text>
<text x="1330" y="708" fill="#e0e0e0" font-family="Liberation Mono" font-size="7" text-anchor="start" textLength="16" lengthAdjust="spacingAndGlyphs">U703</text>
<rect x="1359" y="684" width="10" height="15" fill="#b00000"/><rect x="1379" y="684" width="10" height="15" fill="#b00000"/>
<rect x="1359.5" y="684.5" width="30" height="15" fill="none" stroke="#00b0b0" stroke-width="1"/>
<text x="1360" y="680" fill="#e0e0e0" font-family="Liberation Mono" font-size="8" text-anchor="start" textLength="30" lengthAdjust="spacingAndGlyphs">CONN_2</text>
<rect x="1396" y="684" width="10" height="15" fill="#b00000"/><rect x="1415" y="684" width="10" height="15" fill="#b00000"/>
<rect x="1396.5" y="684.5" width="30" height="15" fill="none" stroke="#00b0b0" stroke-width="1"/>
<path d="M1131 726H1141L1146 731V741L1141 746H1131L1126 741V731Z" fill="#10a4a4" stroke="#10a4a4" stroke-width="1" stroke-linejoin="round" shape-rendering="auto"/>
<path d="M1155.5 726H1165.5L1170.5 731V741L1165.5 746H1155.5L1150.5 741V731Z" fill="#10a4a4" stroke="#10a4a4" stroke-width="1" stroke-linejoin="round" shape-rendering="auto"/>
<path d="M1181 726H1191L1196 731V741L1191 746H1181L1176 741V731Z" fill="#10a4a4" stroke="#10a4a4" stroke-width="1" stroke-linejoin="round" shape-rendering="auto"/>
<path d="M1210 726H1220L1225 731V741L1220 746H1210L1205 741V731Z" fill="#10a4a4" stroke="#10a4a4" stroke-width="1" stroke-linejoin="round" shape-rendering="auto"/>
<path d="M1235 726H1245L1250 731V741L1245 746H1235L1230 741V731Z" fill="#10a4a4" stroke="#10a4a4" stroke-width="1" stroke-linejoin="round" shape-rendering="auto"/>
<path d="M1260 726H1270L1275 731V741L1270 746H1260L1255 741V731Z" fill="#10a4a4" stroke="#10a4a4" stroke-width="1" stroke-linejoin="round" shape-rendering="auto"/>
<path d="M1440.0 685H1450.0L1455.0 690V700L1450.0 705H1440.0L1435.0 700V690Z" fill="#10a4a4" stroke="#10a4a4" stroke-width="1" stroke-linejoin="round" shape-rendering="auto"/>
<path d="M1466.3 685H1476.3L1481.3 690V700L1476.3 705H1466.3L1461.3 700V690Z" fill="#10a4a4" stroke="#10a4a4" stroke-width="1" stroke-linejoin="round" shape-rendering="auto"/>
<path d="M1492.6 685H1502.6L1507.6 690V700L1502.6 705H1492.6L1487.6 700V690Z" fill="#10a4a4" stroke="#10a4a4" stroke-width="1" stroke-linejoin="round" shape-rendering="auto"/>
<path d="M1518.9 685H1528.9L1533.9 690V700L1528.9 705H1518.9L1513.9 700V690Z" fill="#10a4a4" stroke="#10a4a4" stroke-width="1" stroke-linejoin="round" shape-rendering="auto"/>
<path d="M1545.2 685H1555.2L1560.2 690V700L1555.2 705H1545.2L1540.2 700V690Z" fill="#10a4a4" stroke="#10a4a4" stroke-width="1" stroke-linejoin="round" shape-rendering="auto"/>
<path d="M1571.5 685H1581.5L1586.5 690V700L1581.5 705H1571.5L1566.5 700V690Z" fill="#10a4a4" stroke="#10a4a4" stroke-width="1" stroke-linejoin="round" shape-rendering="auto"/>
<path d="M1597.8 685H1607.8L1612.8 690V700L1607.8 705H1597.8L1592.8 700V690Z" fill="#10a4a4" stroke="#10a4a4" stroke-width="1" stroke-linejoin="round" shape-rendering="auto"/>
<path d="M1624.1 685H1634.1L1639.1 690V700L1634.1 705H1624.1L1619.1 700V690Z" fill="#10a4a4" stroke="#10a4a4" stroke-width="1" stroke-linejoin="round" shape-rendering="auto"/>
<path d="M1650.4 685H1660.4L1665.4 690V700L1660.4 705H1650.4L1645.4 700V690Z" fill="#10a4a4" stroke="#10a4a4" stroke-width="1" stroke-linejoin="round" shape-rendering="auto"/>
<path d="M1676.7 685H1686.7L1691.7 690V700L1686.7 705H1676.7L1671.7 700V690Z" fill="#10a4a4" stroke="#10a4a4" stroke-width="1" stroke-linejoin="round" shape-rendering="auto"/>
<text x="1047" y="726" fill="#d8d8d8" font-family="Liberation Mono" font-size="7" text-anchor="start" textLength="200" lengthAdjust="spacingAndGlyphs">OPTOCOUPLER_4PIN_PS2501_CHANNEL</text>
<text x="1127" y="739" fill="#e8e8e8" font-family="Liberation Mono" font-size="7" text-anchor="start" textLength="48" lengthAdjust="spacingAndGlyphs">MOUNT-HOLE3,2</text>
<text x="1150" y="739" fill="#e8e8e8" font-family="Liberation Mono" font-size="7" text-anchor="start" textLength="48" lengthAdjust="spacingAndGlyphs">MOUNT-HOLE3,2</text>
<text x="1175" y="739" fill="#e8e8e8" font-family="Liberation Mono" font-size="7" text-anchor="start" textLength="48" lengthAdjust="spacingAndGlyphs">MOUNT-HOLE3,2</text>
<text x="1205" y="739" fill="#e8e8e8" font-family="Liberation Mono" font-size="7" text-anchor="start" textLength="48" lengthAdjust="spacingAndGlyphs">MOUNT-HOLE3,2</text>
<text x="1230" y="739" fill="#e8e8e8" font-family="Liberation Mono" font-size="7" text-anchor="start" textLength="48" lengthAdjust="spacingAndGlyphs">MOUNT-HOLE3,2</text>
<text x="1255" y="739" fill="#e8e8e8" font-family="Liberation Mono" font-size="7" text-anchor="start" textLength="48" lengthAdjust="spacingAndGlyphs">MOUNT-HOLE3,2</text>
<text x="1428.0" y="698" fill="#e8e8e8" font-family="Liberation Mono" font-size="7" text-anchor="start" textLength="48" lengthAdjust="spacingAndGlyphs">MOUNT-HOLE3,2</text>
<text x="1454.3" y="698" fill="#e8e8e8" font-family="Liberation Mono" font-size="7" text-anchor="start" textLength="48" lengthAdjust="spacingAndGlyphs">MOUNT-HOLE3,2</text>
<text x="1480.6" y="698" fill="#e8e8e8" font-family="Liberation Mono" font-size="7" text-anchor="start" textLength="48" lengthAdjust="spacingAndGlyphs">MOUNT-HOLE3,2</text>
<text x="1506.9" y="698" fill="#e8e8e8" font-family="Liberation Mono" font-size="7" text-anchor="start" textLength="48" lengthAdjust="spacingAndGlyphs">MOUNT-HOLE3,2</text>
<text x="1533.2" y="698" fill="#e8e8e8" font-family="Liberation Mono" font-size="7" text-anchor="start" textLength="48" lengthAdjust="spacingAndGlyphs">MOUNT-HOLE3,2</text>
<text x="1559.5" y="698" fill="#e8e8e8" font-family="Liberation Mono" font-size="7" text-anchor="start" textLength="48" lengthAdjust="spacingAndGlyphs">MOUNT-HOLE3,2</text>
<text x="1585.8" y="698" fill="#e8e8e8" font-family="Liberation Mono" font-size="7" text-anchor="start" textLength="48" lengthAdjust="spacingAndGlyphs">MOUNT-HOLE3,2</text>
<text x="1612.1" y="698" fill="#e8e8e8" font-family="Liberation Mono" font-size="7" text-anchor="start" textLength="48" lengthAdjust="spacingAndGlyphs">MOUNT-HOLE3,2</text>
<text x="1638.4" y="698" fill="#e8e8e8" font-family="Liberation Mono" font-size="7" text-anchor="start" textLength="48" lengthAdjust="spacingAndGlyphs">MOUNT-HOLE3,2</text>
<text x="1664.7" y="698" fill="#e8e8e8" font-family="Liberation Mono" font-size="7" text-anchor="start" textLength="48" lengthAdjust="spacingAndGlyphs">MOUNT-HOLE3,2</text>
<text x="1690" y="722" fill="#e0e0e0" font-family="Liberation Mono" font-size="8" text-anchor="start" transform="rotate(-90 1690 722)" textLength="60" lengthAdjust="spacingAndGlyphs">MOUNT-HOLE3,2</text>
<text x="1707" y="728" fill="#e0e0e0" font-family="Liberation Mono" font-size="8" text-anchor="start" transform="rotate(-90 1707 728)" textLength="20" lengthAdjust="spacingAndGlyphs">H304</text>
<rect x="1396" y="687" width="18" height="14" fill="#b00000"/>
<rect x="1298.5" y="729.5" width="16" height="16" fill="none" stroke="#00b0b0" stroke-width="1"/>
<rect x="1286" y="731" width="36" height="10" fill="#a00000" opacity="0.8"/>
<rect x="1314" y="722" width="30" height="15" fill="#b00000"/>
<rect x="1125.5" y="770.0" width="13" height="8" fill="#b00000"/><rect x="1129.5" y="771.0" width="5" height="6" fill="#c0a0c0"/>
<rect x="1142.5" y="770.0" width="13" height="8" fill="#b00000"/><rect x="1146.5" y="771.0" width="5" height="6" fill="#c0a0c0"/>
<rect x="1158.5" y="770.0" width="13" height="8" fill="#10b010"/><rect x="1162.5" y="771.0" width="5" height="6" fill="#c0a0c0"/>
<rect x="1175.5" y="770.0" width="13" height="8" fill="#b00000"/><rect x="1179.5" y="771.0" width="5" height="6" fill="#c0a0c0"/>
<rect x="1192.1" y="770.0" width="13" height="8" fill="#b00000"/><rect x="1196.1" y="771.0" width="5" height="6" fill="#c0a0c0"/>
<rect x="1208.5" y="770.0" width="13" height="8" fill="#b00000"/><rect x="1212.5" y="771.0" width="5" height="6" fill="#c0a0c0"/>
<rect x="1225.5" y="770.0" width="13" height="8" fill="#b00000"/><rect x="1229.5" y="771.0" width="5" height="6" fill="#c0a0c0"/>
<rect x="1242.1" y="770.0" width="13" height="8" fill="#b00000"/><rect x="1246.1" y="771.0" width="5" height="6" fill="#c0a0c0"/>
<rect x="1258.5" y="770.0" width="13" height="8" fill="#b00000"/><rect x="1262.5" y="771.0" width="5" height="6" fill="#c0a0c0"/>
<rect x="1275.5" y="770.0" width="13" height="8" fill="#b00000"/><rect x="1279.5" y="771.0" width="5" height="6" fill="#c0a0c0"/>
<rect x="1292.1" y="770.0" width="13" height="8" fill="#b00000"/><rect x="1296.1" y="771.0" width="5" height="6" fill="#c0a0c0"/>
<rect x="1309.3" y="770.0" width="13" height="8" fill="#b00000"/><rect x="1313.3" y="771.0" width="5" height="6" fill="#c0a0c0"/>
<rect x="1325.5" y="770.0" width="13" height="8" fill="#b00000"/><rect x="1329.5" y="771.0" width="5" height="6" fill="#c0a0c0"/>
<rect x="1342.5" y="770.0" width="13" height="8" fill="#b00000"/><rect x="1346.5" y="771.0" width="5" height="6" fill="#c0a0c0"/>
<rect x="1359.5" y="770.0" width="13" height="8" fill="#b00000"/><rect x="1363.5" y="771.0" width="5" height="6" fill="#c0a0c0"/>
<rect x="1375.5" y="770.0" width="13" height="8" fill="#b00000"/><rect x="1379.5" y="771.0" width="5" height="6" fill="#c0a0c0"/>
<rect x="1396.3" y="770.0" width="13" height="8" fill="#b00000"/><rect x="1400.3" y="771.0" width="5" height="6" fill="#c0a0c0"/>
<rect x="1412.5" y="770.0" width="13" height="8" fill="#b00000"/><rect x="1416.5" y="771.0" width="5" height="6" fill="#c0a0c0"/>
<rect x="1429.5" y="770.0" width="13" height="8" fill="#b00000"/><rect x="1433.5" y="771.0" width="5" height="6" fill="#c0a0c0"/>
<rect x="1446.5" y="770.0" width="13" height="8" fill="#b00000"/><rect x="1450.5" y="771.0" width="5" height="6" fill="#c0a0c0"/>
<rect x="1463.0" y="770.0" width="13" height="8" fill="#b00000"/><rect x="1467.0" y="771.0" width="5" height="6" fill="#c0a0c0"/>
<rect x="1479.5" y="770.0" width="13" height="8" fill="#10b010"/><rect x="1483.5" y="771.0" width="5" height="6" fill="#c0a0c0"/>
<rect x="1496.5" y="770.0" width="13" height="8" fill="#b00000"/><rect x="1500.5" y="771.0" width="5" height="6" fill="#c0a0c0"/>
<rect x="1513.0" y="770.0" width="13" height="8" fill="#b00000"/><rect x="1517.0" y="771.0" width="5" height="6" fill="#c0a0c0"/>
<rect x="1529.5" y="770.0" width="13" height="8" fill="#10b010"/><rect x="1533.5" y="771.0" width="5" height="6" fill="#c0a0c0"/>
<rect x="1546.5" y="770.0" width="13" height="8" fill="#b00000"/><rect x="1550.5" y="771.0" width="5" height="6" fill="#c0a0c0"/>
<rect x="1563.1" y="770.0" width="13" height="8" fill="#b00000"/><rect x="1567.1" y="771.0" width="5" height="6" fill="#c0a0c0"/>
<rect x="1579.5" y="770.0" width="13" height="8" fill="#b00000"/><rect x="1583.5" y="771.0" width="5" height="6" fill="#c0a0c0"/>
<rect x="1596.5" y="770.0" width="13" height="8" fill="#b00000"/><rect x="1600.5" y="771.0" width="5" height="6" fill="#c0a0c0"/>
<rect x="1613.0" y="770.0" width="13" height="8" fill="#b00000"/><rect x="1617.0" y="771.0" width="5" height="6" fill="#c0a0c0"/>
<rect x="1629.5" y="770.0" width="13" height="8" fill="#b00000"/><rect x="1633.5" y="771.0" width="5" height="6" fill="#c0a0c0"/>
<rect x="1646.1" y="770.0" width="13" height="8" fill="#b00000"/><rect x="1650.1" y="771.0" width="5" height="6" fill="#c0a0c0"/>
<rect x="1665.5" y="770.0" width="13" height="8" fill="#b00000"/><rect x="1669.5" y="771.0" width="5" height="6" fill="#c0a0c0"/>
<rect x="1683.5" y="770.0" width="13" height="8" fill="#b00000"/><rect x="1687.5" y="771.0" width="5" height="6" fill="#c0a0c0"/>
<rect x="1125.5" y="782.5" width="13" height="8" fill="#b00000"/><rect x="1129.5" y="783.5" width="5" height="6" fill="#c0a0c0"/>
<rect x="1142.5" y="782.5" width="13" height="8" fill="#b00000"/><rect x="1146.5" y="783.5" width="5" height="6" fill="#c0a0c0"/>
<rect x="1158.5" y="782.5" width="13" height="8" fill="#b00000"/><rect x="1162.5" y="783.5" width="5" height="6" fill="#c0a0c0"/>
<rect x="1175.5" y="782.5" width="13" height="8" fill="#b00000"/><rect x="1179.5" y="783.5" width="5" height="6" fill="#c0a0c0"/>
<rect x="1189.7" y="781" width="10" height="11" fill="#b00000"/>
<rect x="1202" y="781" width="10" height="11" fill="#b00000"/>
<rect x="1214.7" y="781" width="10" height="11" fill="#b00000"/>
<rect x="1239" y="781" width="10" height="11" fill="#b00000"/>
<rect x="1145.0" y="756.5" width="16" height="10" fill="#b00000"/><rect x="1150.5" y="757.5" width="5" height="8" fill="#d0a0a0"/>
<rect x="1166.0" y="756.5" width="16" height="10" fill="#b00000"/><rect x="1171.5" y="757.5" width="5" height="8" fill="#d0a0a0"/>
<rect x="1186.7" y="756.5" width="16" height="10" fill="#b00000"/><rect x="1192.2" y="757.5" width="5" height="8" fill="#d0a0a0"/>
<rect x="1396.0" y="726.0" width="20" height="12" fill="#b00000"/><rect x="1403.5" y="727.0" width="5" height="10" fill="#d0d0e0"/>
<circle cx="1485.7" cy="732" r="7" fill="none" stroke="#00b0b0" shape-rendering="auto"/>
<rect x="1488.7" y="727" width="10" height="10" fill="#b00000"/>
<rect x="1504" y="735" width="9" height="11" fill="#b00000"/><rect x="1519" y="735" width="9" height="11" fill="#b00000"/>
<rect x="1508.5" y="736.5" width="16" height="9" fill="none" stroke="#00b0b0" stroke-width="1"/>
<path d="M1513 740.5H1520M1516.5 737V744" stroke="#3030ff"/>
<rect x="1528.5" y="735" width="9" height="11" fill="#b00000"/><rect x="1543.5" y="735" width="9" height="11" fill="#b00000"/>
<rect x="1533.0" y="736.5" width="16.0" height="9" fill="none" stroke="#00b0b0" stroke-width="1"/>
<path d="M1537.5 740.5H1544.5M1541.0 737V744" stroke="#3030ff"/>
<rect x="1554" y="735" width="9" height="11" fill="#b00000"/><rect x="1569" y="735" width="9" height="11" fill="#b00000"/>
<rect x="1558.5" y="736.5" width="16" height="9" fill="none" stroke="#00b0b0" stroke-width="1"/>
<path d="M1563 740.5H1570M1566.5 737V744" stroke="#3030ff"/>
<rect x="1578.6" y="735" width="9" height="11" fill="#b00000"/><rect x="1593.6" y="735" width="9" height="11" fill="#b00000"/>
<rect x="1583.1" y="736.5" width="16.0" height="9" fill="none" stroke="#00b0b0" stroke-width="1"/>
<path d="M1587.6 740.5H1594.6M1591.1 737V744" stroke="#3030ff"/>
<rect x="1607.8" y="735" width="9" height="11" fill="#b00000"/><rect x="1622.8" y="735" width="9" height="11" fill="#b00000"/>
<rect x="1612.3" y="736.5" width="16.0" height="9" fill="none" stroke="#00b0b0" stroke-width="1"/>
<path d="M1616.8 740.5H1623.8M1620.3 737V744" stroke="#3030ff"/>
<rect x="1632" y="735" width="9" height="11" fill="#b00000"/><rect x="1647" y="735" width="9" height="11" fill="#b00000"/>
<rect x="1636.5" y="736.5" width="16" height="9" fill="none" stroke="#00b0b0" stroke-width="1"/>
<path d="M1641 740.5H1648M1644.5 737V744" stroke="#3030ff"/>
<rect x="1656.8" y="735" width="9" height="11" fill="#b00000"/><rect x="1671.8" y="735" width="9" height="11" fill="#b00000"/>
<rect x="1661.3" y="736.5" width="16.0" height="9" fill="none" stroke="#00b0b0" stroke-width="1"/>
<path d="M1665.8 740.5H1672.8M1669.3 737V744" stroke="#3030ff"/>
<rect x="1680" y="736" width="22" height="9" fill="#b00000"/><rect x="1686" y="737" width="10" height="7" fill="#d0a0c0"/>
<text x="1502" y="730" fill="#d0d0d0" font-family="Liberation Mono" font-size="5" text-anchor="start" textLength="175" lengthAdjust="spacingAndGlyphs">TSP4212 TSP4211 6N55 6N54 BNK2 BNK3</text>
<rect x="1401.0" y="753.5" width="13" height="7" fill="#b00000"/><rect x="1405.0" y="754.5" width="5" height="5" fill="#c0a0c0"/>
<rect x="1413.1" y="753.5" width="13" height="7" fill="#b00000"/><rect x="1417.1" y="754.5" width="5" height="5" fill="#c0a0c0"/>
<rect x="1429.0" y="753.5" width="13" height="7" fill="#b00000"/><rect x="1433.0" y="754.5" width="5" height="5" fill="#c0a0c0"/>
<rect x="1446.5" y="753.5" width="13" height="7" fill="#b00000"/><rect x="1450.5" y="754.5" width="5" height="5" fill="#c0a0c0"/>
<rect x="1462.5" y="753.5" width="13" height="7" fill="#b00000"/><rect x="1466.5" y="754.5" width="5" height="5" fill="#c0a0c0"/>
<rect x="1496.5" y="753.5" width="13" height="7" fill="#b00000"/><rect x="1500.5" y="754.5" width="5" height="5" fill="#c0a0c0"/>
<rect x="1513.0" y="753.5" width="13" height="7" fill="#b00000"/><rect x="1517.0" y="754.5" width="5" height="5" fill="#c0a0c0"/>
<rect x="1529.3" y="753.5" width="13" height="7" fill="#b00000"/><rect x="1533.3" y="754.5" width="5" height="5" fill="#c0a0c0"/>
<rect x="1546.5" y="753.5" width="13" height="7" fill="#b00000"/><rect x="1550.5" y="754.5" width="5" height="5" fill="#c0a0c0"/>
<rect x="1563.1" y="753.5" width="13" height="7" fill="#b00000"/><rect x="1567.1" y="754.5" width="5" height="5" fill="#c0a0c0"/>
<rect x="1579.5" y="753.5" width="13" height="7" fill="#b00000"/><rect x="1583.5" y="754.5" width="5" height="5" fill="#c0a0c0"/>
<rect x="1595.5" y="753.5" width="13" height="7" fill="#b00000"/><rect x="1599.5" y="754.5" width="5" height="5" fill="#c0a0c0"/>
<rect x="1613.3" y="753.5" width="13" height="7" fill="#b00000"/><rect x="1617.3" y="754.5" width="5" height="5" fill="#c0a0c0"/>
<rect x="1634.3" y="753.5" width="13" height="7" fill="#b00000"/><rect x="1638.3" y="754.5" width="5" height="5" fill="#c0a0c0"/>
<rect x="1650.5" y="753.5" width="13" height="7" fill="#b00000"/><rect x="1654.5" y="754.5" width="5" height="5" fill="#c0a0c0"/>
<rect x="1667.0" y="753.5" width="13" height="7" fill="#b00000"/><rect x="1671.0" y="754.5" width="5" height="5" fill="#c0a0c0"/>
<rect x="1684.5" y="753.5" width="13" height="7" fill="#b00000"/><rect x="1688.5" y="754.5" width="5" height="5" fill="#c0a0c0"/>
<path d="M1400 763.5H1545" stroke="#a0a0a0" stroke-width="1.5"/>
<rect x="1210.7" y="753" width="18" height="9" fill="#b00000"/><rect x="1214.7" y="754" width="10" height="7" fill="none" stroke="#20c0c0"/><path d="M1211.7 754L1227.7 761" stroke="#c040c0"/>
<rect x="1231.8" y="753" width="18" height="9" fill="#b00000"/><rect x="1235.8" y="754" width="10" height="7" fill="none" stroke="#20c0c0"/><path d="M1232.8 754L1248.8 761" stroke="#c040c0"/>
<rect x="1252.9" y="753" width="18" height="9" fill="#b00000"/><rect x="1256.9" y="754" width="10" height="7" fill="none" stroke="#20c0c0"/><path d="M1253.9 754L1269.9 761" stroke="#c040c0"/>
<rect x="1277" y="753" width="18" height="9" fill="#b00000"/><rect x="1281" y="754" width="10" height="7" fill="none" stroke="#20c0c0"/><path d="M1278 754L1294 761" stroke="#c040c0"/>
<text x="1553" y="752" fill="#e0e0e0" font-family="Liberation Mono" font-size="7" text-anchor="start" textLength="137" lengthAdjust="spacingAndGlyphs">R907R901R903R908R902 R906R904R905</text>
<text x="1556" y="767" fill="#e0e0e0" font-family="Liberation Mono" font-size="6" text-anchor="start" textLength="130" lengthAdjust="spacingAndGlyphs">10K 10K 10t 10K 10K  1k 10t 1k</text>
<text x="1430" y="744" fill="#d0d0d0" font-family="Liberation Mono" font-size="6" text-anchor="start" textLength="225" lengthAdjust="spacingAndGlyphs">TIP42 2N3904 NE555 6N138 BNK</text>
<text x="1182" y="798" fill="#e0e0e0" font-family="Liberation Mono" font-size="8" text-anchor="start" textLength="75" lengthAdjust="spacingAndGlyphs">TP702TP704 TP705</text>
<text x="1290" y="791" fill="#d0d0d0" font-family="Liberation Mono" font-size="8" text-anchor="start" textLength="50" lengthAdjust="spacingAndGlyphs">TEST-POINT3</text>
<text x="1268" y="812" fill="#d0d0d0" font-family="Liberation Mono" font-size="8" text-anchor="start" textLength="50" lengthAdjust="spacingAndGlyphs">TEST-POINT3</text>
<rect x="1311" y="792" width="8" height="7" fill="#b00000"/><rect x="1288" y="812" width="8" height="8" fill="#b00000"/>
<text x="1302" y="807" fill="#e0e0e0" font-family="Liberation Mono" font-size="8" text-anchor="start" textLength="25" lengthAdjust="spacingAndGlyphs">TP701</text>
<text x="1281" y="829" fill="#e0e0e0" font-family="Liberation Mono" font-size="8" text-anchor="start" textLength="25" lengthAdjust="spacingAndGlyphs">TP703</text>
<text x="1340" y="738" fill="#e0e0e0" font-family="Liberation Mono" font-size="8" text-anchor="start" textLength="50" lengthAdjust="spacingAndGlyphs">HEADER light</text>
<text x="1349" y="726" fill="#e0e0e0" font-family="Liberation Mono" font-size="8" text-anchor="start" textLength="40" lengthAdjust="spacingAndGlyphs">J701 J501</text>
<rect x="1349.5" y="726.5" width="17" height="19" fill="none" stroke="#00b0b0" stroke-width="1"/>
<rect x="1351" y="731" width="7" height="9" fill="#8c8b00"/>
<ellipse cx="1361" cy="735" rx="3" ry="4" fill="#9a9a00" shape-rendering="auto"/>
<circle cx="1361" cy="735" r="1" fill="#202000" shape-rendering="auto"/>
<rect x="1369.5" y="726.5" width="17" height="19" fill="none" stroke="#00b0b0" stroke-width="1"/>
<rect x="1371" y="731" width="7" height="9" fill="#8c8b00"/>
<ellipse cx="1381" cy="735" rx="3" ry="4" fill="#9a9a00" shape-rendering="auto"/>
<circle cx="1381" cy="735" r="1" fill="#202000" shape-rendering="auto"/>
<rect x="1398" y="726" width="18" height="14" fill="#b00000"/>
<ellipse cx="1432" cy="741" rx="5" ry="9" fill="none" stroke="#00b0b0" shape-rendering="auto"/>
<ellipse cx="1432" cy="734" rx="3" ry="4" fill="#9a9a00" shape-rendering="auto"/>
<ellipse cx="1432" cy="748" rx="3" ry="4" fill="#9a9a00" shape-rendering="auto"/>
<ellipse cx="1447" cy="741" rx="5" ry="9" fill="none" stroke="#00b0b0" shape-rendering="auto"/>
<ellipse cx="1447" cy="734" rx="3" ry="4" fill="#9a9a00" shape-rendering="auto"/>
<ellipse cx="1447" cy="748" rx="3" ry="4" fill="#9a9a00" shape-rendering="auto"/>
<ellipse cx="1464" cy="741" rx="5" ry="9" fill="none" stroke="#00b0b0" shape-rendering="auto"/>
<ellipse cx="1464" cy="734" rx="3" ry="4" fill="#9a9a00" shape-rendering="auto"/>
<ellipse cx="1464" cy="748" rx="3" ry="4" fill="#9a9a00" shape-rendering="auto"/>
<path d="M40 120.5H1716" stroke="#ffffff"/><path d="M778 120h1v1h-1z" fill="#000"/><path d="M778.5 121V281M778.5 723V1086" stroke="#ffffff"/><path d="M778.5 282V723" stroke="#6060ff"/>
</svg>
<div id="task" class="a" style="background:#0e141a;border-top:1px solid #39444e"></div>
<svg class="ic" style="left:0px;top:1161px" width="1920" height="39" viewBox="0 0 1920 39" ><defs><linearGradient id="tbg" x1="0" x2="1" y1="0" y2="0"><stop offset="0" stop-color="#0c1218"/><stop offset=".30" stop-color="#0f161c"/><stop offset=".325" stop-color="#2c3e4c"/><stop offset=".36" stop-color="#4a6272"/><stop offset=".46" stop-color="#5a7486"/><stop offset=".56" stop-color="#4e6878"/><stop offset=".66" stop-color="#3e5464"/><stop offset=".74" stop-color="#2c3c48"/><stop offset=".80" stop-color="#1a242c"/><stop offset=".86" stop-color="#0e1418"/><stop offset="1" stop-color="#0c1114"/></linearGradient><filter id="noise" x="0" y="0" width="100%" height="100%"><feTurbulence type="fractalNoise" baseFrequency="0.035 0.09" numOctaves="3" seed="7"/><feColorMatrix type="matrix" values="0 0 0 0 0.55  0 0 0 0 0.7  0 0 0 0 0.8  0 0 0 1.6 -0.75"/></filter><linearGradient id="tmask" x1="0" x2="1"><stop offset=".31" stop-color="#000"/><stop offset=".36" stop-color="#fff"/><stop offset=".72" stop-color="#fff"/><stop offset=".82" stop-color="#000"/></linearGradient><mask id="tm"><rect width="1920" height="39" fill="url(#tmask)"/></mask></defs><rect width="1920" height="39" fill="url(#tbg)"/><rect width="1920" height="39" filter="url(#noise)" mask="url(#tm)" opacity=".55"/><rect width="1920" height="19" fill="#fff" opacity=".04"/></svg>
<svg class="ic" style="left:3px;top:1160px" width="46" height="40" viewBox="0 0 46 40" ><circle cx="23" cy="20" r="18" fill="#1a4878" stroke="#0a1a30" stroke-width="1.5"/><circle cx="23" cy="20" r="16" fill="url(#orbg)"/><defs><radialGradient id="orbg" cx="50%" cy="80%" r="70%"><stop offset="0" stop-color="#60d0ff"/><stop offset=".6" stop-color="#2070b0"/><stop offset="1" stop-color="#0a2a50"/></radialGradient></defs><path d="M14 12Q18 10 22 12L21 19Q17 17 13 19Z" fill="#f05020"/><path d="M23 12Q27 14 31 12L30 19Q26 21 22 19Z" fill="#80c020"/><path d="M13 20Q17 18 21 20L20 27Q16 25 12 27Z" fill="#2090f0"/><path d="M22 20Q26 22 30 20L29 27Q25 29 21 27Z" fill="#f8c010"/></svg>
<div class="a" style="left:246px;top:1161px;width:58px;height:39px;border:1px solid #182028;border-radius:3px;background:linear-gradient(160deg,#8494a2 0%,#6a7a88 35%,#56646f 50%,#4c5a66 70%,#5a6a78 100%);box-shadow:inset 0 0 0 1px rgba(255,255,255,.3)"></div>
<div class="a" style="left:370px;top:1161px;width:58px;height:39px;border:1px solid #182028;border-radius:3px;background:linear-gradient(160deg,#8494a2 0%,#6a7a88 35%,#56646f 50%,#4c5a66 70%,#5a6a78 100%);box-shadow:inset 0 0 0 1px rgba(255,255,255,.3)"></div>
<div class="a" style="left:432px;top:1161px;width:58px;height:39px;border:1px solid #182028;border-radius:3px;background:linear-gradient(160deg,#8494a2 0%,#6a7a88 35%,#56646f 50%,#4c5a66 70%,#5a6a78 100%);box-shadow:inset 0 0 0 1px rgba(255,255,255,.3)"></div>
<div class="a" style="left:494px;top:1161px;width:58px;height:39px;border:1px solid #182028;border-radius:3px;background:linear-gradient(160deg,#8494a2 0%,#6a7a88 35%,#56646f 50%,#4c5a66 70%,#5a6a78 100%);box-shadow:inset 0 0 0 1px rgba(255,255,255,.3)"></div>
<div class="a" style="left:556px;top:1161px;width:58px;height:39px;border:1px solid #182028;border-radius:3px;background:linear-gradient(160deg,#aab6c2 0%,#8a98a6 35%,#75838f 50%,#6e7c88 70%,#7a8896 100%);box-shadow:inset 0 0 0 1px rgba(255,255,255,.3)"></div>
<svg class="ic" style="left:70px;top:1163px" width="38" height="34" viewBox="0 0 38 34" ><text x="5" y="30" font-family="Liberation Sans" font-size="36" font-weight="bold" fill="#30a8e8">e</text><path d="M4 28Q2 20 18 10Q34 2 34 8Q34 14 24 20" fill="none" stroke="#f0c020" stroke-width="2.5"/></svg>
<svg class="ic" style="left:133px;top:1163px" width="36" height="34" viewBox="0 0 36 34" ><path d="M3 6H14L16 9H33V30H3Z" fill="#f0d890" stroke="#c0a050"/><rect x="6" y="4" width="8" height="4" fill="#40c040"/><rect x="14" y="6" width="8" height="4" fill="#e03030"/><rect x="22" y="8" width="8" height="4" fill="#3090e0"/><path d="M8 20H28V33H24V25H12V33H8Z" fill="#90c8f0" stroke="#5090c0"/></svg>
<svg class="ic" style="left:195px;top:1165px" width="32" height="32" viewBox="0 0 32 32" ><rect x="4" y="2" width="24" height="27" rx="2" fill="#6a9ac8" stroke="#a0c8f0"/><circle cx="16" cy="15" r="9" fill="#f07818"/><path d="M13 10L21 15L13 20Z" fill="#fff"/></svg>
<svg class="ic" style="left:257px;top:1163px" width="34" height="34" viewBox="0 0 34 34" ><defs><radialGradient id="ffg" cx="40%" cy="35%" r="60%"><stop offset="0" stop-color="#60b0f0"/><stop offset="1" stop-color="#1a3a90"/></radialGradient><linearGradient id="ffo" x1="0" y1="0" x2="1" y2="1"><stop offset="0" stop-color="#f8c020"/><stop offset=".5" stop-color="#f06010"/><stop offset="1" stop-color="#c02010"/></linearGradient></defs><circle cx="17" cy="16" r="12" fill="url(#ffg)"/><path d="M6 8Q2 14 3 20Q6 31 18 31Q29 30 31 19Q32 11 27 6Q29 12 26 16Q25 10 20 8Q24 14 20 20Q16 24 11 21Q7 18 9 12Q6 14 6 18Q5 12 6 8Z" fill="url(#ffo)"/></svg>
<svg class="ic" style="left:320px;top:1164px" width="32" height="32" viewBox="0 0 32 32" ><circle cx="16" cy="16" r="14" fill="#10a8e8"/><circle cx="8" cy="8" r="6" fill="#10a8e8"/><circle cx="24" cy="24" r="6" fill="#10a8e8"/><text x="8.5" y="24" font-family="Liberation Sans" font-size="22" font-weight="bold" fill="#fff">S</text></svg>
<svg class="ic" style="left:383px;top:1164px" width="32" height="32" viewBox="0 0 32 32" ><circle cx="16" cy="16" r="14" fill="#10a8e8"/><circle cx="8" cy="8" r="6" fill="#10a8e8"/><circle cx="24" cy="24" r="6" fill="#10a8e8"/><text x="8.5" y="24" font-family="Liberation Sans" font-size="22" font-weight="bold" fill="#fff">S</text></svg>
<svg class="ic" style="left:446px;top:1164px" width="30" height="32" viewBox="0 0 30 32" ><rect x="2" y="2" width="26" height="28" fill="#f0e0c0" stroke="#c09020" stroke-width="2"/><path d="M10 6V26M10 16H20M14 10L20 6M14 22L20 26" stroke="#a04020" stroke-width="1.5"/><rect x="18" y="22" width="8" height="4" fill="none" stroke="#a04020"/></svg>
<svg class="ic" style="left:508px;top:1164px" width="30" height="32" viewBox="0 0 30 32" ><path d="M2 2H28V24L22 30H2Z" fill="#f8f8f8" stroke="#a0a0a0"/><path d="M8 8V26M8 16H16" stroke="#30a030" stroke-width="1.5"/><path d="M12 26L26 8" stroke="#202020" stroke-width="3"/><path d="M24 6L28 10" stroke="#e040e0" stroke-width="3"/></svg>
<svg class="ic" style="left:570px;top:1164px" width="30" height="32" viewBox="0 0 30 32" ><path d="M2 2H28V24L22 30H2Z" fill="#e8e8e8" stroke="#a0a0a0"/><path d="M6 4V26M10 4V22M14 4V18" stroke="#909090" stroke-width="1.5"/><path d="M12 26L26 8" stroke="#202020" stroke-width="3"/><path d="M24 6L28 10" stroke="#e040e0" stroke-width="3"/></svg>
<div class="a" style="left:1621px;top:1167px;color:#fff;font-size:12px">PL</div>
<svg class="ic" style="left:1640px;top:1170px" width="22" height="18" viewBox="0 0 22 18" ><rect x="2" y="5" width="18" height="10" fill="#c0c8d0" stroke="#606870"/><path d="M4 8H18M4 11H18" stroke="#707880" stroke-dasharray="1.5 1"/><path d="M11 5V1" stroke="#c0c8d0"/></svg>
<svg class="ic" style="left:1663px;top:1168px" width="20" height="22" viewBox="0 0 20 22" ><circle cx="10" cy="11" r="9" fill="#1a58c8" stroke="#c0d8f8"/><text x="5.5" y="16" font-family="Liberation Sans" font-size="13" font-weight="bold" fill="#fff">?</text></svg>
<svg class="ic" style="left:1688px;top:1166px" width="14" height="28" viewBox="0 0 14 28" ><rect x="5" y="3" width="6" height="4" fill="none" stroke="#fff"/><rect x="2" y="6" width="6" height="4" fill="none" stroke="#fff" /><path d="M3 17L7 21L11 17Z" fill="#fff"/></svg>
<svg class="ic" style="left:1705px;top:1172px" width="14" height="14" viewBox="0 0 14 14" ><path d="M2 10L7 5L12 10Z" fill="#e0e8f0"/></svg>
<svg class="ic" style="left:1728px;top:1170px" width="18" height="20" viewBox="0 0 18 20" ><path d="M2 2V19" stroke="#fff" stroke-width="1.5"/><path d="M3 3H10L12 5H16V11H10L8 9H3Z" fill="#fff"/></svg>
<svg class="ic" style="left:1752px;top:1170px" width="20" height="20" viewBox="0 0 20 20" ><path d="M2 7H6L11 2V18L6 13H2Z" fill="#e8e8e8"/><path d="M14 6Q16 10 14 14M16 4Q19 10 16 16" fill="none" stroke="#e8e8e8" stroke-width="1.2"/></svg>
<svg class="ic" style="left:1777px;top:1170px" width="20" height="20" viewBox="0 0 20 20" ><rect x="6" y="6" width="12" height="9" fill="#303840" stroke="#e8e8e8" stroke-width="1.5"/><path d="M3 2V18H12M2 2H4" stroke="#e8e8e8" stroke-width="1.5"/></svg>
<svg class="ic" style="left:1800px;top:1170px" width="20" height="20" viewBox="0 0 20 20" ><path d="M5 3L10 6L5 9L0 6ZM15 3L20 6L15 9L10 6ZM5 9L10 12L5 15L0 12ZM15 9L20 12L15 15L10 12Z" fill="#3a88e0"/><circle cx="14" cy="15" r="4.5" fill="#20a040" stroke="#fff"/></svg>
<div class="a" style="left:1845px;top:1164px;color:#fff;font-size:12px;text-align:center;width:38px">21:16</div>
<div class="a" style="left:1836px;top:1182px;color:#fff;font-size:12px;white-space:nowrap;letter-spacing:-0.3px">2014-01-16</div>
<div class="a" style="left:1906px;top:1161px;width:14px;height:39px;border:1px solid #505860;background:linear-gradient(90deg,#202830,#3a4450)"></div>
</body></html>
